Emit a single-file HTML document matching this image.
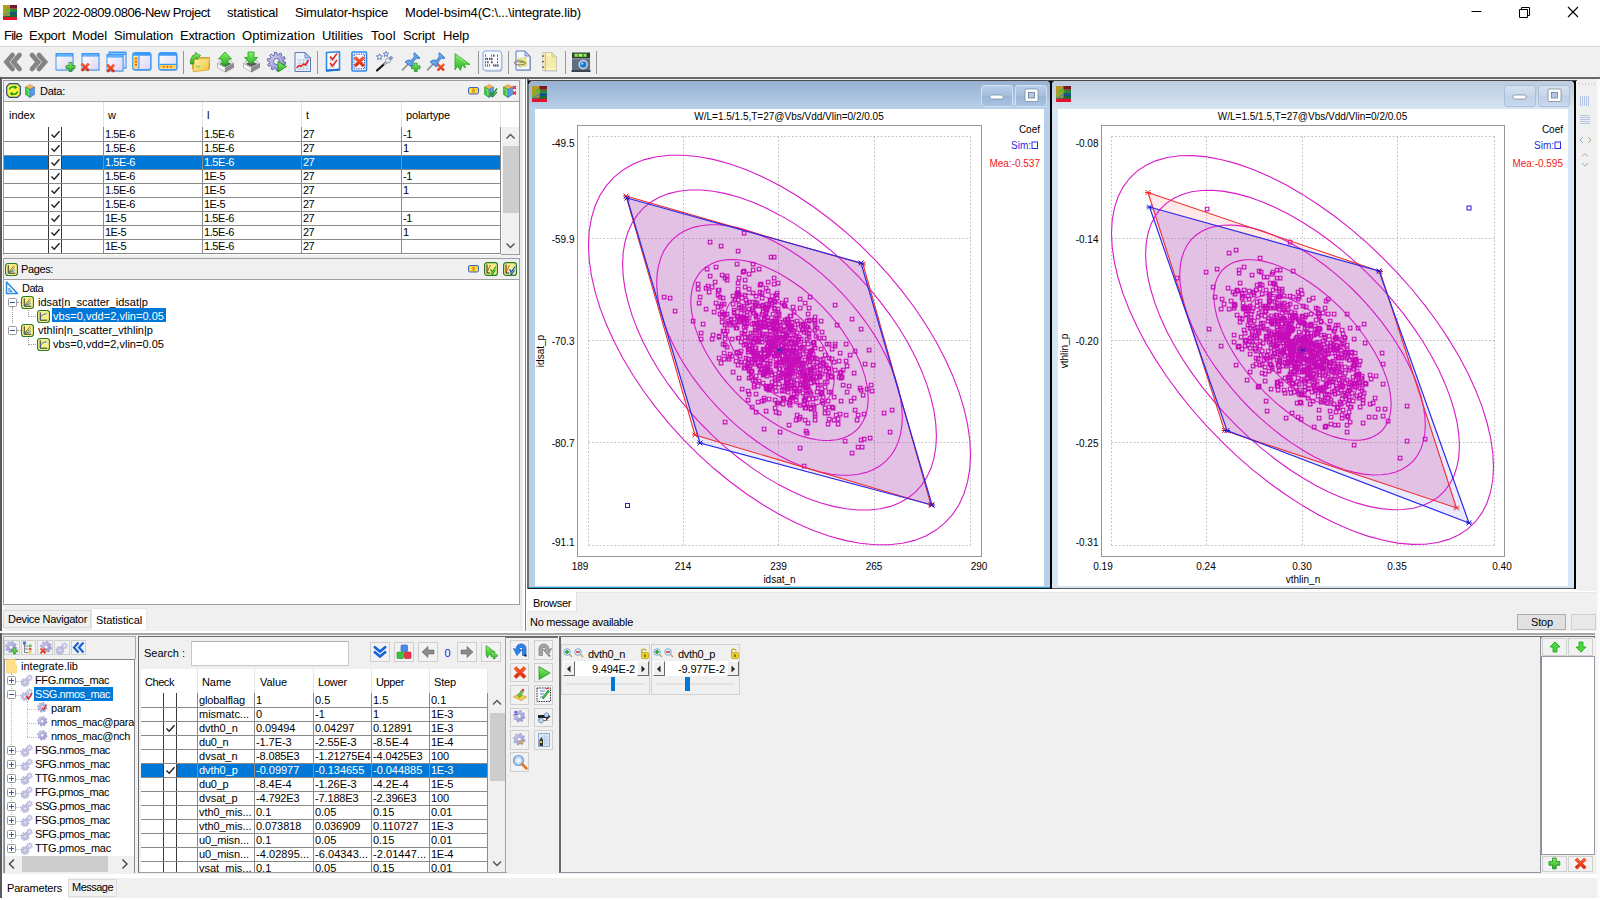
<!DOCTYPE html>
<html><head><meta charset="utf-8"><title>MBP</title><style>
html,body{margin:0;padding:0;}
body{width:1600px;height:900px;overflow:hidden;background:#f0f0f0;position:relative;font-family:"Liberation Sans",sans-serif;}
.a{position:absolute;display:block;}
.t{position:absolute;white-space:nowrap;overflow:visible;}
svg{overflow:visible;}
</style></head><body>
<svg width="0" height="0" style="position:absolute"><defs>
<linearGradient id="gwin" x1="0" y1="0" x2="1" y2="1"><stop offset="0" stop-color="#ffffff"/><stop offset="1" stop-color="#d9d4f7"/></linearGradient>
<linearGradient id="ggrn" x1="0" y1="0" x2="0" y2="1"><stop offset="0" stop-color="#8cf06a"/><stop offset="1" stop-color="#27b027"/></linearGradient>
<linearGradient id="gred" x1="0" y1="0" x2="0" y2="1"><stop offset="0" stop-color="#ff6a3a"/><stop offset="1" stop-color="#d81e05"/></linearGradient>
<linearGradient id="gfold" x1="0" y1="0" x2="1" y2="1"><stop offset="0" stop-color="#fff6b0"/><stop offset="1" stop-color="#f2c230"/></linearGradient>
<linearGradient id="ggear" x1="0" y1="0" x2="1" y2="1"><stop offset="0" stop-color="#d5d5f2"/><stop offset="1" stop-color="#8a8acb"/></linearGradient>
<linearGradient id="gpin" x1="0" y1="0" x2="1" y2="1"><stop offset="0" stop-color="#8fc4f5"/><stop offset="1" stop-color="#3b82d6"/></linearGradient>
<linearGradient id="gtray" x1="0" y1="0" x2="0" y2="1"><stop offset="0" stop-color="#ffffff"/><stop offset="1" stop-color="#c8c8c8"/></linearGradient>
<linearGradient id="gbtn" x1="0" y1="0" x2="0" y2="1"><stop offset="0" stop-color="#f6f6f6"/><stop offset="1" stop-color="#dcdcdc"/></linearGradient>
</defs></svg>
<div class="a" style="left:0px;top:0px;width:1600px;height:46px;background:#ffffff;"></div>
<div class="a" style="left:0px;top:46px;width:1600px;height:1px;background:#d4d4d4;"></div>
<div class="a" style="left:0px;top:47px;width:1600px;height:30px;background:#f0f0f0;"></div>
<svg class="a" style="left:3px;top:5px;width:14px;height:15px" viewBox="0 0 14 15"><rect width="14" height="12" fill="#1d6a3a"/><rect x="6" y="0" width="8" height="3" fill="#7a1628"/><rect x="6" y="3" width="8" height="1" fill="#b04a2a"/><rect x="6" y="4" width="8" height="3" fill="#1f8a3c"/><rect x="6" y="7" width="8" height="2.5" fill="#1b4f8a"/><rect x="6" y="9.5" width="8" height="2.5" fill="#146a34"/><rect x="0" y="0" width="7" height="11" fill="#b89a22"/><path d="M0 10 L7 3 M1 11 L8 5 M2 7 L6 2" stroke="#58b83a" stroke-width="1.2" fill="none"/><path d="M1 9 L6 6" stroke="#e08a20" stroke-width="1" fill="none"/><path d="M2 10.5 L7 8" stroke="#5080d0" stroke-width="1" fill="none"/><rect x="0" y="12" width="14" height="3" fill="#e8112d"/></svg>
<div class="t" style="left:23px;top:3.80px;height:17px;line-height:17px;font-size:13px;color:#000;letter-spacing:-0.455px;">MBP 2022-0809.0806-New Project</div>
<div class="t" style="left:227px;top:3.80px;height:17px;line-height:17px;font-size:13px;color:#000;letter-spacing:-0.224px;">statistical</div>
<div class="t" style="left:295px;top:3.80px;height:17px;line-height:17px;font-size:13px;color:#000;letter-spacing:-0.239px;">Simulator-hspice</div>
<div class="t" style="left:405px;top:3.80px;height:17px;line-height:17px;font-size:13px;color:#000;letter-spacing:-0.162px;">Model-bsim4(C:\...\integrate.lib)</div>
<svg class="a" style="left:1460px;top:0;width:140px;height:28px" viewBox="0 0 140 28"><path d="M11.5 11.5h10" stroke="#000" stroke-width="1" fill="none"/><path d="M59.5 9.5h8v8h-8z M61.5 9.5v-2h8v8h-2" stroke="#000" stroke-width="1" fill="none"/><path d="M108 7l10 10M118 7l-10 10" stroke="#000" stroke-width="1.1" fill="none"/></svg>
<div class="t" style="left:4px;top:27.20px;height:17px;line-height:17px;font-size:13px;color:#000;letter-spacing:-0.737px;">File</div>
<div class="t" style="left:29px;top:27.20px;height:17px;line-height:17px;font-size:13px;color:#000;letter-spacing:-0.262px;">Export</div>
<div class="t" style="left:72px;top:27.20px;height:17px;line-height:17px;font-size:13px;color:#000;letter-spacing:-0.082px;">Model</div>
<div class="t" style="left:114px;top:27.20px;height:17px;line-height:17px;font-size:13px;color:#000;letter-spacing:-0.170px;">Simulation</div>
<div class="t" style="left:180px;top:27.20px;height:17px;line-height:17px;font-size:13px;color:#000;letter-spacing:-0.280px;">Extraction</div>
<div class="t" style="left:242px;top:27.20px;height:17px;line-height:17px;font-size:13px;color:#000;letter-spacing:0.062px;">Optimization</div>
<div class="t" style="left:322px;top:27.20px;height:17px;line-height:17px;font-size:13px;color:#000;letter-spacing:-0.100px;">Utilities</div>
<div class="t" style="left:371px;top:27.20px;height:17px;line-height:17px;font-size:13px;color:#000;letter-spacing:0.288px;">Tool</div>
<div class="t" style="left:403px;top:27.20px;height:17px;line-height:17px;font-size:13px;color:#000;letter-spacing:-0.205px;">Script</div>
<div class="t" style="left:443px;top:27.20px;height:17px;line-height:17px;font-size:13px;color:#000;letter-spacing:-0.184px;">Help</div>
<svg class="a" style="left:4px;top:53px;width:18px;height:18px" viewBox="0 0 18 18"><path d="M8.5 2L2.5 9L8.5 16M15.5 2L9.5 9L15.5 16" stroke="#848484" stroke-width="4.800" fill="none" stroke-linecap="round" stroke-linejoin="miter"/></svg>
<svg class="a" style="left:29px;top:53px;width:19px;height:18px" viewBox="0 0 19 18"><path d="M3 2L9 9L3 16M10 2L16 9L10 16" stroke="#848484" stroke-width="4.800" fill="none" stroke-linecap="round" stroke-linejoin="miter"/></svg>
<svg class="a" style="left:55px;top:52px;width:21px;height:21px" viewBox="0 0 21 21"><rect x="1.5" y="2.5" width="17" height="16.5" fill="#9a9a9a" opacity="0.5"/><rect x="1" y="1.5" width="17" height="16.5" fill="url(#gwin)" stroke="#3d9af8" stroke-width="1"/><rect x="1" y="1.5" width="17" height="3" fill="#3d9af8"/><rect x="2" y="2.5" width="15" height="1" fill="#8cc6ff"/><path transform="translate(11,10.5) scale(1.0)" d="M0 3h3v-3h3v3h3v3h-3v3h-3v-3h-3z" fill="url(#ggrn)" stroke="#1a8a1a" stroke-width="0.7" stroke-linejoin="round"/></svg>
<svg class="a" style="left:81px;top:52px;width:21px;height:21px" viewBox="0 0 21 21"><rect x="1.5" y="2.5" width="17" height="16.5" fill="#9a9a9a" opacity="0.5"/><rect x="1" y="1.5" width="17" height="16.5" fill="url(#gwin)" stroke="#3d9af8" stroke-width="1"/><rect x="1" y="1.5" width="17" height="3" fill="#3d9af8"/><rect x="2" y="2.5" width="15" height="1" fill="#8cc6ff"/><path transform="translate(0,11) scale(1.05)" d="M1.5 0L4 2.5L6.5 0L8 1.5L5.5 4L8 6.5L6.5 8L4 5.5L1.5 8L0 6.5L2.5 4L0 1.5z" fill="url(#gred)" stroke="#e0401a" stroke-width="0.5" stroke-linejoin="round"/></svg>
<svg class="a" style="left:106px;top:51px;width:22px;height:22px" viewBox="0 0 22 22"><rect x="3.5" y="2" width="17" height="16" fill="#9a9a9a" opacity="0.5"/><rect x="3" y="1" width="17" height="16" fill="url(#gwin)" stroke="#3d9af8" stroke-width="1"/><rect x="3" y="1" width="17" height="3" fill="#3d9af8"/><rect x="4" y="2" width="15" height="1" fill="#8cc6ff"/><rect x="1.5" y="4.5" width="16" height="16.5" fill="#9a9a9a" opacity="0.5"/><rect x="1" y="3.5" width="16" height="16.5" fill="url(#gwin)" stroke="#3d9af8" stroke-width="1"/><rect x="1" y="3.5" width="16" height="3" fill="#3d9af8"/><rect x="2" y="4.5" width="14" height="1" fill="#8cc6ff"/><path transform="translate(0.5,13) scale(1.05)" d="M1.5 0L4 2.5L6.5 0L8 1.5L5.5 4L8 6.5L6.5 8L4 5.5L1.5 8L0 6.5L2.5 4L0 1.5z" fill="url(#gred)" stroke="#e0401a" stroke-width="0.5" stroke-linejoin="round"/></svg>
<svg class="a" style="left:132px;top:52px;width:21px;height:20px" viewBox="0 0 21 20"><rect x="1.5" y="2" width="18" height="17" rx="2" fill="#8a8a8a" opacity="0.6"/><rect x="0.8" y="0.8" width="18" height="17" rx="2" fill="url(#gwin)" stroke="#3d9af8" stroke-width="1.4"/><rect x="0.8" y="0.8" width="18" height="3" rx="1.5" fill="#3d9af8"/><rect x="2" y="4.5" width="4" height="12" fill="#ffd24a"/><rect x="6.3" y="4" width="1.2" height="13" fill="#3d9af8"/><rect x="3" y="6" width="2" height="1.5" fill="#ff4a20"/><rect x="3" y="9" width="2" height="1.5" fill="#ff4a20"/><rect x="3" y="12" width="2" height="1.5" fill="#ff4a20"/></svg>
<svg class="a" style="left:158px;top:52px;width:21px;height:20px" viewBox="0 0 21 20"><rect x="1.5" y="2" width="18" height="17" rx="2" fill="#8a8a8a" opacity="0.6"/><rect x="0.8" y="0.8" width="18" height="17" rx="2" fill="url(#gwin)" stroke="#3d9af8" stroke-width="1.4"/><rect x="0.8" y="0.8" width="18" height="3" rx="1.5" fill="#3d9af8"/><rect x="2" y="13" width="15.6" height="3.6" fill="#ffd24a"/><rect x="1.5" y="11.8" width="16.6" height="1.2" fill="#3d9af8"/><rect x="5" y="14" width="1.6" height="1.6" fill="#ff4a20"/><rect x="8.5" y="14" width="1.6" height="1.6" fill="#ff4a20"/><rect x="12" y="14" width="1.6" height="1.6" fill="#ff4a20"/></svg>
<div class="a" style="left:183px;top:51px;width:1.2px;height:23px;background:#969696;"></div>
<div class="a" style="left:317px;top:51px;width:1.2px;height:23px;background:#969696;"></div>
<div class="a" style="left:478px;top:51px;width:1.2px;height:23px;background:#969696;"></div>
<div class="a" style="left:508px;top:51px;width:1.2px;height:23px;background:#969696;"></div>
<div class="a" style="left:565px;top:51px;width:1.2px;height:23px;background:#969696;"></div>
<div class="a" style="left:596px;top:51px;width:1.2px;height:23px;background:#969696;"></div>
<svg class="a" style="left:189px;top:51px;width:22px;height:22px" viewBox="0 0 22 22"><path d="M3.500 4.500h5.500l1.500 2h10v11.500h-17z" fill="#f2c84a" stroke="#c8982a" stroke-width="0.800" stroke-linejoin="round"/><path d="M5.500 8.500l15-1.500-1 12-15.500 1.800z" fill="url(#gfold)" stroke="#d4a630" stroke-width="0.800" stroke-linejoin="round"/><path d="M1.500 13c-0.800-5 1.500-9 5.500-9.500l-0.800-2 5.300 3-3.800 4-0.300-2.200c-2.200 0.500-3.400 3.200-2.900 6.700z" fill="url(#ggrn)" stroke="#149414" stroke-width="0.700" stroke-linejoin="round"/><path d="M6 15c2-1.500 4.500-1 6 1-2 1.500-4.500 1-6-1z" fill="#9ad870" opacity="0.900"/></svg>
<svg class="a" style="left:216px;top:51px;width:19px;height:22px" viewBox="0 0 19 22"><path d="M1.500 12.500L6 9h7.500L17.500 12.500" fill="#e8e8e8" stroke="#9a9a9a" stroke-width="0.700"/><path d="M3.500 12.800L9.500 10.500 15.500 12.800 9.500 16z" fill="#5a5a5a"/><path d="M1.500 12.500L9.500 17v4L1.500 16.500z" fill="#fbfbfb" stroke="#9a9a9a" stroke-width="0.700" stroke-linejoin="round"/><path d="M9.500 17L17.500 12.500v4L9.500 21z" fill="#8c8c8c" stroke="#7a7a7a" stroke-width="0.700" stroke-linejoin="round"/><path d="M9 1l6.5 7h-3.5v6h-6v-6h-3.5z" fill="url(#ggrn)" stroke="#16a016" stroke-width="0.8" stroke-linejoin="round"/></svg>
<svg class="a" style="left:242px;top:51px;width:19px;height:22px" viewBox="0 0 19 22"><path d="M1.500 12.500L6 9h7.500L17.500 12.500" fill="#e8e8e8" stroke="#9a9a9a" stroke-width="0.700"/><path d="M3.500 12.800L9.500 10.500 15.500 12.800 9.500 16z" fill="#5a5a5a"/><path d="M1.500 12.500L9.500 17v4L1.500 16.500z" fill="#fbfbfb" stroke="#9a9a9a" stroke-width="0.700" stroke-linejoin="round"/><path d="M9.500 17L17.500 12.500v4L9.500 21z" fill="#8c8c8c" stroke="#7a7a7a" stroke-width="0.700" stroke-linejoin="round"/><path d="M6 1h6v5.5h3.5l-6.5 7-6.5-7h3.5z" fill="url(#ggrn)" stroke="#16a016" stroke-width="0.8" stroke-linejoin="round"/></svg>
<svg class="a" style="left:267px;top:52px;width:21px;height:21px" viewBox="0 0 21 21"><path d="M16.30 9.50 L18.67 10.19 L18.21 12.45 L15.76 12.16 L15.00 13.50 L16.51 15.45 L14.81 17.01 L13.00 15.33 L11.60 15.97 L11.68 18.44 L9.38 18.70 L8.90 16.27 L7.40 15.97 L6.01 18.01 L4.00 16.87 L5.04 14.63 L4.00 13.50 L1.67 14.33 L0.72 12.23 L2.87 11.03 L2.70 9.50 L0.33 8.81 L0.79 6.55 L3.24 6.84 L4.00 5.50 L2.49 3.55 L4.19 1.99 L6.00 3.67 L7.40 3.03 L7.32 0.56 L9.62 0.30 L10.10 2.73 L11.60 3.03 L12.99 0.99 L15.00 2.13 L13.96 4.37 L15.00 5.50 L17.33 4.67 L18.28 6.77 L16.13 7.97Z" fill="url(#ggear)" stroke="#5a5aa8" stroke-width="0.9" fill-rule="evenodd"/><circle cx="9.5" cy="9.5" r="3" fill="#f0f0f0" stroke="#5a5aa8" stroke-width="0.9"/><path d="M11 9.5l8.5 5-8.5 5.5z" fill="url(#ggrn)" stroke="#168a16" stroke-width="0.8" stroke-linejoin="round"/></svg>
<svg class="a" style="left:294px;top:51px;width:18px;height:22px" viewBox="0 0 18 22"><path d="M1 1.5h10l5.5 5.5v13.5h-15.5z" fill="#eef3fb" stroke="#5a78b8" stroke-width="1"/><path d="M11 1.5v5.5h5.5z" fill="#b8cdf0" stroke="#5a78b8" stroke-width="0.8"/><path d="M3 9h12M3 12h12M3 15h12M3 18h12M6 8v11M9.5 8v11M13 8v11" stroke="#a8c8ea" stroke-width="0.7"/><path d="M2.5 17l2.5-2.5 2 1 2.5-2.5 2 1 3-5" fill="none" stroke="#e8211a" stroke-width="1.5" stroke-linejoin="round"/></svg>
<svg class="a" style="left:325px;top:51px;width:17px;height:22px" viewBox="0 0 17 22"><path d="M1.5 1.5l13-0.8v18l-13 1.2z" fill="#fdfdff" stroke="#2f8ae8" stroke-width="1.6" stroke-linejoin="round"/><path d="M1 19.5l14-1" stroke="#1b6fd0" stroke-width="2"/><rect x="5.5" y="6.5" width="4" height="3.5" fill="#fff" stroke="#b0b0c8" stroke-width="0.6"/><rect x="5.5" y="13" width="4" height="3.5" fill="#fff" stroke="#b0b0c8" stroke-width="0.6"/><path d="M5 5.5l2.5 3 4.5-6" fill="none" stroke="#e8241a" stroke-width="1.5"/><path d="M5 12l2.5 3 4.5-6" fill="none" stroke="#e8241a" stroke-width="1.5"/></svg>
<svg class="a" style="left:351px;top:51px;width:17px;height:22px" viewBox="0 0 17 22"><rect x="1" y="1" width="14.5" height="19" rx="1" fill="#f6f6ff" stroke="#2f8ae8" stroke-width="1.6"/><rect x="3" y="3.2" width="10.5" height="14.6" fill="none" stroke="#3a4ac0" stroke-width="1" stroke-dasharray="1.3 1"/><path transform="translate(3.2,5.5) scale(1.3)" d="M1.5 0L4 2.5L6.5 0L8 1.5L5.5 4L8 6.5L6.5 8L4 5.5L1.5 8L0 6.5L2.5 4L0 1.5z" fill="url(#gred)" stroke="#e0401a" stroke-width="0.5" stroke-linejoin="round"/></svg>
<svg class="a" style="left:375px;top:51px;width:19px;height:22px" viewBox="0 0 19 22"><path d="M2 19.5L11.5 11" stroke="#111" stroke-width="2.2" stroke-linecap="round"/><path d="M9.5 13l3-2.7" stroke="#aaa" stroke-width="2.2" stroke-linecap="round"/><circle cx="13" cy="9.5" r="2.6" fill="#dfe8ee" stroke="#8a9aa8" stroke-width="0.8"/><polygon points="4.50,2.80 5.35,4.84 7.54,5.01 5.87,6.44 6.38,8.59 4.50,7.44 2.62,8.59 3.13,6.44 1.46,5.01 3.65,4.84" fill="#eef4ff" stroke="#4a62b8" stroke-width="0.8"/><polygon points="11.00,0.40 11.74,2.18 13.66,2.33 12.20,3.59 12.65,5.47 11.00,4.46 9.35,5.47 9.80,3.59 8.34,2.33 10.26,2.18" fill="#eef4ff" stroke="#4a62b8" stroke-width="0.8"/><polygon points="16.00,5.20 16.48,6.34 17.71,6.44 16.77,7.25 17.06,8.46 16.00,7.81 14.94,8.46 15.23,7.25 14.29,6.44 15.52,6.34" fill="#eef4ff" stroke="#4a62b8" stroke-width="0.8"/></svg>
<svg class="a" style="left:401px;top:51px;width:21px;height:22px" viewBox="0 0 21 22"><path d="M1.5 19l6.5-7" stroke="#8a8a8a" stroke-width="1.6" stroke-linecap="round"/><path d="M4 11c2-2 5-2.5 6.5-1.5l3-4.5c-1-1-1-2.5 0-3.5l5.5 5.5c-1.5 1-2.5 0.5-3.5 0l-3.5 4c0.5 1.5 0 3.500-1.5 5z" fill="url(#gpin)" stroke="#2c6fc0" stroke-width="0.8" stroke-linejoin="round"/><path transform="translate(10.5,12) scale(0.95)" d="M0 3h3v-3h3v3h3v3h-3v3h-3v-3h-3z" fill="url(#ggrn)" stroke="#1a8a1a" stroke-width="0.7" stroke-linejoin="round"/></svg>
<svg class="a" style="left:426px;top:51px;width:21px;height:22px" viewBox="0 0 21 22"><path d="M1.5 19l6.5-7" stroke="#8a8a8a" stroke-width="1.6" stroke-linecap="round"/><path d="M4 11c2-2 5-2.5 6.5-1.5l3-4.5c-1-1-1-2.5 0-3.5l5.5 5.5c-1.5 1-2.5 0.5-3.5 0l-3.5 4c0.5 1.5 0 3.500-1.5 5z" fill="url(#gpin)" stroke="#2c6fc0" stroke-width="0.8" stroke-linejoin="round"/><path transform="translate(11,12.5) scale(0.95)" d="M1.5 0L4 2.5L6.5 0L8 1.5L5.5 4L8 6.5L6.5 8L4 5.5L1.5 8L0 6.5L2.5 4L0 1.5z" fill="url(#gred)" stroke="#e0401a" stroke-width="0.5" stroke-linejoin="round"/></svg>
<svg class="a" style="left:454px;top:52px;width:18px;height:20px" viewBox="0 0 18 20"><path d="M1 1.5L16 12.5l-5.5-0.5 1 4-3.5-3-1.5 5.5-3-4.5-2.5 4z" fill="url(#ggrn)" stroke="#2aa82a" stroke-width="0.8" stroke-linejoin="round"/><path d="M2.5 3.5l9 7.500" stroke="#b8f0a0" stroke-width="0.8" fill="none"/></svg>
<svg class="a" style="left:482px;top:50px;width:22px;height:23px" viewBox="0 0 22 23"><rect x="2" y="2.200" width="18.5" height="19.5" rx="3" fill="#8a8a8a" opacity="0.55"/><rect x="1" y="1" width="18.5" height="19.5" rx="3" fill="#fbfcff" stroke="#a9c0ec" stroke-width="1.4"/><rect x="3.2" y="4.5" width="0.8" height="2.2" fill="#3a3a4a"/><rect x="9.2" y="4.5" width="0.8" height="2.2" fill="#3a3a4a"/><rect x="11.2" y="4.5" width="1.3" height="2.2" fill="#3a3a4a"/><rect x="15.2" y="4.5" width="0.8" height="2.2" fill="#3a3a4a"/><rect x="3.2" y="7.8" width="1.3" height="2.2" fill="#3a3a4a"/><rect x="5.2" y="7.8" width="0.8" height="2.2" fill="#3a3a4a"/><rect x="7.2" y="7.8" width="1.3" height="2.2" fill="#3a3a4a"/><rect x="9.2" y="7.8" width="1.3" height="2.2" fill="#3a3a4a"/><rect x="15.2" y="7.8" width="0.8" height="2.2" fill="#3a3a4a"/><rect x="3.2" y="11.1" width="0.8" height="2.2" fill="#3a3a4a"/><rect x="5.2" y="11.1" width="1.3" height="2.2" fill="#3a3a4a"/><rect x="9.2" y="11.1" width="1.3" height="2.2" fill="#3a3a4a"/><rect x="15.2" y="11.1" width="0.8" height="2.2" fill="#3a3a4a"/><rect x="3.2" y="14.4" width="0.8" height="2.2" fill="#3a3a4a"/><rect x="5.2" y="14.4" width="0.8" height="2.2" fill="#3a3a4a"/><rect x="7.2" y="14.4" width="0.8" height="2.2" fill="#3a3a4a"/><rect x="11.2" y="14.4" width="1.3" height="2.2" fill="#3a3a4a"/><rect x="13.2" y="14.4" width="1.3" height="2.2" fill="#3a3a4a"/><rect x="15.2" y="14.4" width="1.3" height="2.2" fill="#3a3a4a"/></svg>
<svg class="a" style="left:513px;top:50px;width:21px;height:23px" viewBox="0 0 21 23"><path d="M4 2h9l5 5v14h-14z" fill="#8a8a8a" opacity="0.5"/><path d="M3 1h9l5 5v14h-14z" fill="#f4f7fd" stroke="#5a78c0" stroke-width="1"/><path d="M12 1v5h5z" fill="#b8cdf0" stroke="#5a78c0" stroke-width="0.8"/><path d="M4.500 9l8-1.500 1.500 8-8 1.800z" fill="#f2ec8a" stroke="#c8c060" stroke-width="0.6"/><path d="M11 11.500c-3-1-7-1-9 0.500-1.500 1.500 0.500 3 3 3 3 0 7.500-0.500 7.500-2 0-1-3-1-6-0.500" fill="none" stroke="#6a6a6a" stroke-width="1"/></svg>
<svg class="a" style="left:541px;top:51px;width:18px;height:22px" viewBox="0 0 18 22"><path d="M2.5 2.500h9l4.500 4.500v13.500h-13.500z" fill="#9a9a9a" opacity="0.5"/><path d="M1.8 1.500h9l4.500 4.500v13.500h-13.500z" fill="#fdf6b8" stroke="#c8c8b8" stroke-width="0.9"/><path d="M10.800 1.500v4.500h4.500z" fill="#e8e0a0" stroke="#c0c0a8" stroke-width="0.7"/><path d="M4.500 6h10.500" stroke="#e8d890" stroke-width="0.7"/><path d="M4.500 8h10.500" stroke="#e8d890" stroke-width="0.7"/><path d="M4.500 10h10.500" stroke="#e8d890" stroke-width="0.7"/><path d="M4.500 12h10.500" stroke="#e8d890" stroke-width="0.7"/><path d="M4.500 14h10.500" stroke="#e8d890" stroke-width="0.7"/><path d="M4.500 16h10.500" stroke="#e8d890" stroke-width="0.7"/><path d="M4.300 2v17.500" stroke="#f08a6a" stroke-width="0.8"/><rect x="1" y="4.500" width="2" height="1.200" fill="#555"/><rect x="1" y="10" width="2" height="1.200" fill="#555"/><rect x="1" y="15.500" width="2" height="1.200" fill="#555"/></svg>
<svg class="a" style="left:571px;top:51px;width:20px;height:22px" viewBox="0 0 20 22"><rect x="1" y="1.500" width="18" height="5.500" fill="#3a3a3a"/><rect x="3" y="2.500" width="13" height="3.500" fill="#4aa82a"/><rect x="4" y="3" width="2.500" height="2.500" fill="#9ae060"/><rect x="8" y="3" width="3" height="2.500" fill="#b8f080"/><rect x="13" y="3" width="2" height="2.500" fill="#9ae060"/><rect x="1" y="7" width="18" height="12" fill="#5f6f7f"/><rect x="1" y="7" width="18" height="1.500" fill="#7a8a9a"/><rect x="0.500" y="19" width="19" height="2" fill="#3a444e"/><circle cx="12.200" cy="13.500" r="4.800" fill="#dfe4ea" stroke="#8a96a2" stroke-width="0.8"/><circle cx="12.200" cy="13.500" r="3.300" fill="#1a78d0"/><circle cx="11.200" cy="12.500" r="1.200" fill="#9ad0ff"/></svg>
<div class="a" style="left:0px;top:77px;width:1600px;height:2px;background:#696969;"></div>
<div class="a" style="left:0px;top:79px;width:1600px;height:821px;background:#f0f0f0;"></div>
<div class="a" style="left:0px;top:77px;width:2px;height:554px;background:#5a5a5a;"></div>
<div class="a" style="left:2px;top:79px;width:2px;height:552px;background:#ffffff;"></div>
<div class="a" style="left:3px;top:80px;width:517px;height:175px;background:#ffffff;border:1px solid #9c9ca4;box-sizing:border-box;"></div>
<div class="a" style="left:4px;top:81px;width:515px;height:20px;background:#f0f0f0;"></div>
<div class="a" style="left:4px;top:101px;width:515px;height:1px;background:#a0a0a0;"></div>
<svg class="a" style="left:6px;top:83px;width:15px;height:15px" viewBox="0 0 15 15"><path d="M3.500 0.700h8l2.800 2.800v8l-2.800 2.800h-8l-2.800-2.800v-8z" fill="#f8f43a" stroke="#2a4a8a" stroke-width="1.200"/><path d="M3.500 6.500c0.500-2.500 3.500-3.300 6-2.200" fill="none" stroke="#1f9a1f" stroke-width="1.500"/><path d="M8.500 2.200l3 2.200-3.200 1.800z" fill="#1f9a1f"/><path d="M11.500 8.500c-0.500 2.500-3.500 3.300-6 2.200" fill="none" stroke="#1f9a1f" stroke-width="1.500"/><path d="M6.500 12.800l-3-2.200 3.200-1.800z" fill="#1f9a1f"/></svg>
<svg class="a" style="left:25px;top:83.5px;width:17px;height:15px" viewBox="0 0 17 15"><path d="M5 0.500L9.500 3 5 5.500 0.500 3z" fill="#f2b45a" stroke="#c88a30" stroke-width="0.500"/><path d="M0.500 3L5 5.500v8L0.500 10.500z" fill="#3dc83d" stroke="#1a8a1a" stroke-width="0.500"/><path d="M9.500 3L5 5.500v8l4.500-3z" fill="#5a9ae8" stroke="#2a62b8" stroke-width="0.500"/><path d="M1.500 5l2.500 1.500v5" fill="none" stroke="#b8f0b8" stroke-width="0.800"/></svg>
<div class="t" style="left:40px;top:83.50px;height:15px;line-height:15px;font-size:11px;color:#000;letter-spacing:-0.258px;">Data<span>:</span></div>
<svg class="a" style="left:468px;top:86.5px;width:11px;height:8px" viewBox="0 0 11 8"><rect x="0.500" y="0.500" width="10" height="6.500" rx="1.500" fill="#ffd83a" stroke="#3a62c8" stroke-width="1"/><path d="M5.500 1.500c-1 1-1 3.500 0 4.500" fill="none" stroke="#c89a1a" stroke-width="1.200"/><path d="M5.500 1.500c1 1 1 3.500 0 4.500" fill="none" stroke="#c89a1a" stroke-width="1.200"/></svg>
<svg class="a" style="left:484px;top:83.5px;width:17px;height:15px" viewBox="0 0 17 15"><path d="M5 0.500L9.500 3 5 5.500 0.500 3z" fill="#f2b45a" stroke="#c88a30" stroke-width="0.500"/><path d="M0.500 3L5 5.500v8L0.500 10.500z" fill="#3dc83d" stroke="#1a8a1a" stroke-width="0.500"/><path d="M9.500 3L5 5.500v8l4.500-3z" fill="#5a9ae8" stroke="#2a62b8" stroke-width="0.500"/><path d="M1.500 5l2.500 1.500v5" fill="none" stroke="#b8f0b8" stroke-width="0.800"/><path d="M6 8l2.500 2.500 4.500-6" fill="none" stroke="#1f9a1f" stroke-width="1.500"/><path d="M6 10.500l2.500 2.500 4.500-5" fill="none" stroke="#2a8a2a" stroke-width="1.200"/></svg>
<svg class="a" style="left:503px;top:83.5px;width:17px;height:15px" viewBox="0 0 17 15"><path d="M5 0.500L9.500 3 5 5.500 0.500 3z" fill="#f2b45a" stroke="#c88a30" stroke-width="0.500"/><path d="M0.500 3L5 5.500v8L0.500 10.500z" fill="#3dc83d" stroke="#1a8a1a" stroke-width="0.500"/><path d="M9.500 3L5 5.500v8l4.500-3z" fill="#5a9ae8" stroke="#2a62b8" stroke-width="0.500"/><path d="M1.500 5l2.500 1.500v5" fill="none" stroke="#b8f0b8" stroke-width="0.800"/><path d="M10 2l3 3m0-3l-3 3M10 7.500l3 3m0-3l-3 3" stroke="#e8241a" stroke-width="1.200" fill="none"/></svg>
<div class="a" style="left:4px;top:102px;width:496px;height:25px;background:#ffffff;"></div>
<div class="a" style="left:103px;top:102px;width:1px;height:25px;background:#e5e5e5;"></div>
<div class="a" style="left:202px;top:102px;width:1px;height:25px;background:#e5e5e5;"></div>
<div class="a" style="left:301px;top:102px;width:1px;height:25px;background:#e5e5e5;"></div>
<div class="a" style="left:401px;top:102px;width:1px;height:25px;background:#e5e5e5;"></div>
<div class="a" style="left:500px;top:102px;width:1px;height:25px;background:#e5e5e5;"></div>
<div class="t" style="left:9px;top:108.00px;height:15px;line-height:15px;font-size:11px;color:#000;letter-spacing:-0.060px;">index</div>
<div class="t" style="left:108px;top:108.00px;height:15px;line-height:15px;font-size:11px;color:#000;">w</div>
<div class="t" style="left:207px;top:108.00px;height:15px;line-height:15px;font-size:11px;color:#000;">l</div>
<div class="t" style="left:306px;top:108.00px;height:15px;line-height:15px;font-size:11px;color:#000;">t</div>
<div class="t" style="left:406px;top:108.00px;height:15px;line-height:15px;font-size:11px;color:#000;letter-spacing:-0.139px;">polartype</div>
<div class="a" style="left:48px;top:127px;width:13.5px;height:14px;background:#ffffff;border-left:1.500px solid #3a3a3a;border-right:1.500px solid #3a3a3a;box-sizing:border-box;"></div>
<svg class="a" style="left:48.5px;top:127.8px;width:13px;height:13px" viewBox="0 0 13 13"><path d="M2.500 6.500L5.200 9.200L10.500 3.200" fill="none" stroke="#222" stroke-width="1.400"/></svg>
<div class="t" style="left:105px;top:126.80px;height:15px;line-height:15px;font-size:11px;color:#000;letter-spacing:-0.402px;">1.5E-6</div>
<div class="t" style="left:204px;top:126.80px;height:15px;line-height:15px;font-size:11px;color:#000;letter-spacing:-0.402px;">1.5E-6</div>
<div class="t" style="left:303px;top:126.80px;height:15px;line-height:15px;font-size:11px;color:#000;letter-spacing:-0.618px;">27</div>
<div class="t" style="left:403px;top:126.80px;height:15px;line-height:15px;font-size:11px;color:#000;letter-spacing:-0.391px;">-1</div>
<div class="a" style="left:48px;top:141px;width:13.5px;height:14px;background:#ffffff;border-left:1.500px solid #3a3a3a;border-right:1.500px solid #3a3a3a;box-sizing:border-box;"></div>
<svg class="a" style="left:48.5px;top:141.8px;width:13px;height:13px" viewBox="0 0 13 13"><path d="M2.500 6.500L5.200 9.200L10.500 3.200" fill="none" stroke="#222" stroke-width="1.400"/></svg>
<div class="t" style="left:105px;top:140.80px;height:15px;line-height:15px;font-size:11px;color:#000;letter-spacing:-0.402px;">1.5E-6</div>
<div class="t" style="left:204px;top:140.80px;height:15px;line-height:15px;font-size:11px;color:#000;letter-spacing:-0.402px;">1.5E-6</div>
<div class="t" style="left:303px;top:140.80px;height:15px;line-height:15px;font-size:11px;color:#000;letter-spacing:-0.618px;">27</div>
<div class="t" style="left:403px;top:140.80px;height:15px;line-height:15px;font-size:11px;color:#000;">1</div>
<div class="a" style="left:4px;top:155px;width:497px;height:14px;background:#0078d7;"></div>
<div class="a" style="left:48px;top:155px;width:13.5px;height:14px;background:#ffffff;border-left:1.500px solid #3a3a3a;border-right:1.500px solid #3a3a3a;box-sizing:border-box;"></div>
<svg class="a" style="left:48.5px;top:155.8px;width:13px;height:13px" viewBox="0 0 13 13"><path d="M2.500 6.500L5.200 9.200L10.500 3.200" fill="none" stroke="#222" stroke-width="1.400"/></svg>
<div class="t" style="left:105px;top:154.80px;height:15px;line-height:15px;font-size:11px;color:#fff;letter-spacing:-0.402px;">1.5E-6</div>
<div class="t" style="left:204px;top:154.80px;height:15px;line-height:15px;font-size:11px;color:#fff;letter-spacing:-0.402px;">1.5E-6</div>
<div class="t" style="left:303px;top:154.80px;height:15px;line-height:15px;font-size:11px;color:#fff;letter-spacing:-0.618px;">27</div>
<div class="a" style="left:48px;top:169px;width:13.5px;height:14px;background:#ffffff;border-left:1.500px solid #3a3a3a;border-right:1.500px solid #3a3a3a;box-sizing:border-box;"></div>
<svg class="a" style="left:48.5px;top:169.8px;width:13px;height:13px" viewBox="0 0 13 13"><path d="M2.500 6.500L5.200 9.200L10.500 3.200" fill="none" stroke="#222" stroke-width="1.400"/></svg>
<div class="t" style="left:105px;top:168.80px;height:15px;line-height:15px;font-size:11px;color:#000;letter-spacing:-0.402px;">1.5E-6</div>
<div class="t" style="left:204px;top:168.80px;height:15px;line-height:15px;font-size:11px;color:#000;letter-spacing:-0.559px;">1E-5</div>
<div class="t" style="left:303px;top:168.80px;height:15px;line-height:15px;font-size:11px;color:#000;letter-spacing:-0.618px;">27</div>
<div class="t" style="left:403px;top:168.80px;height:15px;line-height:15px;font-size:11px;color:#000;letter-spacing:-0.391px;">-1</div>
<div class="a" style="left:48px;top:183px;width:13.5px;height:14px;background:#ffffff;border-left:1.500px solid #3a3a3a;border-right:1.500px solid #3a3a3a;box-sizing:border-box;"></div>
<svg class="a" style="left:48.5px;top:183.8px;width:13px;height:13px" viewBox="0 0 13 13"><path d="M2.500 6.500L5.200 9.200L10.500 3.200" fill="none" stroke="#222" stroke-width="1.400"/></svg>
<div class="t" style="left:105px;top:182.80px;height:15px;line-height:15px;font-size:11px;color:#000;letter-spacing:-0.402px;">1.5E-6</div>
<div class="t" style="left:204px;top:182.80px;height:15px;line-height:15px;font-size:11px;color:#000;letter-spacing:-0.559px;">1E-5</div>
<div class="t" style="left:303px;top:182.80px;height:15px;line-height:15px;font-size:11px;color:#000;letter-spacing:-0.618px;">27</div>
<div class="t" style="left:403px;top:182.80px;height:15px;line-height:15px;font-size:11px;color:#000;">1</div>
<div class="a" style="left:48px;top:197px;width:13.5px;height:14px;background:#ffffff;border-left:1.500px solid #3a3a3a;border-right:1.500px solid #3a3a3a;box-sizing:border-box;"></div>
<svg class="a" style="left:48.5px;top:197.8px;width:13px;height:13px" viewBox="0 0 13 13"><path d="M2.500 6.500L5.200 9.200L10.500 3.200" fill="none" stroke="#222" stroke-width="1.400"/></svg>
<div class="t" style="left:105px;top:196.80px;height:15px;line-height:15px;font-size:11px;color:#000;letter-spacing:-0.402px;">1.5E-6</div>
<div class="t" style="left:204px;top:196.80px;height:15px;line-height:15px;font-size:11px;color:#000;letter-spacing:-0.559px;">1E-5</div>
<div class="t" style="left:303px;top:196.80px;height:15px;line-height:15px;font-size:11px;color:#000;letter-spacing:-0.618px;">27</div>
<div class="a" style="left:48px;top:211px;width:13.5px;height:14px;background:#ffffff;border-left:1.500px solid #3a3a3a;border-right:1.500px solid #3a3a3a;box-sizing:border-box;"></div>
<svg class="a" style="left:48.5px;top:211.8px;width:13px;height:13px" viewBox="0 0 13 13"><path d="M2.500 6.500L5.200 9.200L10.500 3.200" fill="none" stroke="#222" stroke-width="1.400"/></svg>
<div class="t" style="left:105px;top:210.80px;height:15px;line-height:15px;font-size:11px;color:#000;letter-spacing:-0.559px;">1E-5</div>
<div class="t" style="left:204px;top:210.80px;height:15px;line-height:15px;font-size:11px;color:#000;letter-spacing:-0.402px;">1.5E-6</div>
<div class="t" style="left:303px;top:210.80px;height:15px;line-height:15px;font-size:11px;color:#000;letter-spacing:-0.618px;">27</div>
<div class="t" style="left:403px;top:210.80px;height:15px;line-height:15px;font-size:11px;color:#000;letter-spacing:-0.391px;">-1</div>
<div class="a" style="left:48px;top:225px;width:13.5px;height:14px;background:#ffffff;border-left:1.500px solid #3a3a3a;border-right:1.500px solid #3a3a3a;box-sizing:border-box;"></div>
<svg class="a" style="left:48.5px;top:225.8px;width:13px;height:13px" viewBox="0 0 13 13"><path d="M2.500 6.500L5.200 9.200L10.500 3.200" fill="none" stroke="#222" stroke-width="1.400"/></svg>
<div class="t" style="left:105px;top:224.80px;height:15px;line-height:15px;font-size:11px;color:#000;letter-spacing:-0.559px;">1E-5</div>
<div class="t" style="left:204px;top:224.80px;height:15px;line-height:15px;font-size:11px;color:#000;letter-spacing:-0.402px;">1.5E-6</div>
<div class="t" style="left:303px;top:224.80px;height:15px;line-height:15px;font-size:11px;color:#000;letter-spacing:-0.618px;">27</div>
<div class="t" style="left:403px;top:224.80px;height:15px;line-height:15px;font-size:11px;color:#000;">1</div>
<div class="a" style="left:48px;top:239px;width:13.5px;height:14px;background:#ffffff;border-left:1.500px solid #3a3a3a;border-right:1.500px solid #3a3a3a;box-sizing:border-box;"></div>
<svg class="a" style="left:48.5px;top:239.8px;width:13px;height:13px" viewBox="0 0 13 13"><path d="M2.500 6.500L5.200 9.200L10.500 3.200" fill="none" stroke="#222" stroke-width="1.400"/></svg>
<div class="t" style="left:105px;top:238.80px;height:15px;line-height:15px;font-size:11px;color:#000;letter-spacing:-0.559px;">1E-5</div>
<div class="t" style="left:204px;top:238.80px;height:15px;line-height:15px;font-size:11px;color:#000;letter-spacing:-0.402px;">1.5E-6</div>
<div class="t" style="left:303px;top:238.80px;height:15px;line-height:15px;font-size:11px;color:#000;letter-spacing:-0.618px;">27</div>
<div class="a" style="left:4px;top:140.5px;width:497px;height:1.1px;background:#8a8a8a;"></div>
<div class="a" style="left:4px;top:154.5px;width:497px;height:1.1px;background:#8a8a8a;"></div>
<div class="a" style="left:4px;top:168.5px;width:497px;height:1.1px;background:#8a8a8a;"></div>
<div class="a" style="left:4px;top:182.5px;width:497px;height:1.1px;background:#8a8a8a;"></div>
<div class="a" style="left:4px;top:196.5px;width:497px;height:1.1px;background:#8a8a8a;"></div>
<div class="a" style="left:4px;top:210.5px;width:497px;height:1.1px;background:#8a8a8a;"></div>
<div class="a" style="left:4px;top:224.5px;width:497px;height:1.1px;background:#8a8a8a;"></div>
<div class="a" style="left:4px;top:238.5px;width:497px;height:1.1px;background:#8a8a8a;"></div>
<div class="a" style="left:4px;top:252.5px;width:497px;height:1.1px;background:#8a8a8a;"></div>
<div class="a" style="left:4px;top:253.6px;width:497px;height:0.4px;background:#ffffff;"></div>
<div class="a" style="left:103px;top:127px;width:1px;height:127px;background:#8a8a8a;"></div>
<div class="a" style="left:202px;top:127px;width:1px;height:127px;background:#8a8a8a;"></div>
<div class="a" style="left:301px;top:127px;width:1px;height:127px;background:#8a8a8a;"></div>
<div class="a" style="left:401px;top:127px;width:1px;height:127px;background:#8a8a8a;"></div>
<div class="a" style="left:500px;top:127px;width:1px;height:127px;background:#8a8a8a;"></div>
<div class="a" style="left:502px;top:127px;width:17px;height:127px;background:#f0f0f0;"></div><div class="a" style="left:502.5px;top:146px;width:16px;height:67px;background:#cdcdcd;"></div><svg class="a" style="left:502px;top:131px;width:17px;height:10px" viewBox="0 0 17 10"><path d="M4.5 7.500L8.5 3.500L12.5 7.500" fill="none" stroke="#505050" stroke-width="1.300"/></svg><svg class="a" style="left:502px;top:241px;width:17px;height:10px" viewBox="0 0 17 10"><path d="M4.5 2.500L8.5 6.500L12.5 2.500" fill="none" stroke="#505050" stroke-width="1.300"/></svg>
<div class="a" style="left:3px;top:258px;width:517px;height:347px;background:#ffffff;border:1px solid #9c9ca4;box-sizing:border-box;"></div>
<div class="a" style="left:4px;top:259px;width:515px;height:20px;background:#f0f0f0;"></div>
<div class="a" style="left:4px;top:279px;width:515px;height:1px;background:#a0a0a0;"></div>
<svg class="a" style="left:4.5px;top:262.5px;width:13px;height:13px" viewBox="0 0 14 14"><rect x="0.600" y="0.600" width="12.800" height="12.800" rx="2.500" fill="#f4f08a" stroke="#2a7a2a" stroke-width="1.200"/><path d="M3.500 2.500v8.500h7.500" fill="none" stroke="#222" stroke-width="1"/><path d="M3.500 10.500L10 2.500" stroke="#e83a2a" stroke-width="0.900"/><path d="M3.500 10.500L10.500 5" stroke="#2aa02a" stroke-width="0.900"/><path d="M3.500 10.500L10.500 8" stroke="#2a5ae8" stroke-width="0.900"/></svg>
<div class="t" style="left:21px;top:262.00px;height:15px;line-height:15px;font-size:11px;color:#000;letter-spacing:-0.374px;">Pages:</div>
<svg class="a" style="left:468px;top:265px;width:11px;height:8px" viewBox="0 0 11 8"><rect x="0.500" y="0.500" width="10" height="6.500" rx="1.500" fill="#ffd83a" stroke="#3a62c8" stroke-width="1"/><path d="M5.500 1.500c-1 1-1 3.500 0 4.500" fill="none" stroke="#c89a1a" stroke-width="1.200"/><path d="M5.500 1.500c1 1 1 3.500 0 4.500" fill="none" stroke="#c89a1a" stroke-width="1.200"/></svg>
<svg class="a" style="left:484px;top:262px;width:15px;height:14px" viewBox="0 0 15 14"><rect x="0.600" y="0.600" width="12.800" height="12.800" rx="2.500" fill="#f4f08a" stroke="#2a7a2a" stroke-width="1.200"/><path d="M3 2.500v8.500h3" fill="none" stroke="#222" stroke-width="1"/><path d="M3 10.500L6.500 3" stroke="#e83a2a" stroke-width="0.900"/><path d="M6.500 7.500l2 2.500 3.500-5.500" fill="none" stroke="#1f9a1f" stroke-width="1.300"/><path d="M7 10.500l1.500 2 3-4.500" fill="none" stroke="#1f9a1f" stroke-width="1.100"/></svg>
<svg class="a" style="left:503px;top:262px;width:15px;height:14px" viewBox="0 0 15 14"><rect x="0.600" y="0.600" width="12.800" height="12.800" rx="2.500" fill="#f4f08a" stroke="#2a7a2a" stroke-width="1.200"/><path d="M3 2.500v8.500h3" fill="none" stroke="#222" stroke-width="1"/><path d="M3 10.500L6.500 3" stroke="#e83a2a" stroke-width="0.900"/><path d="M6.500 7.500l2 2.500 3.500-5.500" fill="none" stroke="#1a4ad8" stroke-width="1.300"/><path d="M7 10.500l1.500 2 3-4.500" fill="none" stroke="#1a4ad8" stroke-width="1.100"/></svg>
<svg class="a" style="left:5px;top:281px;width:14px;height:14px" viewBox="0 0 14 14"><path d="M1.500 1L12.500 12.500H1.500z" fill="#ffffff" stroke="#2a8ae0" stroke-width="1.500" stroke-linejoin="round"/><path d="M4 7l3 3.500H4z" fill="none" stroke="#2a8ae0" stroke-width="1"/></svg>
<div class="t" style="left:22px;top:280.50px;height:15px;line-height:15px;font-size:11px;color:#000;letter-spacing:-0.559px;">Data</div>
<div class="a" style="left:12px;top:307px;width:1px;height:16px;border-left:1px dotted #9a9a9a;"></div>
<div class="a" style="left:17px;top:302px;width:4px;height:1px;border-top:1px dotted #9a9a9a;"></div>
<div class="a" style="left:17px;top:330px;width:4px;height:1px;border-top:1px dotted #9a9a9a;"></div>
<div class="a" style="left:28px;top:310px;width:1px;height:7px;border-left:1px dotted #9a9a9a;"></div>
<div class="a" style="left:28px;top:316px;width:8px;height:1px;border-top:1px dotted #9a9a9a;"></div>
<div class="a" style="left:28px;top:338px;width:1px;height:7px;border-left:1px dotted #9a9a9a;"></div>
<div class="a" style="left:28px;top:344px;width:8px;height:1px;border-top:1px dotted #9a9a9a;"></div>
<svg class="a" style="left:8px;top:298px;width:9px;height:9px" viewBox="0 0 9 9"><rect x="0.500" y="0.500" width="8" height="8" rx="1" fill="#fff" stroke="#9a9a9a" stroke-width="1"/><path d="M2 4.500h5" stroke="#3a5a9a" stroke-width="1"/></svg>
<svg class="a" style="left:8px;top:326px;width:9px;height:9px" viewBox="0 0 9 9"><rect x="0.500" y="0.500" width="8" height="8" rx="1" fill="#fff" stroke="#9a9a9a" stroke-width="1"/><path d="M2 4.500h5" stroke="#3a5a9a" stroke-width="1"/></svg>
<svg class="a" style="left:21px;top:295.5px;width:13px;height:13px" viewBox="0 0 14 14"><rect x="0.600" y="0.600" width="12.800" height="12.800" rx="2.500" fill="#f4f08a" stroke="#2a7a2a" stroke-width="1.200"/><path d="M3.500 2.500v8.500h7.500" fill="none" stroke="#222" stroke-width="1"/><path d="M3.500 10.500L10 2.500" stroke="#e83a2a" stroke-width="0.900"/><path d="M3.500 10.500L10.500 5" stroke="#2aa02a" stroke-width="0.900"/><path d="M3.500 10.500L10.500 8" stroke="#2a5ae8" stroke-width="0.900"/></svg>
<svg class="a" style="left:21px;top:323.5px;width:13px;height:13px" viewBox="0 0 14 14"><rect x="0.600" y="0.600" width="12.800" height="12.800" rx="2.500" fill="#f4f08a" stroke="#2a7a2a" stroke-width="1.200"/><path d="M3.500 2.500v8.500h7.500" fill="none" stroke="#222" stroke-width="1"/><path d="M3.500 10.500L10 2.500" stroke="#e83a2a" stroke-width="0.900"/><path d="M3.500 10.500L10.500 5" stroke="#2aa02a" stroke-width="0.900"/><path d="M3.500 10.500L10.500 8" stroke="#2a5ae8" stroke-width="0.900"/></svg>
<svg class="a" style="left:36.5px;top:309.5px;width:13px;height:13px" viewBox="0 0 14 14"><rect x="0.600" y="0.600" width="12.800" height="12.800" rx="2.500" fill="#f4f08a" stroke="#2a7a2a" stroke-width="1.200"/><path d="M3.500 2.500v8.500h7.500" fill="none" stroke="#222" stroke-width="1"/><path d="M3.500 10.500C4 6 6 4.500 10.500 4" fill="none" stroke="#2a5ae8" stroke-width="0.900"/></svg>
<svg class="a" style="left:36.5px;top:337.5px;width:13px;height:13px" viewBox="0 0 14 14"><rect x="0.600" y="0.600" width="12.800" height="12.800" rx="2.500" fill="#f4f08a" stroke="#2a7a2a" stroke-width="1.200"/><path d="M3.500 2.500v8.500h7.500" fill="none" stroke="#222" stroke-width="1"/><path d="M3.500 10.500C4 6 6 4.500 10.500 4" fill="none" stroke="#2a5ae8" stroke-width="0.900"/></svg>
<div class="t" style="left:38px;top:294.50px;height:15px;line-height:15px;font-size:11px;color:#000;letter-spacing:0.014px;">idsat|n_scatter_idsat|p</div>
<div class="a" style="left:52px;top:308px;width:114px;height:14px;background:#0078d7;"></div>
<div class="t" style="left:53px;top:308.50px;height:15px;line-height:15px;font-size:11px;color:#fff;letter-spacing:0.029px;">vbs=0,vdd=2,vlin=0.05</div>
<div class="t" style="left:38px;top:322.50px;height:15px;line-height:15px;font-size:11px;color:#000;letter-spacing:0.018px;">vthlin|n_scatter_vthlin|p</div>
<div class="t" style="left:53px;top:336.50px;height:15px;line-height:15px;font-size:11px;color:#000;letter-spacing:0.029px;">vbs=0,vdd=2,vlin=0.05</div>
<div class="a" style="left:3px;top:610px;width:88px;height:18px;background:#f0f0f0;border:1px solid #d9d9d9;box-sizing:border-box;"></div>
<div class="a" style="left:91px;top:608px;width:56px;height:22px;background:#ffffff;border:1px solid #e6e6e6;border-bottom:none;box-sizing:border-box;"></div>
<div class="t" style="left:8px;top:611.50px;height:15px;line-height:15px;font-size:11px;color:#000;letter-spacing:-0.297px;">Device Navigator</div>
<div class="t" style="left:96px;top:613.00px;height:15px;line-height:15px;font-size:11px;color:#000;letter-spacing:-0.098px;">Statistical</div>
<div class="a" style="left:520px;top:79px;width:5px;height:552px;background:linear-gradient(90deg,#e9e9e9,#ececec 40%,#ffffff 75%);"></div>
<div class="a" style="left:525px;top:79px;width:1px;height:552px;background:#808080;"></div>
<div class="a" style="left:526px;top:79px;width:1px;height:552px;background:#ffffff;"></div>
<div class="a" style="left:527px;top:79px;width:1050px;height:512px;background:#f0f0f0;"></div>
<div class="a" style="left:527px;top:79px;width:1.9px;height:512px;background:#6e6e6e;"></div>
<div class="a" style="left:527px;top:79.7px;width:1050px;height:1.3px;background:#484848;"></div>
<div class="a" style="left:527px;top:589.2px;width:1069px;height:3px;background:#ffffff;"></div>
<div class="a" style="left:577px;top:592.2px;width:1019px;height:1px;background:#e6e6e6;"></div>
<div class="a" style="left:528.0px;top:80.5px;width:3px;height:3px;background:#000;"></div><div class="a" style="left:1048px;top:80.5px;width:3px;height:3px;background:#000;"></div><div class="a" style="left:528.8px;top:81px;width:521.2px;height:507px;background:#b7cfe9;border-top-left-radius:4px;border-top-right-radius:4px;"></div><div class="a" style="left:528.8px;top:81px;width:521.2px;height:28px;background:linear-gradient(#98b1d1,#a8c1df 55%,#b9d1ea);border-top-left-radius:4px;border-top-right-radius:4px;"></div>
<div class="a" style="left:534.5px;top:109px;width:509.5px;height:477px;background:#ffffff;"></div>
<div class="a" style="left:528.8px;top:586.6px;width:521.2px;height:1.4px;background:#2aa6c8;"></div>
<div class="a" style="left:528px;top:588px;width:523.5px;height:1.2px;background:#141c1c;"></div>
<div class="a" style="left:1050px;top:81px;width:1.5px;height:507px;background:#000;"></div>
<svg class="a" style="left:532px;top:86px;width:15px;height:16px" viewBox="0 0 14 15"><rect width="14" height="12" fill="#1d6a3a"/><rect x="6" y="0" width="8" height="3" fill="#7a1628"/><rect x="6" y="3" width="8" height="1" fill="#b04a2a"/><rect x="6" y="4" width="8" height="3" fill="#1f8a3c"/><rect x="6" y="7" width="8" height="2.5" fill="#1b4f8a"/><rect x="6" y="9.5" width="8" height="2.5" fill="#146a34"/><rect x="0" y="0" width="7" height="11" fill="#b89a22"/><path d="M0 10 L7 3 M1 11 L8 5 M2 7 L6 2" stroke="#58b83a" stroke-width="1.2" fill="none"/><path d="M1 9 L6 6" stroke="#e08a20" stroke-width="1" fill="none"/><path d="M2 10.5 L7 8" stroke="#5080d0" stroke-width="1" fill="none"/><rect x="0" y="12" width="14" height="3" fill="#e8112d"/></svg>
<div class="a" style="left:980.5px;top:85px;width:32px;height:22px;background:linear-gradient(#b9cfe8,#a3bddd 50%,#9ab5d6 51%,#a9c3e1);border:1px solid #d0e0f2;border-radius:3px;box-sizing:border-box;"></div><div class="a" style="left:1014.5px;top:85px;width:32px;height:22px;background:linear-gradient(#b9cfe8,#a3bddd 50%,#9ab5d6 51%,#a9c3e1);border:1px solid #d0e0f2;border-radius:3px;box-sizing:border-box;"></div><svg class="a" style="left:988.5px;top:94px;width:16px;height:8px" viewBox="0 0 16 8"><rect x="1" y="1" width="13" height="4" rx="1.500" fill="#fff" stroke="#7a8aa0" stroke-width="0.800"/></svg><svg class="a" style="left:1023.5px;top:88px;width:16px;height:16px" viewBox="0 0 16 16"><rect x="1" y="1" width="13" height="12.500" rx="1" fill="#fff" stroke="#7a8aa0" stroke-width="0.800"/><rect x="4.500" y="4.500" width="6" height="5.500" fill="#b4c8e0" stroke="#6a7a94" stroke-width="0.800"/></svg>
<div class="a" style="left:1051.2px;top:80.5px;width:3px;height:3px;background:#000;"></div><div class="a" style="left:1572px;top:80.5px;width:3px;height:3px;background:#000;"></div><div class="a" style="left:1052px;top:81px;width:522px;height:507px;background:#d8e5f2;border-top-left-radius:4px;border-top-right-radius:4px;"></div><div class="a" style="left:1052px;top:81px;width:522px;height:28px;background:linear-gradient(#bccbdd,#c8d7e8 50%,#d8e5f2);border-top-left-radius:4px;border-top-right-radius:4px;"></div>
<div class="a" style="left:1058px;top:109px;width:510px;height:477px;background:#ffffff;"></div>
<div class="a" style="left:1052px;top:586.3px;width:522px;height:1.2px;background:#d4e2f2;"></div>
<div class="a" style="left:1052px;top:587.5px;width:523.5px;height:1.3px;background:#5a5a5a;"></div>
<div class="a" style="left:1574px;top:81px;width:1.5px;height:508px;background:#000;"></div>
<svg class="a" style="left:1056px;top:86px;width:15px;height:16px" viewBox="0 0 14 15"><rect width="14" height="12" fill="#1d6a3a"/><rect x="6" y="0" width="8" height="3" fill="#7a1628"/><rect x="6" y="3" width="8" height="1" fill="#b04a2a"/><rect x="6" y="4" width="8" height="3" fill="#1f8a3c"/><rect x="6" y="7" width="8" height="2.5" fill="#1b4f8a"/><rect x="6" y="9.5" width="8" height="2.5" fill="#146a34"/><rect x="0" y="0" width="7" height="11" fill="#b89a22"/><path d="M0 10 L7 3 M1 11 L8 5 M2 7 L6 2" stroke="#58b83a" stroke-width="1.2" fill="none"/><path d="M1 9 L6 6" stroke="#e08a20" stroke-width="1" fill="none"/><path d="M2 10.5 L7 8" stroke="#5080d0" stroke-width="1" fill="none"/><rect x="0" y="12" width="14" height="3" fill="#e8112d"/></svg>
<div class="a" style="left:1503.5px;top:85px;width:32px;height:22px;background:linear-gradient(#d3e0ef,#c6d6e9 50%,#bfd0e5 51%,#cad9eb);border:1px solid #a9bfda;border-radius:3px;box-sizing:border-box;"></div><div class="a" style="left:1537.5px;top:85px;width:32px;height:22px;background:linear-gradient(#d3e0ef,#c6d6e9 50%,#bfd0e5 51%,#cad9eb);border:1px solid #a9bfda;border-radius:3px;box-sizing:border-box;"></div><svg class="a" style="left:1511.5px;top:94px;width:16px;height:8px" viewBox="0 0 16 8"><rect x="1" y="1" width="13" height="4" rx="1.500" fill="#fff" stroke="#7a8aa0" stroke-width="0.800"/></svg><svg class="a" style="left:1546.5px;top:88px;width:16px;height:16px" viewBox="0 0 16 16"><rect x="1" y="1" width="13" height="12.500" rx="1" fill="#fff" stroke="#7a8aa0" stroke-width="0.800"/><rect x="4.500" y="4.500" width="6" height="5.500" fill="#b4c8e0" stroke="#6a7a94" stroke-width="0.800"/></svg>
<svg class="a" style="left:0;top:0;width:1600px;height:600px;font-family:'Liberation Sans',sans-serif" viewBox="0 0 1600 600"><rect x="577.5" y="125.5" width="404.0" height="431.0" fill="#fff" stroke="#969696" stroke-width="1"/><path d="M588.5 136.5V545.5" stroke="#bcbcbc" stroke-width="1" stroke-dasharray="1.600 2.100" fill="none"/><path d="M683.5 136.5V545.5" stroke="#bcbcbc" stroke-width="1" stroke-dasharray="1.600 2.100" fill="none"/><path d="M778.5 136.5V545.5" stroke="#bcbcbc" stroke-width="1" stroke-dasharray="1.600 2.100" fill="none"/><path d="M874.5 136.5V545.5" stroke="#bcbcbc" stroke-width="1" stroke-dasharray="1.600 2.100" fill="none"/><path d="M970.5 136.5V545.5" stroke="#bcbcbc" stroke-width="1" stroke-dasharray="1.600 2.100" fill="none"/><path d="M588.5 136.5H970.5" stroke="#bcbcbc" stroke-width="1" stroke-dasharray="1.600 2.100" fill="none"/><path d="M588.5 238.5H970.5" stroke="#bcbcbc" stroke-width="1" stroke-dasharray="1.600 2.100" fill="none"/><path d="M588.5 340.5H970.5" stroke="#bcbcbc" stroke-width="1" stroke-dasharray="1.600 2.100" fill="none"/><path d="M588.5 442.5H970.5" stroke="#bcbcbc" stroke-width="1" stroke-dasharray="1.600 2.100" fill="none"/><path d="M588.5 545.5H970.5" stroke="#bcbcbc" stroke-width="1" stroke-dasharray="1.600 2.100" fill="none"/><polygon points="626,196 863,264 931,505 695,435" fill="#ff3030" fill-opacity="0.110" stroke="none"/><polygon points="627,198 861,263 932,505 700,443" fill="#3a30ff" fill-opacity="0.100" stroke="none"/><clipPath id="clip11"><polygon points="626,196 863,264 931,505 695,435"/></clipPath><polygon points="627,198 861,263 932,505 700,443" fill="#c474cc" fill-opacity="0.200" clip-path="url(#clip11)"/><path d="M970.5 454.7L969.8 468.7L967.6 481.7L964.0 493.7L959.0 504.7L952.6 514.4L944.9 522.9L936.0 530.1L925.8 536.0L914.6 540.4L902.3 543.3L889.1 544.8L875.0 544.8L860.2 543.3L844.8 540.4L828.9 536.0L812.7 530.2L796.1 523.0L779.5 514.5L762.9 504.7L746.3 493.8L730.1 481.8L714.2 468.8L698.8 454.8L684.0 440.1L669.9 424.7L656.7 408.7L644.4 392.3L633.2 375.5L623.0 358.6L614.1 341.6L606.4 324.6L600.0 307.9L595.0 291.4L591.4 275.4L589.2 260.0L588.5 245.3L589.2 231.3L591.4 218.3L595.0 206.3L600.0 195.3L606.4 185.6L614.1 177.1L623.0 169.9L633.2 164.0L644.4 159.6L656.7 156.7L669.9 155.2L684.0 155.2L698.8 156.7L714.2 159.6L730.1 164.0L746.3 169.8L762.9 177.0L779.5 185.5L796.1 195.3L812.7 206.2L828.9 218.2L844.8 231.2L860.2 245.2L875.0 259.9L889.1 275.3L902.3 291.3L914.6 307.7L925.8 324.5L936.0 341.4L944.9 358.4L952.6 375.4L959.0 392.1L964.0 408.6L967.6 424.6L969.8 440.0Z" fill="none" stroke="#d81ac8" stroke-width="1.100"/><path d="M936.4 436.0L935.8 447.5L934.0 458.2L931.0 468.1L926.9 477.0L921.7 485.1L915.4 492.1L908.0 498.0L899.7 502.7L890.4 506.4L880.3 508.8L869.5 510.0L857.9 510.0L845.8 508.8L833.2 506.4L820.1 502.8L806.7 498.0L793.2 492.1L779.5 485.1L765.8 477.1L752.3 468.1L738.9 458.3L725.8 447.6L713.2 436.1L701.1 424.0L689.5 411.4L678.7 398.2L668.6 384.7L659.3 371.0L651.0 357.0L643.6 343.1L637.3 329.1L632.1 315.4L628.0 301.9L625.0 288.8L623.2 276.1L622.6 264.0L623.2 252.5L625.0 241.8L628.0 231.9L632.1 223.0L637.3 214.9L643.6 207.9L651.0 202.0L659.3 197.3L668.6 193.6L678.7 191.2L689.5 190.0L701.1 190.0L713.2 191.2L725.8 193.6L738.9 197.2L752.3 202.0L765.8 207.9L779.5 214.9L793.2 222.9L806.7 231.9L820.1 241.7L833.2 252.4L845.8 263.9L857.9 276.0L869.5 288.6L880.3 301.8L890.4 315.3L899.7 329.0L908.0 343.0L915.4 356.9L921.7 370.9L926.9 384.6L931.0 398.1L934.0 411.2L935.8 423.9Z" fill="none" stroke="#d81ac8" stroke-width="1.100"/><path d="M902.3 417.3L901.8 426.3L900.4 434.7L898.1 442.4L894.9 449.4L890.8 455.7L885.8 461.2L880.1 465.8L873.6 469.5L866.3 472.4L858.4 474.3L849.9 475.2L840.9 475.2L831.4 474.3L821.5 472.4L811.3 469.6L800.8 465.8L790.2 461.2L779.5 455.7L768.8 449.5L758.2 442.5L747.7 434.7L737.5 426.3L727.6 417.4L718.1 407.9L709.1 398.0L700.6 387.7L692.7 377.2L685.4 366.4L678.9 355.5L673.2 344.6L668.2 333.7L664.1 322.9L660.9 312.3L658.6 302.1L657.2 292.2L656.7 282.7L657.2 273.7L658.6 265.3L660.9 257.6L664.1 250.6L668.2 244.3L673.2 238.8L678.9 234.2L685.4 230.5L692.7 227.6L700.6 225.7L709.1 224.8L718.1 224.8L727.6 225.7L737.5 227.6L747.7 230.4L758.2 234.2L768.8 238.8L779.5 244.3L790.2 250.5L800.8 257.5L811.3 265.3L821.5 273.7L831.4 282.6L840.9 292.1L849.9 302.0L858.4 312.3L866.3 322.8L873.6 333.6L880.1 344.5L885.8 355.4L890.8 366.3L894.9 377.1L898.1 387.7L900.4 397.9L901.8 407.8Z" fill="none" stroke="#d81ac8" stroke-width="1.100"/><path d="M868.2 398.6L867.8 405.1L866.8 411.1L865.2 416.7L862.8 421.8L859.9 426.3L856.3 430.3L852.1 433.6L847.4 436.3L842.2 438.4L836.5 439.8L830.4 440.4L823.8 440.5L817.0 439.8L809.8 438.4L802.5 436.4L794.9 433.7L787.2 430.3L779.5 426.4L771.8 421.8L764.1 416.8L756.5 411.2L749.2 405.1L742.0 398.7L735.2 391.8L728.6 384.7L722.5 377.3L716.8 369.6L711.6 361.8L706.9 354.0L702.7 346.1L699.1 338.2L696.2 330.4L693.8 322.8L692.2 315.4L691.2 308.2L690.8 301.4L691.2 294.9L692.2 288.9L693.8 283.3L696.2 278.2L699.1 273.7L702.7 269.7L706.9 266.4L711.6 263.7L716.8 261.6L722.5 260.2L728.6 259.6L735.2 259.5L742.0 260.2L749.2 261.6L756.5 263.6L764.1 266.3L771.8 269.7L779.5 273.6L787.2 278.2L794.9 283.2L802.5 288.8L809.8 294.9L817.0 301.3L823.8 308.2L830.4 315.3L836.5 322.7L842.2 330.4L847.4 338.2L852.1 346.0L856.3 353.9L859.9 361.8L862.8 369.6L865.2 377.2L866.8 384.6L867.8 391.8Z" fill="none" stroke="#d81ac8" stroke-width="1.100"/><path d="M834.1 379.9L833.9 383.9L833.2 387.6L832.2 391.1L830.8 394.2L829.0 397.0L826.8 399.4L824.2 401.5L821.3 403.1L818.1 404.4L814.6 405.2L810.8 405.7L806.8 405.7L802.6 405.2L798.2 404.4L793.6 403.1L789.0 401.5L784.3 399.4L779.5 397.0L774.7 394.2L770.0 391.1L765.4 387.7L760.8 383.9L756.4 380.0L752.2 375.7L748.2 371.3L744.4 366.8L740.9 362.1L737.7 357.3L734.8 352.4L732.2 347.6L730.0 342.7L728.2 338.0L726.8 333.3L725.8 328.7L725.1 324.3L724.9 320.1L725.1 316.1L725.8 312.4L726.8 308.9L728.2 305.8L730.0 303.0L732.2 300.6L734.8 298.5L737.7 296.9L740.9 295.6L744.4 294.8L748.2 294.3L752.2 294.3L756.4 294.8L760.8 295.6L765.4 296.9L770.0 298.5L774.7 300.6L779.5 303.0L784.3 305.8L789.0 308.9L793.6 312.3L798.2 316.1L802.6 320.0L806.8 324.3L810.8 328.7L814.6 333.2L818.1 337.9L821.3 342.7L824.2 347.6L826.8 352.4L829.0 357.3L830.8 362.0L832.2 366.7L833.2 371.3L833.9 375.7Z" fill="none" stroke="#d81ac8" stroke-width="1.100"/><path d="M736.3 336.3h3.6v3.6h-3.6zM811.3 352.3h3.6v3.6h-3.6zM732.3 321.3h3.6v3.6h-3.6zM794.3 389.3h3.6v3.6h-3.6zM736.3 287.3h3.6v3.6h-3.6zM802.3 375.3h3.6v3.6h-3.6zM830.3 405.3h3.6v3.6h-3.6zM774.3 338.3h3.6v3.6h-3.6zM865.3 387.3h3.6v3.6h-3.6zM751.3 300.3h3.6v3.6h-3.6zM781.3 354.3h3.6v3.6h-3.6zM766.3 340.3h3.6v3.6h-3.6zM787.3 373.3h3.6v3.6h-3.6zM815.3 375.3h3.6v3.6h-3.6zM717.3 335.3h3.6v3.6h-3.6zM729.3 317.3h3.6v3.6h-3.6zM727.3 321.3h3.6v3.6h-3.6zM751.3 340.3h3.6v3.6h-3.6zM890.3 408.3h3.6v3.6h-3.6zM806.3 325.3h3.6v3.6h-3.6zM768.3 362.3h3.6v3.6h-3.6zM774.3 357.3h3.6v3.6h-3.6zM781.3 320.3h3.6v3.6h-3.6zM797.3 335.3h3.6v3.6h-3.6zM841.3 368.3h3.6v3.6h-3.6zM801.3 361.3h3.6v3.6h-3.6zM810.3 348.3h3.6v3.6h-3.6zM811.3 363.3h3.6v3.6h-3.6zM820.3 390.3h3.6v3.6h-3.6zM782.3 328.3h3.6v3.6h-3.6zM804.3 376.3h3.6v3.6h-3.6zM833.3 368.3h3.6v3.6h-3.6zM796.3 373.3h3.6v3.6h-3.6zM787.3 359.3h3.6v3.6h-3.6zM784.3 334.3h3.6v3.6h-3.6zM743.3 317.3h3.6v3.6h-3.6zM798.3 403.3h3.6v3.6h-3.6zM811.3 397.3h3.6v3.6h-3.6zM804.3 383.3h3.6v3.6h-3.6zM784.3 374.3h3.6v3.6h-3.6zM838.3 371.3h3.6v3.6h-3.6zM754.3 392.3h3.6v3.6h-3.6zM786.3 381.3h3.6v3.6h-3.6zM807.3 331.3h3.6v3.6h-3.6zM860.3 445.3h3.6v3.6h-3.6zM784.3 373.3h3.6v3.6h-3.6zM782.3 324.3h3.6v3.6h-3.6zM774.3 357.3h3.6v3.6h-3.6zM815.3 390.3h3.6v3.6h-3.6zM780.3 389.3h3.6v3.6h-3.6zM752.3 357.3h3.6v3.6h-3.6zM815.3 360.3h3.6v3.6h-3.6zM717.3 288.3h3.6v3.6h-3.6zM786.3 368.3h3.6v3.6h-3.6zM830.3 347.3h3.6v3.6h-3.6zM778.3 367.3h3.6v3.6h-3.6zM772.3 276.3h3.6v3.6h-3.6zM805.3 431.3h3.6v3.6h-3.6zM812.3 340.3h3.6v3.6h-3.6zM763.3 347.3h3.6v3.6h-3.6zM862.3 412.3h3.6v3.6h-3.6zM781.3 396.3h3.6v3.6h-3.6zM775.3 401.3h3.6v3.6h-3.6zM754.3 321.3h3.6v3.6h-3.6zM802.3 403.3h3.6v3.6h-3.6zM800.3 369.3h3.6v3.6h-3.6zM716.3 293.3h3.6v3.6h-3.6zM757.3 321.3h3.6v3.6h-3.6zM797.3 349.3h3.6v3.6h-3.6zM804.3 365.3h3.6v3.6h-3.6zM766.3 345.3h3.6v3.6h-3.6zM792.3 381.3h3.6v3.6h-3.6zM761.3 332.3h3.6v3.6h-3.6zM731.3 370.3h3.6v3.6h-3.6zM827.3 370.3h3.6v3.6h-3.6zM761.3 303.3h3.6v3.6h-3.6zM783.3 357.3h3.6v3.6h-3.6zM852.3 396.3h3.6v3.6h-3.6zM751.3 262.3h3.6v3.6h-3.6zM825.3 380.3h3.6v3.6h-3.6zM723.3 323.3h3.6v3.6h-3.6zM723.3 420.3h3.6v3.6h-3.6zM816.3 386.3h3.6v3.6h-3.6zM772.3 282.3h3.6v3.6h-3.6zM773.3 300.3h3.6v3.6h-3.6zM798.3 297.3h3.6v3.6h-3.6zM747.3 367.3h3.6v3.6h-3.6zM833.3 344.3h3.6v3.6h-3.6zM725.3 345.3h3.6v3.6h-3.6zM807.3 335.3h3.6v3.6h-3.6zM754.3 315.3h3.6v3.6h-3.6zM737.3 306.3h3.6v3.6h-3.6zM820.3 391.3h3.6v3.6h-3.6zM847.3 384.3h3.6v3.6h-3.6zM773.3 317.3h3.6v3.6h-3.6zM773.3 307.3h3.6v3.6h-3.6zM717.3 335.3h3.6v3.6h-3.6zM826.3 399.3h3.6v3.6h-3.6zM823.3 380.3h3.6v3.6h-3.6zM753.3 337.3h3.6v3.6h-3.6zM765.3 308.3h3.6v3.6h-3.6zM720.3 273.3h3.6v3.6h-3.6zM777.3 352.3h3.6v3.6h-3.6zM761.3 381.3h3.6v3.6h-3.6zM784.3 368.3h3.6v3.6h-3.6zM819.3 347.3h3.6v3.6h-3.6zM711.3 333.3h3.6v3.6h-3.6zM754.3 374.3h3.6v3.6h-3.6zM789.3 384.3h3.6v3.6h-3.6zM803.3 301.3h3.6v3.6h-3.6zM802.3 342.3h3.6v3.6h-3.6zM752.3 321.3h3.6v3.6h-3.6zM804.3 388.3h3.6v3.6h-3.6zM812.3 318.3h3.6v3.6h-3.6zM757.3 267.3h3.6v3.6h-3.6zM774.3 364.3h3.6v3.6h-3.6zM752.3 341.3h3.6v3.6h-3.6zM785.3 382.3h3.6v3.6h-3.6zM750.3 308.3h3.6v3.6h-3.6zM752.3 385.3h3.6v3.6h-3.6zM815.3 365.3h3.6v3.6h-3.6zM785.3 356.3h3.6v3.6h-3.6zM784.3 346.3h3.6v3.6h-3.6zM766.3 305.3h3.6v3.6h-3.6zM756.3 384.3h3.6v3.6h-3.6zM796.3 360.3h3.6v3.6h-3.6zM770.3 346.3h3.6v3.6h-3.6zM790.3 336.3h3.6v3.6h-3.6zM784.3 359.3h3.6v3.6h-3.6zM752.3 311.3h3.6v3.6h-3.6zM744.3 298.3h3.6v3.6h-3.6zM808.3 295.3h3.6v3.6h-3.6zM768.3 325.3h3.6v3.6h-3.6zM756.3 339.3h3.6v3.6h-3.6zM816.3 371.3h3.6v3.6h-3.6zM773.3 327.3h3.6v3.6h-3.6zM773.3 372.3h3.6v3.6h-3.6zM764.3 307.3h3.6v3.6h-3.6zM735.3 292.3h3.6v3.6h-3.6zM730.3 354.3h3.6v3.6h-3.6zM790.3 348.3h3.6v3.6h-3.6zM827.3 356.3h3.6v3.6h-3.6zM803.3 385.3h3.6v3.6h-3.6zM725.3 274.3h3.6v3.6h-3.6zM746.3 357.3h3.6v3.6h-3.6zM822.3 336.3h3.6v3.6h-3.6zM813.3 356.3h3.6v3.6h-3.6zM764.3 325.3h3.6v3.6h-3.6zM766.3 289.3h3.6v3.6h-3.6zM743.3 293.3h3.6v3.6h-3.6zM794.3 418.3h3.6v3.6h-3.6zM870.3 389.3h3.6v3.6h-3.6zM719.3 304.3h3.6v3.6h-3.6zM746.3 389.3h3.6v3.6h-3.6zM797.3 337.3h3.6v3.6h-3.6zM809.3 381.3h3.6v3.6h-3.6zM722.3 302.3h3.6v3.6h-3.6zM769.3 344.3h3.6v3.6h-3.6zM782.3 341.3h3.6v3.6h-3.6zM784.3 334.3h3.6v3.6h-3.6zM747.3 376.3h3.6v3.6h-3.6zM790.3 368.3h3.6v3.6h-3.6zM723.3 313.3h3.6v3.6h-3.6zM805.3 325.3h3.6v3.6h-3.6zM815.3 357.3h3.6v3.6h-3.6zM791.3 352.3h3.6v3.6h-3.6zM785.3 387.3h3.6v3.6h-3.6zM764.3 386.3h3.6v3.6h-3.6zM751.3 306.3h3.6v3.6h-3.6zM802.3 330.3h3.6v3.6h-3.6zM765.3 368.3h3.6v3.6h-3.6zM819.3 319.3h3.6v3.6h-3.6zM795.3 413.3h3.6v3.6h-3.6zM818.3 363.3h3.6v3.6h-3.6zM757.3 328.3h3.6v3.6h-3.6zM738.3 319.3h3.6v3.6h-3.6zM771.3 340.3h3.6v3.6h-3.6zM818.3 363.3h3.6v3.6h-3.6zM728.3 352.3h3.6v3.6h-3.6zM741.3 315.3h3.6v3.6h-3.6zM773.3 335.3h3.6v3.6h-3.6zM743.3 322.3h3.6v3.6h-3.6zM852.3 371.3h3.6v3.6h-3.6zM773.3 378.3h3.6v3.6h-3.6zM803.3 384.3h3.6v3.6h-3.6zM807.3 306.3h3.6v3.6h-3.6zM748.3 336.3h3.6v3.6h-3.6zM794.3 395.3h3.6v3.6h-3.6zM793.3 350.3h3.6v3.6h-3.6zM779.3 343.3h3.6v3.6h-3.6zM786.3 372.3h3.6v3.6h-3.6zM766.3 318.3h3.6v3.6h-3.6zM748.3 364.3h3.6v3.6h-3.6zM821.3 401.3h3.6v3.6h-3.6zM807.3 388.3h3.6v3.6h-3.6zM777.3 367.3h3.6v3.6h-3.6zM742.3 322.3h3.6v3.6h-3.6zM753.3 356.3h3.6v3.6h-3.6zM758.3 334.3h3.6v3.6h-3.6zM791.3 395.3h3.6v3.6h-3.6zM751.3 306.3h3.6v3.6h-3.6zM805.3 331.3h3.6v3.6h-3.6zM793.3 340.3h3.6v3.6h-3.6zM774.3 293.3h3.6v3.6h-3.6zM802.3 347.3h3.6v3.6h-3.6zM747.3 392.3h3.6v3.6h-3.6zM802.3 464.3h3.6v3.6h-3.6zM791.3 345.3h3.6v3.6h-3.6zM781.3 397.3h3.6v3.6h-3.6zM777.3 361.3h3.6v3.6h-3.6zM795.3 331.3h3.6v3.6h-3.6zM782.3 336.3h3.6v3.6h-3.6zM735.3 350.3h3.6v3.6h-3.6zM800.3 363.3h3.6v3.6h-3.6zM747.3 272.3h3.6v3.6h-3.6zM794.3 354.3h3.6v3.6h-3.6zM720.3 315.3h3.6v3.6h-3.6zM726.3 319.3h3.6v3.6h-3.6zM782.3 361.3h3.6v3.6h-3.6zM785.3 357.3h3.6v3.6h-3.6zM739.3 316.3h3.6v3.6h-3.6zM760.3 332.3h3.6v3.6h-3.6zM787.3 371.3h3.6v3.6h-3.6zM833.3 303.3h3.6v3.6h-3.6zM791.3 350.3h3.6v3.6h-3.6zM855.3 418.3h3.6v3.6h-3.6zM721.3 329.3h3.6v3.6h-3.6zM760.3 367.3h3.6v3.6h-3.6zM742.3 325.3h3.6v3.6h-3.6zM773.3 343.3h3.6v3.6h-3.6zM758.3 283.3h3.6v3.6h-3.6zM793.3 386.3h3.6v3.6h-3.6zM775.3 317.3h3.6v3.6h-3.6zM784.3 368.3h3.6v3.6h-3.6zM772.3 344.3h3.6v3.6h-3.6zM825.3 342.3h3.6v3.6h-3.6zM759.3 282.3h3.6v3.6h-3.6zM754.3 313.3h3.6v3.6h-3.6zM745.3 310.3h3.6v3.6h-3.6zM839.3 376.3h3.6v3.6h-3.6zM774.3 410.3h3.6v3.6h-3.6zM775.3 296.3h3.6v3.6h-3.6zM791.3 328.3h3.6v3.6h-3.6zM833.3 342.3h3.6v3.6h-3.6zM758.3 290.3h3.6v3.6h-3.6zM781.3 320.3h3.6v3.6h-3.6zM775.3 336.3h3.6v3.6h-3.6zM757.3 364.3h3.6v3.6h-3.6zM809.3 367.3h3.6v3.6h-3.6zM747.3 300.3h3.6v3.6h-3.6zM787.3 423.3h3.6v3.6h-3.6zM762.3 317.3h3.6v3.6h-3.6zM754.3 303.3h3.6v3.6h-3.6zM744.3 324.3h3.6v3.6h-3.6zM826.3 375.3h3.6v3.6h-3.6zM760.3 291.3h3.6v3.6h-3.6zM785.3 351.3h3.6v3.6h-3.6zM736.3 293.3h3.6v3.6h-3.6zM776.3 377.3h3.6v3.6h-3.6zM799.3 366.3h3.6v3.6h-3.6zM767.3 351.3h3.6v3.6h-3.6zM777.3 411.3h3.6v3.6h-3.6zM739.3 316.3h3.6v3.6h-3.6zM821.3 364.3h3.6v3.6h-3.6zM826.3 373.3h3.6v3.6h-3.6zM782.3 340.3h3.6v3.6h-3.6zM731.3 294.3h3.6v3.6h-3.6zM853.3 408.3h3.6v3.6h-3.6zM798.3 387.3h3.6v3.6h-3.6zM797.3 389.3h3.6v3.6h-3.6zM768.3 337.3h3.6v3.6h-3.6zM811.3 356.3h3.6v3.6h-3.6zM732.3 317.3h3.6v3.6h-3.6zM759.3 356.3h3.6v3.6h-3.6zM753.3 304.3h3.6v3.6h-3.6zM766.3 387.3h3.6v3.6h-3.6zM776.3 352.3h3.6v3.6h-3.6zM778.3 357.3h3.6v3.6h-3.6zM809.3 406.3h3.6v3.6h-3.6zM722.3 357.3h3.6v3.6h-3.6zM777.3 339.3h3.6v3.6h-3.6zM859.3 388.3h3.6v3.6h-3.6zM844.3 413.3h3.6v3.6h-3.6zM742.3 343.3h3.6v3.6h-3.6zM803.3 358.3h3.6v3.6h-3.6zM698.3 295.3h3.6v3.6h-3.6zM771.3 312.3h3.6v3.6h-3.6zM840.3 375.3h3.6v3.6h-3.6zM764.3 332.3h3.6v3.6h-3.6zM751.3 311.3h3.6v3.6h-3.6zM781.3 359.3h3.6v3.6h-3.6zM760.3 336.3h3.6v3.6h-3.6zM730.3 337.3h3.6v3.6h-3.6zM752.3 340.3h3.6v3.6h-3.6zM747.3 316.3h3.6v3.6h-3.6zM785.3 317.3h3.6v3.6h-3.6zM861.3 393.3h3.6v3.6h-3.6zM775.3 325.3h3.6v3.6h-3.6zM832.3 418.3h3.6v3.6h-3.6zM788.3 314.3h3.6v3.6h-3.6zM760.3 357.3h3.6v3.6h-3.6zM760.3 304.3h3.6v3.6h-3.6zM737.3 303.3h3.6v3.6h-3.6zM778.3 329.3h3.6v3.6h-3.6zM778.3 430.3h3.6v3.6h-3.6zM838.3 351.3h3.6v3.6h-3.6zM789.3 357.3h3.6v3.6h-3.6zM773.3 376.3h3.6v3.6h-3.6zM766.3 332.3h3.6v3.6h-3.6zM765.3 338.3h3.6v3.6h-3.6zM821.3 395.3h3.6v3.6h-3.6zM732.3 310.3h3.6v3.6h-3.6zM750.3 357.3h3.6v3.6h-3.6zM785.3 378.3h3.6v3.6h-3.6zM775.3 291.3h3.6v3.6h-3.6zM793.3 363.3h3.6v3.6h-3.6zM795.3 319.3h3.6v3.6h-3.6zM780.3 329.3h3.6v3.6h-3.6zM754.3 346.3h3.6v3.6h-3.6zM789.3 328.3h3.6v3.6h-3.6zM719.3 244.3h3.6v3.6h-3.6zM758.3 370.3h3.6v3.6h-3.6zM776.3 281.3h3.6v3.6h-3.6zM748.3 344.3h3.6v3.6h-3.6zM834.3 413.3h3.6v3.6h-3.6zM790.3 361.3h3.6v3.6h-3.6zM741.3 315.3h3.6v3.6h-3.6zM766.3 319.3h3.6v3.6h-3.6zM780.3 338.3h3.6v3.6h-3.6zM789.3 396.3h3.6v3.6h-3.6zM803.3 374.3h3.6v3.6h-3.6zM769.3 299.3h3.6v3.6h-3.6zM774.3 362.3h3.6v3.6h-3.6zM743.3 366.3h3.6v3.6h-3.6zM766.3 353.3h3.6v3.6h-3.6zM766.3 305.3h3.6v3.6h-3.6zM848.3 353.3h3.6v3.6h-3.6zM809.3 349.3h3.6v3.6h-3.6zM787.3 330.3h3.6v3.6h-3.6zM763.3 367.3h3.6v3.6h-3.6zM844.3 359.3h3.6v3.6h-3.6zM778.3 376.3h3.6v3.6h-3.6zM756.3 357.3h3.6v3.6h-3.6zM751.3 351.3h3.6v3.6h-3.6zM792.3 392.3h3.6v3.6h-3.6zM790.3 320.3h3.6v3.6h-3.6zM800.3 328.3h3.6v3.6h-3.6zM803.3 406.3h3.6v3.6h-3.6zM798.3 343.3h3.6v3.6h-3.6zM818.3 375.3h3.6v3.6h-3.6zM735.3 314.3h3.6v3.6h-3.6zM826.3 366.3h3.6v3.6h-3.6zM782.3 340.3h3.6v3.6h-3.6zM720.3 302.3h3.6v3.6h-3.6zM790.3 361.3h3.6v3.6h-3.6zM772.3 282.3h3.6v3.6h-3.6zM819.3 392.3h3.6v3.6h-3.6zM812.3 405.3h3.6v3.6h-3.6zM762.3 322.3h3.6v3.6h-3.6zM788.3 403.3h3.6v3.6h-3.6zM720.3 310.3h3.6v3.6h-3.6zM753.3 351.3h3.6v3.6h-3.6zM827.3 367.3h3.6v3.6h-3.6zM735.3 326.3h3.6v3.6h-3.6zM768.3 298.3h3.6v3.6h-3.6zM808.3 349.3h3.6v3.6h-3.6zM801.3 322.3h3.6v3.6h-3.6zM815.3 326.3h3.6v3.6h-3.6zM813.3 315.3h3.6v3.6h-3.6zM824.3 363.3h3.6v3.6h-3.6zM725.3 312.3h3.6v3.6h-3.6zM789.3 325.3h3.6v3.6h-3.6zM761.3 347.3h3.6v3.6h-3.6zM772.3 255.3h3.6v3.6h-3.6zM763.3 352.3h3.6v3.6h-3.6zM788.3 383.3h3.6v3.6h-3.6zM754.3 410.3h3.6v3.6h-3.6zM805.3 372.3h3.6v3.6h-3.6zM814.3 396.3h3.6v3.6h-3.6zM781.3 332.3h3.6v3.6h-3.6zM812.3 379.3h3.6v3.6h-3.6zM713.3 280.3h3.6v3.6h-3.6zM793.3 360.3h3.6v3.6h-3.6zM787.3 372.3h3.6v3.6h-3.6zM782.3 397.3h3.6v3.6h-3.6zM757.3 325.3h3.6v3.6h-3.6zM788.3 376.3h3.6v3.6h-3.6zM804.3 406.3h3.6v3.6h-3.6zM761.3 373.3h3.6v3.6h-3.6zM793.3 326.3h3.6v3.6h-3.6zM773.3 406.3h3.6v3.6h-3.6zM804.3 349.3h3.6v3.6h-3.6zM696.3 282.3h3.6v3.6h-3.6zM754.3 337.3h3.6v3.6h-3.6zM856.3 413.3h3.6v3.6h-3.6zM788.3 326.3h3.6v3.6h-3.6zM737.3 320.3h3.6v3.6h-3.6zM762.3 427.3h3.6v3.6h-3.6zM764.3 322.3h3.6v3.6h-3.6zM816.3 371.3h3.6v3.6h-3.6zM736.3 363.3h3.6v3.6h-3.6zM767.3 303.3h3.6v3.6h-3.6zM788.3 368.3h3.6v3.6h-3.6zM766.3 362.3h3.6v3.6h-3.6zM805.3 337.3h3.6v3.6h-3.6zM708.3 240.3h3.6v3.6h-3.6zM773.3 382.3h3.6v3.6h-3.6zM812.3 407.3h3.6v3.6h-3.6zM841.3 383.3h3.6v3.6h-3.6zM813.3 323.3h3.6v3.6h-3.6zM801.3 372.3h3.6v3.6h-3.6zM774.3 333.3h3.6v3.6h-3.6zM740.3 331.3h3.6v3.6h-3.6zM821.3 361.3h3.6v3.6h-3.6zM796.3 338.3h3.6v3.6h-3.6zM786.3 323.3h3.6v3.6h-3.6zM790.3 349.3h3.6v3.6h-3.6zM788.3 336.3h3.6v3.6h-3.6zM738.3 316.3h3.6v3.6h-3.6zM813.3 414.3h3.6v3.6h-3.6zM766.3 365.3h3.6v3.6h-3.6zM803.3 374.3h3.6v3.6h-3.6zM725.3 329.3h3.6v3.6h-3.6zM745.3 364.3h3.6v3.6h-3.6zM804.3 381.3h3.6v3.6h-3.6zM691.3 319.3h3.6v3.6h-3.6zM801.3 324.3h3.6v3.6h-3.6zM810.3 368.3h3.6v3.6h-3.6zM771.3 324.3h3.6v3.6h-3.6zM743.3 316.3h3.6v3.6h-3.6zM882.3 411.3h3.6v3.6h-3.6zM785.3 333.3h3.6v3.6h-3.6zM757.3 320.3h3.6v3.6h-3.6zM747.3 357.3h3.6v3.6h-3.6zM768.3 368.3h3.6v3.6h-3.6zM738.3 354.3h3.6v3.6h-3.6zM777.3 367.3h3.6v3.6h-3.6zM774.3 320.3h3.6v3.6h-3.6zM819.3 358.3h3.6v3.6h-3.6zM772.3 319.3h3.6v3.6h-3.6zM784.3 340.3h3.6v3.6h-3.6zM787.3 363.3h3.6v3.6h-3.6zM754.3 294.3h3.6v3.6h-3.6zM792.3 383.3h3.6v3.6h-3.6zM801.3 327.3h3.6v3.6h-3.6zM798.3 371.3h3.6v3.6h-3.6zM787.3 366.3h3.6v3.6h-3.6zM766.3 348.3h3.6v3.6h-3.6zM809.3 350.3h3.6v3.6h-3.6zM729.3 318.3h3.6v3.6h-3.6zM784.3 298.3h3.6v3.6h-3.6zM754.3 353.3h3.6v3.6h-3.6zM772.3 348.3h3.6v3.6h-3.6zM735.3 351.3h3.6v3.6h-3.6zM837.3 375.3h3.6v3.6h-3.6zM753.3 300.3h3.6v3.6h-3.6zM808.3 368.3h3.6v3.6h-3.6zM750.3 369.3h3.6v3.6h-3.6zM803.3 380.3h3.6v3.6h-3.6zM718.3 312.3h3.6v3.6h-3.6zM799.3 324.3h3.6v3.6h-3.6zM809.3 407.3h3.6v3.6h-3.6zM813.3 346.3h3.6v3.6h-3.6zM753.3 362.3h3.6v3.6h-3.6zM811.3 403.3h3.6v3.6h-3.6zM818.3 367.3h3.6v3.6h-3.6zM764.3 286.3h3.6v3.6h-3.6zM804.3 429.3h3.6v3.6h-3.6zM762.3 325.3h3.6v3.6h-3.6zM800.3 371.3h3.6v3.6h-3.6zM731.3 302.3h3.6v3.6h-3.6zM740.3 387.3h3.6v3.6h-3.6zM753.3 360.3h3.6v3.6h-3.6zM843.3 439.3h3.6v3.6h-3.6zM826.3 422.3h3.6v3.6h-3.6zM736.3 315.3h3.6v3.6h-3.6zM753.3 326.3h3.6v3.6h-3.6zM867.3 348.3h3.6v3.6h-3.6zM796.3 322.3h3.6v3.6h-3.6zM823.3 411.3h3.6v3.6h-3.6zM760.3 399.3h3.6v3.6h-3.6zM780.3 388.3h3.6v3.6h-3.6zM788.3 337.3h3.6v3.6h-3.6zM765.3 337.3h3.6v3.6h-3.6zM798.3 363.3h3.6v3.6h-3.6zM858.3 386.3h3.6v3.6h-3.6zM762.3 318.3h3.6v3.6h-3.6zM751.3 291.3h3.6v3.6h-3.6zM744.3 356.3h3.6v3.6h-3.6zM780.3 344.3h3.6v3.6h-3.6zM789.3 386.3h3.6v3.6h-3.6zM798.3 382.3h3.6v3.6h-3.6zM758.3 330.3h3.6v3.6h-3.6zM751.3 331.3h3.6v3.6h-3.6zM750.3 322.3h3.6v3.6h-3.6zM772.3 338.3h3.6v3.6h-3.6zM768.3 329.3h3.6v3.6h-3.6zM822.3 362.3h3.6v3.6h-3.6zM743.3 335.3h3.6v3.6h-3.6zM740.3 296.3h3.6v3.6h-3.6zM780.3 301.3h3.6v3.6h-3.6zM668.3 296.3h3.6v3.6h-3.6zM813.3 318.3h3.6v3.6h-3.6zM747.3 348.3h3.6v3.6h-3.6zM710.3 285.3h3.6v3.6h-3.6zM737.3 320.3h3.6v3.6h-3.6zM710.3 337.3h3.6v3.6h-3.6zM773.3 354.3h3.6v3.6h-3.6zM766.3 280.3h3.6v3.6h-3.6zM772.3 306.3h3.6v3.6h-3.6zM778.3 323.3h3.6v3.6h-3.6zM767.3 336.3h3.6v3.6h-3.6zM804.3 385.3h3.6v3.6h-3.6zM743.3 329.3h3.6v3.6h-3.6zM827.3 390.3h3.6v3.6h-3.6zM753.3 331.3h3.6v3.6h-3.6zM766.3 369.3h3.6v3.6h-3.6zM779.3 360.3h3.6v3.6h-3.6zM853.3 349.3h3.6v3.6h-3.6zM743.3 278.3h3.6v3.6h-3.6zM723.3 343.3h3.6v3.6h-3.6zM787.3 401.3h3.6v3.6h-3.6zM710.3 285.3h3.6v3.6h-3.6zM827.3 405.3h3.6v3.6h-3.6zM808.3 390.3h3.6v3.6h-3.6zM779.3 348.3h3.6v3.6h-3.6zM779.3 373.3h3.6v3.6h-3.6zM772.3 354.3h3.6v3.6h-3.6zM827.3 342.3h3.6v3.6h-3.6zM752.3 351.3h3.6v3.6h-3.6zM769.3 339.3h3.6v3.6h-3.6zM849.3 399.3h3.6v3.6h-3.6zM763.3 372.3h3.6v3.6h-3.6zM863.3 362.3h3.6v3.6h-3.6zM755.3 339.3h3.6v3.6h-3.6zM756.3 400.3h3.6v3.6h-3.6zM795.3 346.3h3.6v3.6h-3.6zM794.3 334.3h3.6v3.6h-3.6zM757.3 340.3h3.6v3.6h-3.6zM859.3 327.3h3.6v3.6h-3.6zM792.3 395.3h3.6v3.6h-3.6zM803.3 418.3h3.6v3.6h-3.6zM793.3 361.3h3.6v3.6h-3.6zM773.3 320.3h3.6v3.6h-3.6zM833.3 344.3h3.6v3.6h-3.6zM773.3 330.3h3.6v3.6h-3.6zM751.3 268.3h3.6v3.6h-3.6zM765.3 345.3h3.6v3.6h-3.6zM782.3 375.3h3.6v3.6h-3.6zM772.3 326.3h3.6v3.6h-3.6zM788.3 373.3h3.6v3.6h-3.6zM747.3 287.3h3.6v3.6h-3.6zM743.3 360.3h3.6v3.6h-3.6zM811.3 341.3h3.6v3.6h-3.6zM781.3 375.3h3.6v3.6h-3.6zM823.3 353.3h3.6v3.6h-3.6zM769.3 385.3h3.6v3.6h-3.6zM859.3 438.3h3.6v3.6h-3.6zM739.3 340.3h3.6v3.6h-3.6zM767.3 341.3h3.6v3.6h-3.6zM755.3 322.3h3.6v3.6h-3.6zM777.3 401.3h3.6v3.6h-3.6zM801.3 374.3h3.6v3.6h-3.6zM778.3 327.3h3.6v3.6h-3.6zM770.3 380.3h3.6v3.6h-3.6zM806.3 421.3h3.6v3.6h-3.6zM786.3 352.3h3.6v3.6h-3.6zM722.3 329.3h3.6v3.6h-3.6zM719.3 361.3h3.6v3.6h-3.6zM756.3 336.3h3.6v3.6h-3.6zM732.3 308.3h3.6v3.6h-3.6zM746.3 364.3h3.6v3.6h-3.6zM786.3 318.3h3.6v3.6h-3.6zM712.3 310.3h3.6v3.6h-3.6zM761.3 306.3h3.6v3.6h-3.6zM798.3 354.3h3.6v3.6h-3.6zM781.3 333.3h3.6v3.6h-3.6zM758.3 324.3h3.6v3.6h-3.6zM723.3 337.3h3.6v3.6h-3.6zM791.3 305.3h3.6v3.6h-3.6zM781.3 384.3h3.6v3.6h-3.6zM786.3 390.3h3.6v3.6h-3.6zM768.3 343.3h3.6v3.6h-3.6zM733.3 297.3h3.6v3.6h-3.6zM716.3 288.3h3.6v3.6h-3.6zM786.3 368.3h3.6v3.6h-3.6zM817.3 374.3h3.6v3.6h-3.6zM744.3 342.3h3.6v3.6h-3.6zM773.3 398.3h3.6v3.6h-3.6zM844.3 413.3h3.6v3.6h-3.6zM739.3 311.3h3.6v3.6h-3.6zM784.3 331.3h3.6v3.6h-3.6zM795.3 378.3h3.6v3.6h-3.6zM806.3 370.3h3.6v3.6h-3.6zM747.3 307.3h3.6v3.6h-3.6zM773.3 385.3h3.6v3.6h-3.6zM831.3 406.3h3.6v3.6h-3.6zM790.3 375.3h3.6v3.6h-3.6zM805.3 401.3h3.6v3.6h-3.6zM807.3 319.3h3.6v3.6h-3.6zM810.3 377.3h3.6v3.6h-3.6zM762.3 355.3h3.6v3.6h-3.6zM787.3 352.3h3.6v3.6h-3.6zM720.3 320.3h3.6v3.6h-3.6zM796.3 357.3h3.6v3.6h-3.6zM723.3 332.3h3.6v3.6h-3.6zM802.3 367.3h3.6v3.6h-3.6zM792.3 346.3h3.6v3.6h-3.6zM755.3 351.3h3.6v3.6h-3.6zM765.3 347.3h3.6v3.6h-3.6zM888.3 430.3h3.6v3.6h-3.6zM782.3 303.3h3.6v3.6h-3.6zM781.3 372.3h3.6v3.6h-3.6zM754.3 328.3h3.6v3.6h-3.6zM701.3 322.3h3.6v3.6h-3.6zM757.3 357.3h3.6v3.6h-3.6zM824.3 369.3h3.6v3.6h-3.6zM811.3 374.3h3.6v3.6h-3.6zM771.3 336.3h3.6v3.6h-3.6zM749.3 370.3h3.6v3.6h-3.6zM807.3 335.3h3.6v3.6h-3.6zM806.3 342.3h3.6v3.6h-3.6zM726.3 355.3h3.6v3.6h-3.6zM734.3 359.3h3.6v3.6h-3.6zM784.3 378.3h3.6v3.6h-3.6zM795.3 391.3h3.6v3.6h-3.6zM789.3 371.3h3.6v3.6h-3.6zM786.3 385.3h3.6v3.6h-3.6zM764.3 370.3h3.6v3.6h-3.6zM829.3 374.3h3.6v3.6h-3.6zM792.3 341.3h3.6v3.6h-3.6zM768.3 350.3h3.6v3.6h-3.6zM766.3 316.3h3.6v3.6h-3.6zM776.3 353.3h3.6v3.6h-3.6zM788.3 375.3h3.6v3.6h-3.6zM717.3 356.3h3.6v3.6h-3.6zM772.3 322.3h3.6v3.6h-3.6zM765.3 354.3h3.6v3.6h-3.6zM807.3 354.3h3.6v3.6h-3.6zM783.3 304.3h3.6v3.6h-3.6zM783.3 348.3h3.6v3.6h-3.6zM763.3 366.3h3.6v3.6h-3.6zM838.3 412.3h3.6v3.6h-3.6zM751.3 378.3h3.6v3.6h-3.6zM766.3 341.3h3.6v3.6h-3.6zM758.3 351.3h3.6v3.6h-3.6zM796.3 363.3h3.6v3.6h-3.6zM770.3 340.3h3.6v3.6h-3.6zM764.3 369.3h3.6v3.6h-3.6zM760.3 334.3h3.6v3.6h-3.6zM770.3 322.3h3.6v3.6h-3.6zM770.3 301.3h3.6v3.6h-3.6zM791.3 371.3h3.6v3.6h-3.6zM767.3 388.3h3.6v3.6h-3.6zM750.3 349.3h3.6v3.6h-3.6zM794.3 341.3h3.6v3.6h-3.6zM769.3 370.3h3.6v3.6h-3.6zM780.3 357.3h3.6v3.6h-3.6zM825.3 380.3h3.6v3.6h-3.6zM721.3 296.3h3.6v3.6h-3.6zM806.3 360.3h3.6v3.6h-3.6zM741.3 270.3h3.6v3.6h-3.6zM788.3 398.3h3.6v3.6h-3.6zM735.3 262.3h3.6v3.6h-3.6zM794.3 341.3h3.6v3.6h-3.6zM768.3 333.3h3.6v3.6h-3.6zM747.3 344.3h3.6v3.6h-3.6zM809.3 376.3h3.6v3.6h-3.6zM759.3 368.3h3.6v3.6h-3.6zM774.3 363.3h3.6v3.6h-3.6zM746.3 350.3h3.6v3.6h-3.6zM803.3 399.3h3.6v3.6h-3.6zM778.3 361.3h3.6v3.6h-3.6zM758.3 363.3h3.6v3.6h-3.6zM804.3 394.3h3.6v3.6h-3.6zM765.3 305.3h3.6v3.6h-3.6zM775.3 341.3h3.6v3.6h-3.6zM752.3 352.3h3.6v3.6h-3.6zM809.3 377.3h3.6v3.6h-3.6zM815.3 380.3h3.6v3.6h-3.6zM745.3 313.3h3.6v3.6h-3.6zM766.3 361.3h3.6v3.6h-3.6zM809.3 369.3h3.6v3.6h-3.6zM812.3 343.3h3.6v3.6h-3.6zM774.3 389.3h3.6v3.6h-3.6zM792.3 387.3h3.6v3.6h-3.6zM714.3 265.3h3.6v3.6h-3.6zM749.3 361.3h3.6v3.6h-3.6zM832.3 360.3h3.6v3.6h-3.6zM745.3 301.3h3.6v3.6h-3.6zM748.3 348.3h3.6v3.6h-3.6zM767.3 397.3h3.6v3.6h-3.6zM802.3 342.3h3.6v3.6h-3.6zM785.3 348.3h3.6v3.6h-3.6zM804.3 389.3h3.6v3.6h-3.6zM766.3 367.3h3.6v3.6h-3.6zM797.3 356.3h3.6v3.6h-3.6zM786.3 372.3h3.6v3.6h-3.6zM767.3 323.3h3.6v3.6h-3.6zM820.3 372.3h3.6v3.6h-3.6zM758.3 351.3h3.6v3.6h-3.6zM728.3 323.3h3.6v3.6h-3.6zM732.3 311.3h3.6v3.6h-3.6zM718.3 295.3h3.6v3.6h-3.6zM808.3 359.3h3.6v3.6h-3.6zM737.3 376.3h3.6v3.6h-3.6zM757.3 379.3h3.6v3.6h-3.6zM760.3 296.3h3.6v3.6h-3.6zM839.3 370.3h3.6v3.6h-3.6zM803.3 396.3h3.6v3.6h-3.6zM734.3 326.3h3.6v3.6h-3.6zM758.3 355.3h3.6v3.6h-3.6zM777.3 312.3h3.6v3.6h-3.6zM780.3 371.3h3.6v3.6h-3.6zM768.3 359.3h3.6v3.6h-3.6zM760.3 337.3h3.6v3.6h-3.6zM789.3 359.3h3.6v3.6h-3.6zM820.3 399.3h3.6v3.6h-3.6zM806.3 384.3h3.6v3.6h-3.6zM783.3 318.3h3.6v3.6h-3.6zM813.3 418.3h3.6v3.6h-3.6zM785.3 345.3h3.6v3.6h-3.6zM777.3 382.3h3.6v3.6h-3.6zM787.3 325.3h3.6v3.6h-3.6zM772.3 323.3h3.6v3.6h-3.6zM771.3 319.3h3.6v3.6h-3.6zM749.3 375.3h3.6v3.6h-3.6zM813.3 321.3h3.6v3.6h-3.6zM745.3 318.3h3.6v3.6h-3.6zM765.3 302.3h3.6v3.6h-3.6zM807.3 318.3h3.6v3.6h-3.6zM801.3 381.3h3.6v3.6h-3.6zM766.3 323.3h3.6v3.6h-3.6zM780.3 354.3h3.6v3.6h-3.6zM708.3 274.3h3.6v3.6h-3.6zM795.3 355.3h3.6v3.6h-3.6zM764.3 312.3h3.6v3.6h-3.6zM754.3 314.3h3.6v3.6h-3.6zM871.3 363.3h3.6v3.6h-3.6zM829.3 390.3h3.6v3.6h-3.6zM785.3 358.3h3.6v3.6h-3.6zM765.3 387.3h3.6v3.6h-3.6zM795.3 357.3h3.6v3.6h-3.6zM774.3 352.3h3.6v3.6h-3.6zM740.3 318.3h3.6v3.6h-3.6zM757.3 355.3h3.6v3.6h-3.6zM798.3 306.3h3.6v3.6h-3.6zM770.3 373.3h3.6v3.6h-3.6zM735.3 291.3h3.6v3.6h-3.6zM811.3 363.3h3.6v3.6h-3.6zM763.3 305.3h3.6v3.6h-3.6zM783.3 336.3h3.6v3.6h-3.6zM785.3 364.3h3.6v3.6h-3.6zM801.3 352.3h3.6v3.6h-3.6zM760.3 340.3h3.6v3.6h-3.6zM775.3 352.3h3.6v3.6h-3.6zM760.3 332.3h3.6v3.6h-3.6zM758.3 321.3h3.6v3.6h-3.6zM783.3 384.3h3.6v3.6h-3.6zM760.3 355.3h3.6v3.6h-3.6zM789.3 358.3h3.6v3.6h-3.6zM800.3 345.3h3.6v3.6h-3.6zM797.3 367.3h3.6v3.6h-3.6zM662.3 295.3h3.6v3.6h-3.6zM798.3 415.3h3.6v3.6h-3.6zM742.3 332.3h3.6v3.6h-3.6zM789.3 327.3h3.6v3.6h-3.6zM818.3 383.3h3.6v3.6h-3.6zM751.3 300.3h3.6v3.6h-3.6zM764.3 409.3h3.6v3.6h-3.6zM850.3 317.3h3.6v3.6h-3.6zM717.3 334.3h3.6v3.6h-3.6zM774.3 328.3h3.6v3.6h-3.6zM798.3 362.3h3.6v3.6h-3.6zM787.3 361.3h3.6v3.6h-3.6zM742.3 366.3h3.6v3.6h-3.6zM762.3 372.3h3.6v3.6h-3.6zM801.3 362.3h3.6v3.6h-3.6zM782.3 350.3h3.6v3.6h-3.6zM716.3 305.3h3.6v3.6h-3.6zM792.3 310.3h3.6v3.6h-3.6zM728.3 352.3h3.6v3.6h-3.6zM805.3 319.3h3.6v3.6h-3.6zM793.3 355.3h3.6v3.6h-3.6zM810.3 357.3h3.6v3.6h-3.6zM770.3 323.3h3.6v3.6h-3.6zM784.3 348.3h3.6v3.6h-3.6zM756.3 326.3h3.6v3.6h-3.6zM753.3 352.3h3.6v3.6h-3.6zM743.3 285.3h3.6v3.6h-3.6zM746.3 362.3h3.6v3.6h-3.6zM761.3 358.3h3.6v3.6h-3.6zM802.3 347.3h3.6v3.6h-3.6zM803.3 377.3h3.6v3.6h-3.6zM776.3 327.3h3.6v3.6h-3.6zM776.3 310.3h3.6v3.6h-3.6zM768.3 326.3h3.6v3.6h-3.6zM792.3 366.3h3.6v3.6h-3.6zM756.3 361.3h3.6v3.6h-3.6zM818.3 372.3h3.6v3.6h-3.6zM753.3 349.3h3.6v3.6h-3.6zM696.3 287.3h3.6v3.6h-3.6zM797.3 417.3h3.6v3.6h-3.6zM753.3 379.3h3.6v3.6h-3.6zM856.3 445.3h3.6v3.6h-3.6zM699.3 337.3h3.6v3.6h-3.6zM784.3 381.3h3.6v3.6h-3.6zM772.3 327.3h3.6v3.6h-3.6zM770.3 387.3h3.6v3.6h-3.6zM806.3 355.3h3.6v3.6h-3.6zM790.3 380.3h3.6v3.6h-3.6zM797.3 357.3h3.6v3.6h-3.6zM756.3 315.3h3.6v3.6h-3.6zM763.3 324.3h3.6v3.6h-3.6zM725.3 278.3h3.6v3.6h-3.6zM807.3 332.3h3.6v3.6h-3.6zM733.3 323.3h3.6v3.6h-3.6zM826.3 411.3h3.6v3.6h-3.6zM764.3 311.3h3.6v3.6h-3.6zM760.3 312.3h3.6v3.6h-3.6zM759.3 352.3h3.6v3.6h-3.6zM742.3 306.3h3.6v3.6h-3.6zM769.3 343.3h3.6v3.6h-3.6zM752.3 311.3h3.6v3.6h-3.6zM739.3 305.3h3.6v3.6h-3.6zM795.3 351.3h3.6v3.6h-3.6zM673.3 309.3h3.6v3.6h-3.6zM775.3 321.3h3.6v3.6h-3.6zM769.3 255.3h3.6v3.6h-3.6zM722.3 351.3h3.6v3.6h-3.6zM850.3 451.3h3.6v3.6h-3.6zM753.3 336.3h3.6v3.6h-3.6zM804.3 327.3h3.6v3.6h-3.6zM837.3 359.3h3.6v3.6h-3.6zM790.3 321.3h3.6v3.6h-3.6zM790.3 354.3h3.6v3.6h-3.6zM814.3 334.3h3.6v3.6h-3.6zM777.3 401.3h3.6v3.6h-3.6zM737.3 336.3h3.6v3.6h-3.6zM792.3 342.3h3.6v3.6h-3.6zM768.3 384.3h3.6v3.6h-3.6zM816.3 386.3h3.6v3.6h-3.6zM787.3 320.3h3.6v3.6h-3.6zM781.3 402.3h3.6v3.6h-3.6zM813.3 328.3h3.6v3.6h-3.6zM707.3 290.3h3.6v3.6h-3.6zM783.3 335.3h3.6v3.6h-3.6zM767.3 352.3h3.6v3.6h-3.6zM808.3 371.3h3.6v3.6h-3.6zM820.3 330.3h3.6v3.6h-3.6zM793.3 369.3h3.6v3.6h-3.6zM727.3 357.3h3.6v3.6h-3.6zM723.3 276.3h3.6v3.6h-3.6zM868.3 436.3h3.6v3.6h-3.6zM790.3 395.3h3.6v3.6h-3.6zM817.3 336.3h3.6v3.6h-3.6zM794.3 398.3h3.6v3.6h-3.6zM772.3 347.3h3.6v3.6h-3.6zM762.3 361.3h3.6v3.6h-3.6zM759.3 320.3h3.6v3.6h-3.6zM736.3 298.3h3.6v3.6h-3.6zM785.3 366.3h3.6v3.6h-3.6zM764.3 310.3h3.6v3.6h-3.6zM789.3 365.3h3.6v3.6h-3.6zM821.3 357.3h3.6v3.6h-3.6zM763.3 355.3h3.6v3.6h-3.6zM830.3 375.3h3.6v3.6h-3.6zM775.3 319.3h3.6v3.6h-3.6zM765.3 369.3h3.6v3.6h-3.6zM807.3 397.3h3.6v3.6h-3.6zM721.3 342.3h3.6v3.6h-3.6zM746.3 348.3h3.6v3.6h-3.6zM697.3 301.3h3.6v3.6h-3.6zM747.3 369.3h3.6v3.6h-3.6zM782.3 389.3h3.6v3.6h-3.6zM762.3 398.3h3.6v3.6h-3.6zM762.3 396.3h3.6v3.6h-3.6zM761.3 310.3h3.6v3.6h-3.6zM808.3 353.3h3.6v3.6h-3.6zM776.3 307.3h3.6v3.6h-3.6zM766.3 345.3h3.6v3.6h-3.6zM753.3 346.3h3.6v3.6h-3.6zM699.3 331.3h3.6v3.6h-3.6zM764.3 384.3h3.6v3.6h-3.6zM766.3 322.3h3.6v3.6h-3.6zM762.3 348.3h3.6v3.6h-3.6zM798.3 346.3h3.6v3.6h-3.6zM750.3 346.3h3.6v3.6h-3.6zM806.3 312.3h3.6v3.6h-3.6zM742.3 308.3h3.6v3.6h-3.6zM836.3 417.3h3.6v3.6h-3.6zM805.3 378.3h3.6v3.6h-3.6zM739.3 360.3h3.6v3.6h-3.6zM762.3 316.3h3.6v3.6h-3.6zM844.3 342.3h3.6v3.6h-3.6zM825.3 380.3h3.6v3.6h-3.6zM746.3 336.3h3.6v3.6h-3.6zM749.3 338.3h3.6v3.6h-3.6zM755.3 301.3h3.6v3.6h-3.6zM869.3 383.3h3.6v3.6h-3.6zM812.3 365.3h3.6v3.6h-3.6zM801.3 323.3h3.6v3.6h-3.6zM742.3 231.3h3.6v3.6h-3.6zM812.3 380.3h3.6v3.6h-3.6zM737.3 351.3h3.6v3.6h-3.6zM798.3 446.3h3.6v3.6h-3.6zM786.3 380.3h3.6v3.6h-3.6zM799.3 383.3h3.6v3.6h-3.6zM777.3 335.3h3.6v3.6h-3.6zM802.3 398.3h3.6v3.6h-3.6zM737.3 292.3h3.6v3.6h-3.6zM776.3 401.3h3.6v3.6h-3.6zM770.3 294.3h3.6v3.6h-3.6zM805.3 386.3h3.6v3.6h-3.6zM845.3 390.3h3.6v3.6h-3.6zM845.3 364.3h3.6v3.6h-3.6zM809.3 369.3h3.6v3.6h-3.6zM737.3 317.3h3.6v3.6h-3.6zM823.3 406.3h3.6v3.6h-3.6zM765.3 374.3h3.6v3.6h-3.6zM809.3 392.3h3.6v3.6h-3.6zM788.3 363.3h3.6v3.6h-3.6zM749.3 331.3h3.6v3.6h-3.6zM782.3 329.3h3.6v3.6h-3.6zM768.3 348.3h3.6v3.6h-3.6zM785.3 384.3h3.6v3.6h-3.6zM742.3 317.3h3.6v3.6h-3.6zM787.3 342.3h3.6v3.6h-3.6zM789.3 341.3h3.6v3.6h-3.6zM818.3 364.3h3.6v3.6h-3.6zM739.3 349.3h3.6v3.6h-3.6zM835.3 323.3h3.6v3.6h-3.6zM773.3 348.3h3.6v3.6h-3.6zM813.3 412.3h3.6v3.6h-3.6zM772.3 299.3h3.6v3.6h-3.6zM801.3 391.3h3.6v3.6h-3.6zM794.3 359.3h3.6v3.6h-3.6zM750.3 405.3h3.6v3.6h-3.6zM736.3 281.3h3.6v3.6h-3.6zM811.3 375.3h3.6v3.6h-3.6zM801.3 372.3h3.6v3.6h-3.6zM836.3 422.3h3.6v3.6h-3.6zM759.3 368.3h3.6v3.6h-3.6zM737.3 276.3h3.6v3.6h-3.6zM819.3 358.3h3.6v3.6h-3.6zM704.3 307.3h3.6v3.6h-3.6zM755.3 351.3h3.6v3.6h-3.6zM776.3 324.3h3.6v3.6h-3.6zM753.3 358.3h3.6v3.6h-3.6zM746.3 335.3h3.6v3.6h-3.6zM744.3 343.3h3.6v3.6h-3.6zM839.3 399.3h3.6v3.6h-3.6zM816.3 383.3h3.6v3.6h-3.6zM745.3 321.3h3.6v3.6h-3.6zM780.3 363.3h3.6v3.6h-3.6zM757.3 355.3h3.6v3.6h-3.6zM753.3 337.3h3.6v3.6h-3.6zM777.3 314.3h3.6v3.6h-3.6zM812.3 369.3h3.6v3.6h-3.6zM781.3 349.3h3.6v3.6h-3.6zM705.3 267.3h3.6v3.6h-3.6zM747.3 361.3h3.6v3.6h-3.6zM758.3 355.3h3.6v3.6h-3.6zM742.3 304.3h3.6v3.6h-3.6zM762.3 371.3h3.6v3.6h-3.6zM721.3 312.3h3.6v3.6h-3.6zM792.3 360.3h3.6v3.6h-3.6zM777.3 371.3h3.6v3.6h-3.6zM788.3 324.3h3.6v3.6h-3.6zM799.3 337.3h3.6v3.6h-3.6zM766.3 385.3h3.6v3.6h-3.6zM862.3 437.3h3.6v3.6h-3.6zM792.3 333.3h3.6v3.6h-3.6zM752.3 383.3h3.6v3.6h-3.6zM789.3 314.3h3.6v3.6h-3.6zM832.3 395.3h3.6v3.6h-3.6zM823.3 385.3h3.6v3.6h-3.6zM704.3 286.3h3.6v3.6h-3.6zM773.3 341.3h3.6v3.6h-3.6zM830.3 357.3h3.6v3.6h-3.6zM774.3 345.3h3.6v3.6h-3.6zM775.3 316.3h3.6v3.6h-3.6zM736.3 249.3h3.6v3.6h-3.6zM789.3 349.3h3.6v3.6h-3.6zM785.3 321.3h3.6v3.6h-3.6zM778.3 320.3h3.6v3.6h-3.6zM743.3 339.3h3.6v3.6h-3.6zM800.3 377.3h3.6v3.6h-3.6zM776.3 336.3h3.6v3.6h-3.6zM826.3 411.3h3.6v3.6h-3.6zM756.3 304.3h3.6v3.6h-3.6zM790.3 365.3h3.6v3.6h-3.6zM746.3 398.3h3.6v3.6h-3.6zM706.3 284.3h3.6v3.6h-3.6zM786.3 382.3h3.6v3.6h-3.6zM714.3 301.3h3.6v3.6h-3.6zM827.3 417.3h3.6v3.6h-3.6zM769.3 345.3h3.6v3.6h-3.6zM747.3 343.3h3.6v3.6h-3.6zM742.3 269.3h3.6v3.6h-3.6z" fill="none" stroke="#c60cb8" stroke-width="1.100"/><polygon points="626,196 863,264 931,505 695,435" fill="none" stroke="#f03030" stroke-width="1.100"/><polygon points="627,198 861,263 932,505 700,443" fill="none" stroke="#2a2ae8" stroke-width="1.200"/><path d="M623.5 193.5l5 5m0-5l-5 5M623 196h6" stroke="#f03030" stroke-width="1" fill="none"/><path d="M860.5 261.5l5 5m0-5l-5 5M860 264h6" stroke="#f03030" stroke-width="1" fill="none"/><path d="M928.5 502.5l5 5m0-5l-5 5M928 505h6" stroke="#f03030" stroke-width="1" fill="none"/><path d="M692.5 432.5l5 5m0-5l-5 5M692 435h6" stroke="#f03030" stroke-width="1" fill="none"/><path d="M624.5 195.5l5 5m0-5l-5 5M624 198h6" stroke="#1a1ae0" stroke-width="1" fill="none"/><path d="M858.5 260.5l5 5m0-5l-5 5M858 263h6" stroke="#1a1ae0" stroke-width="1" fill="none"/><path d="M929.5 502.5l5 5m0-5l-5 5M929 505h6" stroke="#1a1ae0" stroke-width="1" fill="none"/><path d="M697.5 440.5l5 5m0-5l-5 5M697 443h6" stroke="#1a1ae0" stroke-width="1" fill="none"/><path d="M776.5 347.5l5 5m0-5l-5 5M776.0 350h6" stroke="#f03030" stroke-width="1" fill="none"/><path d="M777.0 347.5l5 5m0-5l-5 5M776.5 350h6" stroke="#1a1ae0" stroke-width="1" fill="none"/><rect x="625.5" y="503.5" width="4" height="4" fill="none" stroke="#2020d0" stroke-width="1"/><text x="789.0" y="120" text-anchor="middle" fill="#000" font-size="10" >W/L=1.5/1.5,T=27@Vbs/Vdd/Vlin=0/2/0.05</text><text x="574.5" y="147" text-anchor="end" fill="#000" font-size="10" >-49.5</text><text x="574.5" y="242.5" text-anchor="end" fill="#000" font-size="10" >-59.9</text><text x="574.5" y="344.5" text-anchor="end" fill="#000" font-size="10" >-70.3</text><text x="574.5" y="446.5" text-anchor="end" fill="#000" font-size="10" >-80.7</text><text x="574.5" y="545.5" text-anchor="end" fill="#000" font-size="10" >-91.1</text><text x="580" y="570" text-anchor="middle" fill="#000" font-size="10" >189</text><text x="683" y="570" text-anchor="middle" fill="#000" font-size="10" >214</text><text x="778.5" y="570" text-anchor="middle" fill="#000" font-size="10" >239</text><text x="874" y="570" text-anchor="middle" fill="#000" font-size="10" >265</text><text x="979" y="570" text-anchor="middle" fill="#000" font-size="10" >290</text><text x="779.5" y="583" text-anchor="middle" fill="#000" font-size="10" >idsat_n</text><text transform="translate(544,351) rotate(-90)" text-anchor="middle" font-size="10" fill="#000">idsat_p</text><text x="1040" y="133" text-anchor="end" fill="#000" font-size="10" >Coef</text><text x="1031" y="149" text-anchor="end" fill="#2a2ae8" font-size="10" >Sim:</text><rect x="1032" y="142" width="5.500" height="6.500" fill="none" stroke="#2a2ae8" stroke-width="1"/><text x="1040" y="167" text-anchor="end" fill="#f02020" font-size="10" >Mea:-0.537</text></svg>
<svg class="a" style="left:0;top:0;width:1600px;height:600px;font-family:'Liberation Sans',sans-serif" viewBox="0 0 1600 600"><rect x="1101.5" y="125.5" width="403.0" height="431.0" fill="#fff" stroke="#969696" stroke-width="1"/><path d="M1111.5 136.5V545.5" stroke="#bcbcbc" stroke-width="1" stroke-dasharray="1.600 2.100" fill="none"/><path d="M1206.5 136.5V545.5" stroke="#bcbcbc" stroke-width="1" stroke-dasharray="1.600 2.100" fill="none"/><path d="M1302.5 136.5V545.5" stroke="#bcbcbc" stroke-width="1" stroke-dasharray="1.600 2.100" fill="none"/><path d="M1397.5 136.5V545.5" stroke="#bcbcbc" stroke-width="1" stroke-dasharray="1.600 2.100" fill="none"/><path d="M1494.5 136.5V545.5" stroke="#bcbcbc" stroke-width="1" stroke-dasharray="1.600 2.100" fill="none"/><path d="M1111.5 136.5H1494.5" stroke="#bcbcbc" stroke-width="1" stroke-dasharray="1.600 2.100" fill="none"/><path d="M1111.5 238.5H1494.5" stroke="#bcbcbc" stroke-width="1" stroke-dasharray="1.600 2.100" fill="none"/><path d="M1111.5 340.5H1494.5" stroke="#bcbcbc" stroke-width="1" stroke-dasharray="1.600 2.100" fill="none"/><path d="M1111.5 442.5H1494.5" stroke="#bcbcbc" stroke-width="1" stroke-dasharray="1.600 2.100" fill="none"/><path d="M1111.5 545.5H1494.5" stroke="#bcbcbc" stroke-width="1" stroke-dasharray="1.600 2.100" fill="none"/><polygon points="1148,192.5 1380,271.5 1456.5,508 1224.5,430.5" fill="#ff3030" fill-opacity="0.110" stroke="none"/><polygon points="1149.5,207 1379,271 1469,523 1227,430.5" fill="#3a30ff" fill-opacity="0.100" stroke="none"/><clipPath id="clip22"><polygon points="1148,192.5 1380,271.5 1456.5,508 1224.5,430.5"/></clipPath><polygon points="1149.5,207 1379,271 1469,523 1227,430.5" fill="#c474cc" fill-opacity="0.200" clip-path="url(#clip22)"/><path d="M1493.5 466.7L1492.8 479.8L1490.6 491.9L1487.0 503.0L1482.0 512.9L1475.6 521.5L1467.9 528.9L1459.0 534.8L1448.8 539.4L1437.6 542.5L1425.3 544.2L1412.1 544.4L1398.0 543.1L1383.2 540.3L1367.8 536.1L1351.9 530.5L1335.7 523.5L1319.1 515.2L1302.5 505.6L1285.9 494.8L1269.3 483.0L1253.1 470.1L1237.2 456.3L1221.8 441.7L1207.0 426.4L1192.9 410.5L1179.7 394.2L1167.4 377.5L1156.2 360.6L1146.0 343.7L1137.1 326.7L1129.4 310.0L1123.0 293.6L1118.0 277.5L1114.4 262.1L1112.2 247.3L1111.5 233.3L1112.2 220.2L1114.4 208.1L1118.0 197.0L1123.0 187.1L1129.4 178.5L1137.1 171.1L1146.0 165.2L1156.2 160.6L1167.4 157.5L1179.7 155.8L1192.9 155.6L1207.0 156.9L1221.8 159.7L1237.2 163.9L1253.1 169.5L1269.3 176.5L1285.9 184.8L1302.5 194.4L1319.1 205.2L1335.7 217.0L1351.9 229.9L1367.8 243.7L1383.2 258.3L1398.0 273.6L1412.1 289.5L1425.3 305.8L1437.6 322.5L1448.8 339.4L1459.0 356.3L1467.9 373.3L1475.6 390.0L1482.0 406.4L1487.0 422.5L1490.6 437.9L1492.8 452.7Z" fill="none" stroke="#d81ac8" stroke-width="1.100"/><path d="M1459.4 445.9L1458.8 456.6L1457.0 466.6L1454.0 475.7L1449.9 483.8L1444.7 490.9L1438.4 496.9L1431.0 501.8L1422.7 505.6L1413.4 508.2L1403.3 509.5L1392.5 509.7L1380.9 508.6L1368.8 506.4L1356.2 502.9L1343.1 498.3L1329.7 492.5L1316.2 485.7L1302.5 477.8L1288.8 469.0L1275.3 459.2L1261.9 448.6L1248.8 437.3L1236.2 425.3L1224.1 412.8L1212.5 399.7L1201.7 386.3L1191.6 372.6L1182.3 358.7L1174.0 344.8L1166.6 330.9L1160.3 317.1L1155.1 303.6L1151.0 290.5L1148.0 277.8L1146.2 265.6L1145.6 254.1L1146.2 243.4L1148.0 233.4L1151.0 224.3L1155.1 216.2L1160.3 209.1L1166.6 203.1L1174.0 198.2L1182.3 194.4L1191.6 191.8L1201.7 190.5L1212.5 190.3L1224.1 191.4L1236.2 193.6L1248.8 197.1L1261.9 201.7L1275.3 207.5L1288.8 214.3L1302.5 222.2L1316.2 231.0L1329.7 240.8L1343.1 251.4L1356.2 262.7L1368.8 274.7L1380.9 287.2L1392.5 300.3L1403.3 313.7L1413.4 327.4L1422.7 341.3L1431.0 355.2L1438.4 369.1L1444.7 382.9L1449.9 396.4L1454.0 409.5L1457.0 422.2L1458.8 434.4Z" fill="none" stroke="#d81ac8" stroke-width="1.100"/><path d="M1425.3 425.0L1424.8 433.5L1423.4 441.3L1421.1 448.4L1417.9 454.7L1413.8 460.3L1408.8 465.0L1403.1 468.8L1396.6 471.8L1389.3 473.8L1381.4 474.8L1372.9 475.0L1363.9 474.1L1354.4 472.4L1344.5 469.7L1334.3 466.0L1323.8 461.5L1313.2 456.2L1302.5 450.0L1291.8 443.1L1281.2 435.5L1270.7 427.2L1260.5 418.3L1250.6 409.0L1241.1 399.1L1232.1 388.9L1223.6 378.4L1215.7 367.7L1208.4 356.8L1201.9 345.9L1196.2 335.0L1191.2 324.3L1187.1 313.7L1183.9 303.4L1181.6 293.5L1180.2 284.0L1179.7 275.0L1180.2 266.5L1181.6 258.7L1183.9 251.6L1187.1 245.3L1191.2 239.7L1196.2 235.0L1201.9 231.2L1208.4 228.2L1215.7 226.2L1223.6 225.2L1232.1 225.0L1241.1 225.9L1250.6 227.6L1260.5 230.3L1270.7 234.0L1281.2 238.5L1291.8 243.8L1302.5 250.0L1313.2 256.9L1323.8 264.5L1334.3 272.8L1344.5 281.7L1354.4 291.0L1363.9 300.9L1372.9 311.1L1381.4 321.6L1389.3 332.3L1396.6 343.2L1403.1 354.1L1408.8 365.0L1413.8 375.7L1417.9 386.3L1421.1 396.6L1423.4 406.5L1424.8 416.0Z" fill="none" stroke="#d81ac8" stroke-width="1.100"/><path d="M1391.2 404.2L1390.8 410.3L1389.8 415.9L1388.2 421.0L1385.8 425.6L1382.9 429.6L1379.3 433.0L1375.1 435.8L1370.4 437.9L1365.2 439.4L1359.5 440.2L1353.4 440.3L1346.8 439.7L1340.0 438.4L1332.8 436.4L1325.5 433.8L1317.9 430.6L1310.2 426.7L1302.5 422.2L1294.8 417.2L1287.1 411.7L1279.5 405.8L1272.2 399.4L1265.0 392.6L1258.2 385.5L1251.6 378.1L1245.5 370.5L1239.8 362.8L1234.6 354.9L1229.9 347.1L1225.7 339.2L1222.1 331.4L1219.2 323.8L1216.8 316.4L1215.2 309.2L1214.2 302.3L1213.8 295.8L1214.2 289.7L1215.2 284.1L1216.8 279.0L1219.2 274.4L1222.1 270.4L1225.7 267.0L1229.9 264.2L1234.6 262.1L1239.8 260.6L1245.5 259.8L1251.6 259.7L1258.2 260.3L1265.0 261.6L1272.2 263.6L1279.5 266.2L1287.1 269.4L1294.8 273.3L1302.5 277.8L1310.2 282.8L1317.9 288.3L1325.5 294.2L1332.8 300.6L1340.0 307.4L1346.8 314.5L1353.4 321.9L1359.5 329.5L1365.2 337.2L1370.4 345.1L1375.1 352.9L1379.3 360.8L1382.9 368.6L1385.8 376.2L1388.2 383.6L1389.8 390.8L1390.8 397.7Z" fill="none" stroke="#d81ac8" stroke-width="1.100"/><path d="M1357.1 383.3L1356.9 387.1L1356.2 390.6L1355.2 393.7L1353.8 396.5L1352.0 399.0L1349.8 401.1L1347.2 402.8L1344.3 404.1L1341.1 405.0L1337.6 405.5L1333.8 405.5L1329.8 405.2L1325.6 404.4L1321.2 403.2L1316.6 401.6L1312.0 399.6L1307.3 397.2L1302.5 394.5L1297.7 391.4L1293.0 388.0L1288.4 384.3L1283.8 380.4L1279.4 376.2L1275.2 371.8L1271.2 367.3L1267.4 362.6L1263.9 357.9L1260.7 353.0L1257.8 348.2L1255.2 343.4L1253.0 338.6L1251.2 333.9L1249.8 329.3L1248.8 324.9L1248.1 320.7L1247.9 316.7L1248.1 312.9L1248.8 309.4L1249.8 306.3L1251.2 303.5L1253.0 301.0L1255.2 298.9L1257.8 297.2L1260.7 295.9L1263.9 295.0L1267.4 294.5L1271.2 294.5L1275.2 294.8L1279.4 295.6L1283.8 296.8L1288.4 298.4L1293.0 300.4L1297.7 302.8L1302.5 305.5L1307.3 308.6L1312.0 312.0L1316.6 315.7L1321.2 319.6L1325.6 323.8L1329.8 328.2L1333.8 332.7L1337.6 337.4L1341.1 342.1L1344.3 347.0L1347.2 351.8L1349.8 356.6L1352.0 361.4L1353.8 366.1L1355.2 370.7L1356.2 375.1L1356.9 379.3Z" fill="none" stroke="#d81ac8" stroke-width="1.100"/><path d="M1319.3 355.3h3.6v3.6h-3.6zM1423.3 437.3h3.6v3.6h-3.6zM1307.3 365.3h3.6v3.6h-3.6zM1282.3 316.3h3.6v3.6h-3.6zM1319.3 347.3h3.6v3.6h-3.6zM1329.3 360.3h3.6v3.6h-3.6zM1237.3 271.3h3.6v3.6h-3.6zM1270.3 272.3h3.6v3.6h-3.6zM1298.3 338.3h3.6v3.6h-3.6zM1334.3 343.3h3.6v3.6h-3.6zM1292.3 360.3h3.6v3.6h-3.6zM1327.3 334.3h3.6v3.6h-3.6zM1355.3 363.3h3.6v3.6h-3.6zM1343.3 365.3h3.6v3.6h-3.6zM1286.3 303.3h3.6v3.6h-3.6zM1296.3 415.3h3.6v3.6h-3.6zM1278.3 379.3h3.6v3.6h-3.6zM1348.3 366.3h3.6v3.6h-3.6zM1340.3 413.3h3.6v3.6h-3.6zM1290.3 326.3h3.6v3.6h-3.6zM1340.3 383.3h3.6v3.6h-3.6zM1376.3 407.3h3.6v3.6h-3.6zM1259.3 322.3h3.6v3.6h-3.6zM1258.3 344.3h3.6v3.6h-3.6zM1326.3 352.3h3.6v3.6h-3.6zM1269.3 355.3h3.6v3.6h-3.6zM1287.3 375.3h3.6v3.6h-3.6zM1266.3 319.3h3.6v3.6h-3.6zM1281.3 306.3h3.6v3.6h-3.6zM1398.3 456.3h3.6v3.6h-3.6zM1278.3 358.3h3.6v3.6h-3.6zM1236.3 345.3h3.6v3.6h-3.6zM1339.3 362.3h3.6v3.6h-3.6zM1288.3 348.3h3.6v3.6h-3.6zM1317.3 348.3h3.6v3.6h-3.6zM1270.3 322.3h3.6v3.6h-3.6zM1285.3 362.3h3.6v3.6h-3.6zM1304.3 357.3h3.6v3.6h-3.6zM1241.3 301.3h3.6v3.6h-3.6zM1287.3 325.3h3.6v3.6h-3.6zM1297.3 337.3h3.6v3.6h-3.6zM1246.3 343.3h3.6v3.6h-3.6zM1334.3 354.3h3.6v3.6h-3.6zM1323.3 335.3h3.6v3.6h-3.6zM1256.3 315.3h3.6v3.6h-3.6zM1357.3 380.3h3.6v3.6h-3.6zM1246.3 323.3h3.6v3.6h-3.6zM1281.3 316.3h3.6v3.6h-3.6zM1314.3 306.3h3.6v3.6h-3.6zM1237.3 268.3h3.6v3.6h-3.6zM1340.3 376.3h3.6v3.6h-3.6zM1280.3 317.3h3.6v3.6h-3.6zM1325.3 401.3h3.6v3.6h-3.6zM1276.3 342.3h3.6v3.6h-3.6zM1386.3 419.3h3.6v3.6h-3.6zM1290.3 353.3h3.6v3.6h-3.6zM1306.3 372.3h3.6v3.6h-3.6zM1315.3 344.3h3.6v3.6h-3.6zM1298.3 359.3h3.6v3.6h-3.6zM1278.3 338.3h3.6v3.6h-3.6zM1270.3 367.3h3.6v3.6h-3.6zM1358.3 359.3h3.6v3.6h-3.6zM1333.3 374.3h3.6v3.6h-3.6zM1306.3 345.3h3.6v3.6h-3.6zM1312.3 386.3h3.6v3.6h-3.6zM1259.3 353.3h3.6v3.6h-3.6zM1293.3 313.3h3.6v3.6h-3.6zM1301.3 368.3h3.6v3.6h-3.6zM1299.3 357.3h3.6v3.6h-3.6zM1290.3 328.3h3.6v3.6h-3.6zM1338.3 345.3h3.6v3.6h-3.6zM1338.3 382.3h3.6v3.6h-3.6zM1293.3 338.3h3.6v3.6h-3.6zM1292.3 343.3h3.6v3.6h-3.6zM1301.3 346.3h3.6v3.6h-3.6zM1234.3 248.3h3.6v3.6h-3.6zM1315.3 340.3h3.6v3.6h-3.6zM1282.3 334.3h3.6v3.6h-3.6zM1263.3 372.3h3.6v3.6h-3.6zM1302.3 346.3h3.6v3.6h-3.6zM1265.3 353.3h3.6v3.6h-3.6zM1328.3 409.3h3.6v3.6h-3.6zM1334.3 347.3h3.6v3.6h-3.6zM1258.3 363.3h3.6v3.6h-3.6zM1279.3 333.3h3.6v3.6h-3.6zM1297.3 362.3h3.6v3.6h-3.6zM1322.3 333.3h3.6v3.6h-3.6zM1280.3 287.3h3.6v3.6h-3.6zM1322.3 358.3h3.6v3.6h-3.6zM1243.3 344.3h3.6v3.6h-3.6zM1303.3 322.3h3.6v3.6h-3.6zM1288.3 325.3h3.6v3.6h-3.6zM1306.3 359.3h3.6v3.6h-3.6zM1282.3 351.3h3.6v3.6h-3.6zM1211.3 285.3h3.6v3.6h-3.6zM1325.3 392.3h3.6v3.6h-3.6zM1331.3 338.3h3.6v3.6h-3.6zM1243.3 305.3h3.6v3.6h-3.6zM1383.3 407.3h3.6v3.6h-3.6zM1277.3 287.3h3.6v3.6h-3.6zM1308.3 341.3h3.6v3.6h-3.6zM1320.3 367.3h3.6v3.6h-3.6zM1220.3 297.3h3.6v3.6h-3.6zM1330.3 351.3h3.6v3.6h-3.6zM1260.3 292.3h3.6v3.6h-3.6zM1256.3 385.3h3.6v3.6h-3.6zM1352.3 363.3h3.6v3.6h-3.6zM1350.3 350.3h3.6v3.6h-3.6zM1283.3 318.3h3.6v3.6h-3.6zM1296.3 365.3h3.6v3.6h-3.6zM1373.3 415.3h3.6v3.6h-3.6zM1298.3 352.3h3.6v3.6h-3.6zM1294.3 356.3h3.6v3.6h-3.6zM1272.3 339.3h3.6v3.6h-3.6zM1318.3 387.3h3.6v3.6h-3.6zM1273.3 344.3h3.6v3.6h-3.6zM1312.3 333.3h3.6v3.6h-3.6zM1233.3 292.3h3.6v3.6h-3.6zM1332.3 361.3h3.6v3.6h-3.6zM1381.3 414.3h3.6v3.6h-3.6zM1277.3 332.3h3.6v3.6h-3.6zM1318.3 373.3h3.6v3.6h-3.6zM1294.3 358.3h3.6v3.6h-3.6zM1405.3 439.3h3.6v3.6h-3.6zM1308.3 340.3h3.6v3.6h-3.6zM1240.3 317.3h3.6v3.6h-3.6zM1288.3 340.3h3.6v3.6h-3.6zM1283.3 360.3h3.6v3.6h-3.6zM1339.3 353.3h3.6v3.6h-3.6zM1254.3 330.3h3.6v3.6h-3.6zM1350.3 391.3h3.6v3.6h-3.6zM1319.3 320.3h3.6v3.6h-3.6zM1283.3 354.3h3.6v3.6h-3.6zM1315.3 357.3h3.6v3.6h-3.6zM1322.3 386.3h3.6v3.6h-3.6zM1305.3 332.3h3.6v3.6h-3.6zM1253.3 326.3h3.6v3.6h-3.6zM1296.3 341.3h3.6v3.6h-3.6zM1340.3 355.3h3.6v3.6h-3.6zM1292.3 362.3h3.6v3.6h-3.6zM1271.3 270.3h3.6v3.6h-3.6zM1283.3 361.3h3.6v3.6h-3.6zM1281.3 330.3h3.6v3.6h-3.6zM1237.3 344.3h3.6v3.6h-3.6zM1241.3 294.3h3.6v3.6h-3.6zM1295.3 401.3h3.6v3.6h-3.6zM1305.3 332.3h3.6v3.6h-3.6zM1250.3 309.3h3.6v3.6h-3.6zM1259.3 306.3h3.6v3.6h-3.6zM1303.3 385.3h3.6v3.6h-3.6zM1263.3 365.3h3.6v3.6h-3.6zM1234.3 363.3h3.6v3.6h-3.6zM1279.3 325.3h3.6v3.6h-3.6zM1285.3 346.3h3.6v3.6h-3.6zM1300.3 339.3h3.6v3.6h-3.6zM1277.3 319.3h3.6v3.6h-3.6zM1303.3 336.3h3.6v3.6h-3.6zM1278.3 294.3h3.6v3.6h-3.6zM1302.3 364.3h3.6v3.6h-3.6zM1266.3 356.3h3.6v3.6h-3.6zM1300.3 351.3h3.6v3.6h-3.6zM1243.3 331.3h3.6v3.6h-3.6zM1345.3 430.3h3.6v3.6h-3.6zM1280.3 335.3h3.6v3.6h-3.6zM1327.3 380.3h3.6v3.6h-3.6zM1280.3 338.3h3.6v3.6h-3.6zM1335.3 386.3h3.6v3.6h-3.6zM1300.3 377.3h3.6v3.6h-3.6zM1250.3 330.3h3.6v3.6h-3.6zM1279.3 325.3h3.6v3.6h-3.6zM1329.3 415.3h3.6v3.6h-3.6zM1317.3 363.3h3.6v3.6h-3.6zM1358.3 405.3h3.6v3.6h-3.6zM1226.3 286.3h3.6v3.6h-3.6zM1279.3 317.3h3.6v3.6h-3.6zM1250.3 336.3h3.6v3.6h-3.6zM1308.3 402.3h3.6v3.6h-3.6zM1292.3 347.3h3.6v3.6h-3.6zM1276.3 363.3h3.6v3.6h-3.6zM1345.3 423.3h3.6v3.6h-3.6zM1337.3 355.3h3.6v3.6h-3.6zM1343.3 350.3h3.6v3.6h-3.6zM1281.3 332.3h3.6v3.6h-3.6zM1374.3 374.3h3.6v3.6h-3.6zM1268.3 337.3h3.6v3.6h-3.6zM1343.3 391.3h3.6v3.6h-3.6zM1321.3 339.3h3.6v3.6h-3.6zM1289.3 378.3h3.6v3.6h-3.6zM1306.3 335.3h3.6v3.6h-3.6zM1291.3 381.3h3.6v3.6h-3.6zM1361.3 398.3h3.6v3.6h-3.6zM1275.3 380.3h3.6v3.6h-3.6zM1281.3 341.3h3.6v3.6h-3.6zM1317.3 360.3h3.6v3.6h-3.6zM1297.3 392.3h3.6v3.6h-3.6zM1314.3 318.3h3.6v3.6h-3.6zM1283.3 376.3h3.6v3.6h-3.6zM1297.3 319.3h3.6v3.6h-3.6zM1334.3 384.3h3.6v3.6h-3.6zM1304.3 368.3h3.6v3.6h-3.6zM1290.3 349.3h3.6v3.6h-3.6zM1323.3 348.3h3.6v3.6h-3.6zM1345.3 348.3h3.6v3.6h-3.6zM1373.3 396.3h3.6v3.6h-3.6zM1316.3 326.3h3.6v3.6h-3.6zM1329.3 345.3h3.6v3.6h-3.6zM1320.3 362.3h3.6v3.6h-3.6zM1276.3 384.3h3.6v3.6h-3.6zM1309.3 341.3h3.6v3.6h-3.6zM1291.3 353.3h3.6v3.6h-3.6zM1305.3 376.3h3.6v3.6h-3.6zM1284.3 346.3h3.6v3.6h-3.6zM1287.3 322.3h3.6v3.6h-3.6zM1331.3 346.3h3.6v3.6h-3.6zM1248.3 336.3h3.6v3.6h-3.6zM1286.3 357.3h3.6v3.6h-3.6zM1321.3 377.3h3.6v3.6h-3.6zM1306.3 396.3h3.6v3.6h-3.6zM1268.3 362.3h3.6v3.6h-3.6zM1298.3 357.3h3.6v3.6h-3.6zM1289.3 367.3h3.6v3.6h-3.6zM1320.3 350.3h3.6v3.6h-3.6zM1305.3 367.3h3.6v3.6h-3.6zM1299.3 417.3h3.6v3.6h-3.6zM1323.3 353.3h3.6v3.6h-3.6zM1338.3 381.3h3.6v3.6h-3.6zM1286.3 332.3h3.6v3.6h-3.6zM1250.3 340.3h3.6v3.6h-3.6zM1355.3 381.3h3.6v3.6h-3.6zM1277.3 289.3h3.6v3.6h-3.6zM1263.3 327.3h3.6v3.6h-3.6zM1282.3 335.3h3.6v3.6h-3.6zM1275.3 331.3h3.6v3.6h-3.6zM1296.3 353.3h3.6v3.6h-3.6zM1307.3 360.3h3.6v3.6h-3.6zM1276.3 328.3h3.6v3.6h-3.6zM1263.3 314.3h3.6v3.6h-3.6zM1302.3 364.3h3.6v3.6h-3.6zM1258.3 299.3h3.6v3.6h-3.6zM1286.3 308.3h3.6v3.6h-3.6zM1294.3 341.3h3.6v3.6h-3.6zM1279.3 382.3h3.6v3.6h-3.6zM1289.3 350.3h3.6v3.6h-3.6zM1244.3 338.3h3.6v3.6h-3.6zM1314.3 364.3h3.6v3.6h-3.6zM1232.3 306.3h3.6v3.6h-3.6zM1281.3 349.3h3.6v3.6h-3.6zM1302.3 337.3h3.6v3.6h-3.6zM1288.3 376.3h3.6v3.6h-3.6zM1340.3 328.3h3.6v3.6h-3.6zM1288.3 360.3h3.6v3.6h-3.6zM1289.3 352.3h3.6v3.6h-3.6zM1292.3 390.3h3.6v3.6h-3.6zM1327.3 361.3h3.6v3.6h-3.6zM1351.3 399.3h3.6v3.6h-3.6zM1360.3 374.3h3.6v3.6h-3.6zM1253.3 343.3h3.6v3.6h-3.6zM1304.3 305.3h3.6v3.6h-3.6zM1175.3 276.3h3.6v3.6h-3.6zM1305.3 331.3h3.6v3.6h-3.6zM1287.3 345.3h3.6v3.6h-3.6zM1256.3 357.3h3.6v3.6h-3.6zM1259.3 326.3h3.6v3.6h-3.6zM1303.3 338.3h3.6v3.6h-3.6zM1277.3 359.3h3.6v3.6h-3.6zM1249.3 318.3h3.6v3.6h-3.6zM1357.3 363.3h3.6v3.6h-3.6zM1251.3 306.3h3.6v3.6h-3.6zM1204.3 270.3h3.6v3.6h-3.6zM1263.3 304.3h3.6v3.6h-3.6zM1272.3 348.3h3.6v3.6h-3.6zM1303.3 323.3h3.6v3.6h-3.6zM1346.3 350.3h3.6v3.6h-3.6zM1352.3 367.3h3.6v3.6h-3.6zM1271.3 319.3h3.6v3.6h-3.6zM1350.3 383.3h3.6v3.6h-3.6zM1301.3 304.3h3.6v3.6h-3.6zM1301.3 341.3h3.6v3.6h-3.6zM1289.3 321.3h3.6v3.6h-3.6zM1248.3 352.3h3.6v3.6h-3.6zM1269.3 346.3h3.6v3.6h-3.6zM1321.3 366.3h3.6v3.6h-3.6zM1306.3 370.3h3.6v3.6h-3.6zM1290.3 340.3h3.6v3.6h-3.6zM1313.3 362.3h3.6v3.6h-3.6zM1291.3 269.3h3.6v3.6h-3.6zM1301.3 315.3h3.6v3.6h-3.6zM1341.3 408.3h3.6v3.6h-3.6zM1310.3 362.3h3.6v3.6h-3.6zM1233.3 303.3h3.6v3.6h-3.6zM1275.3 384.3h3.6v3.6h-3.6zM1257.3 384.3h3.6v3.6h-3.6zM1296.3 290.3h3.6v3.6h-3.6zM1363.3 381.3h3.6v3.6h-3.6zM1314.3 388.3h3.6v3.6h-3.6zM1248.3 304.3h3.6v3.6h-3.6zM1306.3 387.3h3.6v3.6h-3.6zM1296.3 362.3h3.6v3.6h-3.6zM1242.3 328.3h3.6v3.6h-3.6zM1270.3 321.3h3.6v3.6h-3.6zM1305.3 377.3h3.6v3.6h-3.6zM1279.3 348.3h3.6v3.6h-3.6zM1291.3 361.3h3.6v3.6h-3.6zM1287.3 379.3h3.6v3.6h-3.6zM1267.3 300.3h3.6v3.6h-3.6zM1345.3 356.3h3.6v3.6h-3.6zM1324.3 383.3h3.6v3.6h-3.6zM1245.3 307.3h3.6v3.6h-3.6zM1286.3 337.3h3.6v3.6h-3.6zM1251.3 324.3h3.6v3.6h-3.6zM1309.3 324.3h3.6v3.6h-3.6zM1303.3 356.3h3.6v3.6h-3.6zM1244.3 313.3h3.6v3.6h-3.6zM1332.3 389.3h3.6v3.6h-3.6zM1265.3 306.3h3.6v3.6h-3.6zM1302.3 361.3h3.6v3.6h-3.6zM1329.3 369.3h3.6v3.6h-3.6zM1329.3 348.3h3.6v3.6h-3.6zM1364.3 382.3h3.6v3.6h-3.6zM1269.3 314.3h3.6v3.6h-3.6zM1240.3 291.3h3.6v3.6h-3.6zM1290.3 356.3h3.6v3.6h-3.6zM1339.3 348.3h3.6v3.6h-3.6zM1276.3 352.3h3.6v3.6h-3.6zM1336.3 391.3h3.6v3.6h-3.6zM1309.3 322.3h3.6v3.6h-3.6zM1282.3 294.3h3.6v3.6h-3.6zM1277.3 368.3h3.6v3.6h-3.6zM1354.3 373.3h3.6v3.6h-3.6zM1321.3 398.3h3.6v3.6h-3.6zM1264.3 288.3h3.6v3.6h-3.6zM1278.3 276.3h3.6v3.6h-3.6zM1324.3 359.3h3.6v3.6h-3.6zM1290.3 343.3h3.6v3.6h-3.6zM1317.3 357.3h3.6v3.6h-3.6zM1258.3 339.3h3.6v3.6h-3.6zM1282.3 344.3h3.6v3.6h-3.6zM1276.3 333.3h3.6v3.6h-3.6zM1247.3 318.3h3.6v3.6h-3.6zM1289.3 370.3h3.6v3.6h-3.6zM1272.3 306.3h3.6v3.6h-3.6zM1323.3 306.3h3.6v3.6h-3.6zM1320.3 357.3h3.6v3.6h-3.6zM1284.3 339.3h3.6v3.6h-3.6zM1290.3 315.3h3.6v3.6h-3.6zM1323.3 336.3h3.6v3.6h-3.6zM1303.3 343.3h3.6v3.6h-3.6zM1274.3 313.3h3.6v3.6h-3.6zM1308.3 342.3h3.6v3.6h-3.6zM1344.3 397.3h3.6v3.6h-3.6zM1284.3 364.3h3.6v3.6h-3.6zM1219.3 344.3h3.6v3.6h-3.6zM1255.3 283.3h3.6v3.6h-3.6zM1336.3 323.3h3.6v3.6h-3.6zM1274.3 339.3h3.6v3.6h-3.6zM1229.3 299.3h3.6v3.6h-3.6zM1329.3 344.3h3.6v3.6h-3.6zM1349.3 351.3h3.6v3.6h-3.6zM1347.3 386.3h3.6v3.6h-3.6zM1303.3 342.3h3.6v3.6h-3.6zM1265.3 354.3h3.6v3.6h-3.6zM1259.3 321.3h3.6v3.6h-3.6zM1323.3 373.3h3.6v3.6h-3.6zM1322.3 342.3h3.6v3.6h-3.6zM1255.3 325.3h3.6v3.6h-3.6zM1293.3 372.3h3.6v3.6h-3.6zM1232.3 304.3h3.6v3.6h-3.6zM1312.3 341.3h3.6v3.6h-3.6zM1244.3 312.3h3.6v3.6h-3.6zM1334.3 348.3h3.6v3.6h-3.6zM1267.3 298.3h3.6v3.6h-3.6zM1265.3 275.3h3.6v3.6h-3.6zM1405.3 404.3h3.6v3.6h-3.6zM1339.3 402.3h3.6v3.6h-3.6zM1280.3 350.3h3.6v3.6h-3.6zM1361.3 421.3h3.6v3.6h-3.6zM1333.3 347.3h3.6v3.6h-3.6zM1277.3 334.3h3.6v3.6h-3.6zM1352.3 359.3h3.6v3.6h-3.6zM1323.3 393.3h3.6v3.6h-3.6zM1327.3 364.3h3.6v3.6h-3.6zM1278.3 353.3h3.6v3.6h-3.6zM1289.3 351.3h3.6v3.6h-3.6zM1283.3 322.3h3.6v3.6h-3.6zM1284.3 310.3h3.6v3.6h-3.6zM1332.3 329.3h3.6v3.6h-3.6zM1313.3 343.3h3.6v3.6h-3.6zM1317.3 312.3h3.6v3.6h-3.6zM1300.3 349.3h3.6v3.6h-3.6zM1348.3 405.3h3.6v3.6h-3.6zM1313.3 354.3h3.6v3.6h-3.6zM1302.3 377.3h3.6v3.6h-3.6zM1345.3 392.3h3.6v3.6h-3.6zM1341.3 332.3h3.6v3.6h-3.6zM1333.3 423.3h3.6v3.6h-3.6zM1305.3 335.3h3.6v3.6h-3.6zM1348.3 326.3h3.6v3.6h-3.6zM1342.3 341.3h3.6v3.6h-3.6zM1318.3 327.3h3.6v3.6h-3.6zM1352.3 382.3h3.6v3.6h-3.6zM1281.3 336.3h3.6v3.6h-3.6zM1348.3 420.3h3.6v3.6h-3.6zM1310.3 348.3h3.6v3.6h-3.6zM1353.3 385.3h3.6v3.6h-3.6zM1283.3 391.3h3.6v3.6h-3.6zM1248.3 326.3h3.6v3.6h-3.6zM1357.3 396.3h3.6v3.6h-3.6zM1312.3 383.3h3.6v3.6h-3.6zM1270.3 332.3h3.6v3.6h-3.6zM1302.3 379.3h3.6v3.6h-3.6zM1319.3 365.3h3.6v3.6h-3.6zM1346.3 415.3h3.6v3.6h-3.6zM1264.3 399.3h3.6v3.6h-3.6zM1317.3 348.3h3.6v3.6h-3.6zM1362.3 322.3h3.6v3.6h-3.6zM1264.3 337.3h3.6v3.6h-3.6zM1282.3 308.3h3.6v3.6h-3.6zM1296.3 390.3h3.6v3.6h-3.6zM1307.3 379.3h3.6v3.6h-3.6zM1330.3 370.3h3.6v3.6h-3.6zM1307.3 338.3h3.6v3.6h-3.6zM1313.3 381.3h3.6v3.6h-3.6zM1299.3 350.3h3.6v3.6h-3.6zM1322.3 367.3h3.6v3.6h-3.6zM1316.3 311.3h3.6v3.6h-3.6zM1319.3 319.3h3.6v3.6h-3.6zM1327.3 364.3h3.6v3.6h-3.6zM1291.3 313.3h3.6v3.6h-3.6zM1336.3 362.3h3.6v3.6h-3.6zM1291.3 295.3h3.6v3.6h-3.6zM1357.3 372.3h3.6v3.6h-3.6zM1277.3 369.3h3.6v3.6h-3.6zM1324.3 299.3h3.6v3.6h-3.6zM1302.3 393.3h3.6v3.6h-3.6zM1297.3 330.3h3.6v3.6h-3.6zM1333.3 392.3h3.6v3.6h-3.6zM1276.3 319.3h3.6v3.6h-3.6zM1286.3 329.3h3.6v3.6h-3.6zM1263.3 310.3h3.6v3.6h-3.6zM1327.3 326.3h3.6v3.6h-3.6zM1339.3 388.3h3.6v3.6h-3.6zM1330.3 390.3h3.6v3.6h-3.6zM1277.3 295.3h3.6v3.6h-3.6zM1342.3 376.3h3.6v3.6h-3.6zM1319.3 389.3h3.6v3.6h-3.6zM1261.3 325.3h3.6v3.6h-3.6zM1303.3 326.3h3.6v3.6h-3.6zM1275.3 336.3h3.6v3.6h-3.6zM1316.3 394.3h3.6v3.6h-3.6zM1334.3 410.3h3.6v3.6h-3.6zM1289.3 350.3h3.6v3.6h-3.6zM1302.3 343.3h3.6v3.6h-3.6zM1287.3 378.3h3.6v3.6h-3.6zM1353.3 384.3h3.6v3.6h-3.6zM1215.3 267.3h3.6v3.6h-3.6zM1276.3 381.3h3.6v3.6h-3.6zM1340.3 368.3h3.6v3.6h-3.6zM1328.3 377.3h3.6v3.6h-3.6zM1301.3 348.3h3.6v3.6h-3.6zM1273.3 306.3h3.6v3.6h-3.6zM1298.3 320.3h3.6v3.6h-3.6zM1316.3 352.3h3.6v3.6h-3.6zM1275.3 344.3h3.6v3.6h-3.6zM1278.3 327.3h3.6v3.6h-3.6zM1272.3 351.3h3.6v3.6h-3.6zM1308.3 349.3h3.6v3.6h-3.6zM1296.3 361.3h3.6v3.6h-3.6zM1288.3 294.3h3.6v3.6h-3.6zM1360.3 389.3h3.6v3.6h-3.6zM1328.3 344.3h3.6v3.6h-3.6zM1251.3 290.3h3.6v3.6h-3.6zM1322.3 353.3h3.6v3.6h-3.6zM1297.3 335.3h3.6v3.6h-3.6zM1251.3 364.3h3.6v3.6h-3.6zM1271.3 306.3h3.6v3.6h-3.6zM1265.3 337.3h3.6v3.6h-3.6zM1343.3 381.3h3.6v3.6h-3.6zM1316.3 353.3h3.6v3.6h-3.6zM1347.3 385.3h3.6v3.6h-3.6zM1316.3 331.3h3.6v3.6h-3.6zM1343.3 394.3h3.6v3.6h-3.6zM1287.3 323.3h3.6v3.6h-3.6zM1317.3 326.3h3.6v3.6h-3.6zM1306.3 332.3h3.6v3.6h-3.6zM1268.3 359.3h3.6v3.6h-3.6zM1268.3 281.3h3.6v3.6h-3.6zM1351.3 364.3h3.6v3.6h-3.6zM1338.3 373.3h3.6v3.6h-3.6zM1271.3 288.3h3.6v3.6h-3.6zM1296.3 354.3h3.6v3.6h-3.6zM1281.3 327.3h3.6v3.6h-3.6zM1276.3 331.3h3.6v3.6h-3.6zM1307.3 347.3h3.6v3.6h-3.6zM1235.3 288.3h3.6v3.6h-3.6zM1289.3 329.3h3.6v3.6h-3.6zM1240.3 296.3h3.6v3.6h-3.6zM1250.3 273.3h3.6v3.6h-3.6zM1314.3 331.3h3.6v3.6h-3.6zM1338.3 400.3h3.6v3.6h-3.6zM1238.3 316.3h3.6v3.6h-3.6zM1250.3 332.3h3.6v3.6h-3.6zM1336.3 406.3h3.6v3.6h-3.6zM1342.3 335.3h3.6v3.6h-3.6zM1309.3 312.3h3.6v3.6h-3.6zM1315.3 379.3h3.6v3.6h-3.6zM1295.3 367.3h3.6v3.6h-3.6zM1273.3 318.3h3.6v3.6h-3.6zM1262.3 275.3h3.6v3.6h-3.6zM1303.3 350.3h3.6v3.6h-3.6zM1266.3 304.3h3.6v3.6h-3.6zM1250.3 336.3h3.6v3.6h-3.6zM1319.3 345.3h3.6v3.6h-3.6zM1287.3 328.3h3.6v3.6h-3.6zM1271.3 339.3h3.6v3.6h-3.6zM1332.3 312.3h3.6v3.6h-3.6zM1329.3 341.3h3.6v3.6h-3.6zM1288.3 302.3h3.6v3.6h-3.6zM1283.3 333.3h3.6v3.6h-3.6zM1290.3 411.3h3.6v3.6h-3.6zM1287.3 332.3h3.6v3.6h-3.6zM1289.3 353.3h3.6v3.6h-3.6zM1324.3 382.3h3.6v3.6h-3.6zM1299.3 352.3h3.6v3.6h-3.6zM1222.3 302.3h3.6v3.6h-3.6zM1267.3 334.3h3.6v3.6h-3.6zM1281.3 351.3h3.6v3.6h-3.6zM1290.3 358.3h3.6v3.6h-3.6zM1232.3 333.3h3.6v3.6h-3.6zM1254.3 362.3h3.6v3.6h-3.6zM1252.3 319.3h3.6v3.6h-3.6zM1267.3 331.3h3.6v3.6h-3.6zM1335.3 344.3h3.6v3.6h-3.6zM1311.3 377.3h3.6v3.6h-3.6zM1266.3 349.3h3.6v3.6h-3.6zM1281.3 351.3h3.6v3.6h-3.6zM1265.3 409.3h3.6v3.6h-3.6zM1296.3 290.3h3.6v3.6h-3.6zM1315.3 348.3h3.6v3.6h-3.6zM1247.3 306.3h3.6v3.6h-3.6zM1259.3 325.3h3.6v3.6h-3.6zM1268.3 299.3h3.6v3.6h-3.6zM1306.3 359.3h3.6v3.6h-3.6zM1299.3 355.3h3.6v3.6h-3.6zM1297.3 353.3h3.6v3.6h-3.6zM1340.3 397.3h3.6v3.6h-3.6zM1319.3 400.3h3.6v3.6h-3.6zM1244.3 339.3h3.6v3.6h-3.6zM1236.3 289.3h3.6v3.6h-3.6zM1269.3 342.3h3.6v3.6h-3.6zM1347.3 358.3h3.6v3.6h-3.6zM1239.3 335.3h3.6v3.6h-3.6zM1294.3 305.3h3.6v3.6h-3.6zM1371.3 401.3h3.6v3.6h-3.6zM1305.3 354.3h3.6v3.6h-3.6zM1289.3 356.3h3.6v3.6h-3.6zM1303.3 381.3h3.6v3.6h-3.6zM1249.3 316.3h3.6v3.6h-3.6zM1335.3 337.3h3.6v3.6h-3.6zM1325.3 341.3h3.6v3.6h-3.6zM1332.3 402.3h3.6v3.6h-3.6zM1321.3 360.3h3.6v3.6h-3.6zM1275.3 315.3h3.6v3.6h-3.6zM1309.3 353.3h3.6v3.6h-3.6zM1269.3 332.3h3.6v3.6h-3.6zM1262.3 358.3h3.6v3.6h-3.6zM1328.3 365.3h3.6v3.6h-3.6zM1337.3 364.3h3.6v3.6h-3.6zM1348.3 380.3h3.6v3.6h-3.6zM1257.3 269.3h3.6v3.6h-3.6zM1363.3 341.3h3.6v3.6h-3.6zM1298.3 370.3h3.6v3.6h-3.6zM1290.3 318.3h3.6v3.6h-3.6zM1294.3 349.3h3.6v3.6h-3.6zM1306.3 366.3h3.6v3.6h-3.6zM1264.3 356.3h3.6v3.6h-3.6zM1310.3 375.3h3.6v3.6h-3.6zM1331.3 380.3h3.6v3.6h-3.6zM1261.3 304.3h3.6v3.6h-3.6zM1275.3 305.3h3.6v3.6h-3.6zM1280.3 289.3h3.6v3.6h-3.6zM1301.3 348.3h3.6v3.6h-3.6zM1336.3 356.3h3.6v3.6h-3.6zM1358.3 381.3h3.6v3.6h-3.6zM1290.3 344.3h3.6v3.6h-3.6zM1349.3 405.3h3.6v3.6h-3.6zM1311.3 355.3h3.6v3.6h-3.6zM1286.3 303.3h3.6v3.6h-3.6zM1295.3 335.3h3.6v3.6h-3.6zM1355.3 369.3h3.6v3.6h-3.6zM1345.3 378.3h3.6v3.6h-3.6zM1289.3 359.3h3.6v3.6h-3.6zM1227.3 251.3h3.6v3.6h-3.6zM1361.3 395.3h3.6v3.6h-3.6zM1314.3 351.3h3.6v3.6h-3.6zM1305.3 348.3h3.6v3.6h-3.6zM1297.3 351.3h3.6v3.6h-3.6zM1310.3 369.3h3.6v3.6h-3.6zM1267.3 316.3h3.6v3.6h-3.6zM1356.3 373.3h3.6v3.6h-3.6zM1312.3 360.3h3.6v3.6h-3.6zM1289.3 391.3h3.6v3.6h-3.6zM1321.3 311.3h3.6v3.6h-3.6zM1337.3 337.3h3.6v3.6h-3.6zM1240.3 292.3h3.6v3.6h-3.6zM1328.3 319.3h3.6v3.6h-3.6zM1331.3 343.3h3.6v3.6h-3.6zM1341.3 393.3h3.6v3.6h-3.6zM1275.3 268.3h3.6v3.6h-3.6zM1299.3 288.3h3.6v3.6h-3.6zM1326.3 351.3h3.6v3.6h-3.6zM1340.3 356.3h3.6v3.6h-3.6zM1267.3 340.3h3.6v3.6h-3.6zM1265.3 327.3h3.6v3.6h-3.6zM1296.3 324.3h3.6v3.6h-3.6zM1255.3 336.3h3.6v3.6h-3.6zM1355.3 373.3h3.6v3.6h-3.6zM1269.3 320.3h3.6v3.6h-3.6zM1259.3 270.3h3.6v3.6h-3.6zM1334.3 371.3h3.6v3.6h-3.6zM1288.3 387.3h3.6v3.6h-3.6zM1299.3 345.3h3.6v3.6h-3.6zM1328.3 348.3h3.6v3.6h-3.6zM1310.3 364.3h3.6v3.6h-3.6zM1324.3 371.3h3.6v3.6h-3.6zM1347.3 398.3h3.6v3.6h-3.6zM1324.3 385.3h3.6v3.6h-3.6zM1280.3 311.3h3.6v3.6h-3.6zM1291.3 372.3h3.6v3.6h-3.6zM1257.3 331.3h3.6v3.6h-3.6zM1275.3 320.3h3.6v3.6h-3.6zM1272.3 282.3h3.6v3.6h-3.6zM1347.3 368.3h3.6v3.6h-3.6zM1300.3 349.3h3.6v3.6h-3.6zM1207.3 327.3h3.6v3.6h-3.6zM1354.3 378.3h3.6v3.6h-3.6zM1308.3 370.3h3.6v3.6h-3.6zM1321.3 385.3h3.6v3.6h-3.6zM1323.3 356.3h3.6v3.6h-3.6zM1318.3 327.3h3.6v3.6h-3.6zM1296.3 376.3h3.6v3.6h-3.6zM1346.3 389.3h3.6v3.6h-3.6zM1325.3 349.3h3.6v3.6h-3.6zM1328.3 360.3h3.6v3.6h-3.6zM1269.3 363.3h3.6v3.6h-3.6zM1303.3 357.3h3.6v3.6h-3.6zM1261.3 324.3h3.6v3.6h-3.6zM1312.3 369.3h3.6v3.6h-3.6zM1317.3 370.3h3.6v3.6h-3.6zM1329.3 398.3h3.6v3.6h-3.6zM1336.3 346.3h3.6v3.6h-3.6zM1306.3 386.3h3.6v3.6h-3.6zM1331.3 359.3h3.6v3.6h-3.6zM1300.3 345.3h3.6v3.6h-3.6zM1307.3 298.3h3.6v3.6h-3.6zM1231.3 290.3h3.6v3.6h-3.6zM1252.3 291.3h3.6v3.6h-3.6zM1267.3 329.3h3.6v3.6h-3.6zM1295.3 380.3h3.6v3.6h-3.6zM1302.3 341.3h3.6v3.6h-3.6zM1296.3 339.3h3.6v3.6h-3.6zM1267.3 293.3h3.6v3.6h-3.6zM1343.3 354.3h3.6v3.6h-3.6zM1271.3 296.3h3.6v3.6h-3.6zM1276.3 295.3h3.6v3.6h-3.6zM1273.3 282.3h3.6v3.6h-3.6zM1248.3 370.3h3.6v3.6h-3.6zM1304.3 358.3h3.6v3.6h-3.6zM1341.3 384.3h3.6v3.6h-3.6zM1311.3 343.3h3.6v3.6h-3.6zM1331.3 345.3h3.6v3.6h-3.6zM1290.3 327.3h3.6v3.6h-3.6zM1338.3 370.3h3.6v3.6h-3.6zM1303.3 388.3h3.6v3.6h-3.6zM1348.3 388.3h3.6v3.6h-3.6zM1310.3 342.3h3.6v3.6h-3.6zM1300.3 370.3h3.6v3.6h-3.6zM1316.3 394.3h3.6v3.6h-3.6zM1315.3 329.3h3.6v3.6h-3.6zM1275.3 276.3h3.6v3.6h-3.6zM1314.3 332.3h3.6v3.6h-3.6zM1318.3 348.3h3.6v3.6h-3.6zM1307.3 341.3h3.6v3.6h-3.6zM1294.3 356.3h3.6v3.6h-3.6zM1285.3 333.3h3.6v3.6h-3.6zM1284.3 328.3h3.6v3.6h-3.6zM1282.3 308.3h3.6v3.6h-3.6zM1293.3 358.3h3.6v3.6h-3.6zM1302.3 331.3h3.6v3.6h-3.6zM1263.3 379.3h3.6v3.6h-3.6zM1340.3 342.3h3.6v3.6h-3.6zM1258.3 282.3h3.6v3.6h-3.6zM1334.3 323.3h3.6v3.6h-3.6zM1301.3 320.3h3.6v3.6h-3.6zM1302.3 321.3h3.6v3.6h-3.6zM1293.3 341.3h3.6v3.6h-3.6zM1329.3 400.3h3.6v3.6h-3.6zM1314.3 363.3h3.6v3.6h-3.6zM1352.3 337.3h3.6v3.6h-3.6zM1360.3 376.3h3.6v3.6h-3.6zM1286.3 375.3h3.6v3.6h-3.6zM1286.3 338.3h3.6v3.6h-3.6zM1326.3 396.3h3.6v3.6h-3.6zM1261.3 341.3h3.6v3.6h-3.6zM1312.3 350.3h3.6v3.6h-3.6zM1352.3 443.3h3.6v3.6h-3.6zM1325.3 381.3h3.6v3.6h-3.6zM1275.3 325.3h3.6v3.6h-3.6zM1285.3 350.3h3.6v3.6h-3.6zM1309.3 335.3h3.6v3.6h-3.6zM1294.3 314.3h3.6v3.6h-3.6zM1287.3 339.3h3.6v3.6h-3.6zM1305.3 348.3h3.6v3.6h-3.6zM1305.3 347.3h3.6v3.6h-3.6zM1273.3 352.3h3.6v3.6h-3.6zM1280.3 322.3h3.6v3.6h-3.6zM1332.3 367.3h3.6v3.6h-3.6zM1311.3 399.3h3.6v3.6h-3.6zM1275.3 301.3h3.6v3.6h-3.6zM1368.3 373.3h3.6v3.6h-3.6zM1276.3 388.3h3.6v3.6h-3.6zM1309.3 348.3h3.6v3.6h-3.6zM1232.3 302.3h3.6v3.6h-3.6zM1275.3 347.3h3.6v3.6h-3.6zM1235.3 313.3h3.6v3.6h-3.6zM1350.3 381.3h3.6v3.6h-3.6zM1278.3 268.3h3.6v3.6h-3.6zM1284.3 321.3h3.6v3.6h-3.6zM1268.3 292.3h3.6v3.6h-3.6zM1341.3 408.3h3.6v3.6h-3.6zM1264.3 304.3h3.6v3.6h-3.6zM1273.3 300.3h3.6v3.6h-3.6zM1312.3 368.3h3.6v3.6h-3.6zM1330.3 367.3h3.6v3.6h-3.6zM1310.3 390.3h3.6v3.6h-3.6zM1315.3 365.3h3.6v3.6h-3.6zM1241.3 306.3h3.6v3.6h-3.6zM1289.3 342.3h3.6v3.6h-3.6zM1340.3 356.3h3.6v3.6h-3.6zM1349.3 354.3h3.6v3.6h-3.6zM1353.3 351.3h3.6v3.6h-3.6zM1300.3 292.3h3.6v3.6h-3.6zM1258.3 256.3h3.6v3.6h-3.6zM1318.3 351.3h3.6v3.6h-3.6zM1219.3 307.3h3.6v3.6h-3.6zM1280.3 301.3h3.6v3.6h-3.6zM1288.3 346.3h3.6v3.6h-3.6zM1297.3 347.3h3.6v3.6h-3.6zM1319.3 386.3h3.6v3.6h-3.6zM1255.3 334.3h3.6v3.6h-3.6zM1252.3 293.3h3.6v3.6h-3.6zM1246.3 294.3h3.6v3.6h-3.6zM1337.3 378.3h3.6v3.6h-3.6zM1353.3 363.3h3.6v3.6h-3.6zM1345.3 312.3h3.6v3.6h-3.6zM1322.3 388.3h3.6v3.6h-3.6zM1323.3 346.3h3.6v3.6h-3.6zM1279.3 333.3h3.6v3.6h-3.6zM1367.3 415.3h3.6v3.6h-3.6zM1296.3 297.3h3.6v3.6h-3.6zM1335.3 347.3h3.6v3.6h-3.6zM1333.3 327.3h3.6v3.6h-3.6zM1264.3 334.3h3.6v3.6h-3.6zM1311.3 383.3h3.6v3.6h-3.6zM1305.3 345.3h3.6v3.6h-3.6zM1322.3 355.3h3.6v3.6h-3.6zM1272.3 330.3h3.6v3.6h-3.6zM1347.3 385.3h3.6v3.6h-3.6zM1315.3 383.3h3.6v3.6h-3.6zM1319.3 333.3h3.6v3.6h-3.6zM1290.3 354.3h3.6v3.6h-3.6zM1362.3 391.3h3.6v3.6h-3.6zM1272.3 333.3h3.6v3.6h-3.6zM1303.3 315.3h3.6v3.6h-3.6zM1312.3 425.3h3.6v3.6h-3.6zM1275.3 346.3h3.6v3.6h-3.6zM1336.3 366.3h3.6v3.6h-3.6zM1238.3 320.3h3.6v3.6h-3.6zM1285.3 322.3h3.6v3.6h-3.6zM1312.3 358.3h3.6v3.6h-3.6zM1335.3 405.3h3.6v3.6h-3.6zM1271.3 354.3h3.6v3.6h-3.6zM1298.3 354.3h3.6v3.6h-3.6zM1351.3 375.3h3.6v3.6h-3.6zM1282.3 301.3h3.6v3.6h-3.6zM1361.3 401.3h3.6v3.6h-3.6zM1317.3 344.3h3.6v3.6h-3.6zM1356.3 326.3h3.6v3.6h-3.6zM1336.3 423.3h3.6v3.6h-3.6zM1355.3 394.3h3.6v3.6h-3.6zM1319.3 357.3h3.6v3.6h-3.6zM1294.3 346.3h3.6v3.6h-3.6zM1289.3 339.3h3.6v3.6h-3.6zM1279.3 336.3h3.6v3.6h-3.6zM1319.3 398.3h3.6v3.6h-3.6zM1302.3 365.3h3.6v3.6h-3.6zM1293.3 370.3h3.6v3.6h-3.6zM1280.3 303.3h3.6v3.6h-3.6zM1255.3 300.3h3.6v3.6h-3.6zM1294.3 385.3h3.6v3.6h-3.6zM1314.3 361.3h3.6v3.6h-3.6zM1255.3 304.3h3.6v3.6h-3.6zM1284.3 416.3h3.6v3.6h-3.6zM1347.3 410.3h3.6v3.6h-3.6zM1257.3 311.3h3.6v3.6h-3.6zM1290.3 346.3h3.6v3.6h-3.6zM1253.3 334.3h3.6v3.6h-3.6zM1297.3 295.3h3.6v3.6h-3.6zM1288.3 372.3h3.6v3.6h-3.6zM1327.3 384.3h3.6v3.6h-3.6zM1248.3 339.3h3.6v3.6h-3.6zM1309.3 358.3h3.6v3.6h-3.6zM1258.3 287.3h3.6v3.6h-3.6zM1347.3 395.3h3.6v3.6h-3.6zM1340.3 416.3h3.6v3.6h-3.6zM1286.3 325.3h3.6v3.6h-3.6zM1254.3 356.3h3.6v3.6h-3.6zM1309.3 351.3h3.6v3.6h-3.6zM1285.3 344.3h3.6v3.6h-3.6zM1381.3 382.3h3.6v3.6h-3.6zM1243.3 339.3h3.6v3.6h-3.6zM1299.3 401.3h3.6v3.6h-3.6zM1313.3 377.3h3.6v3.6h-3.6zM1245.3 306.3h3.6v3.6h-3.6zM1285.3 341.3h3.6v3.6h-3.6zM1320.3 363.3h3.6v3.6h-3.6zM1290.3 381.3h3.6v3.6h-3.6zM1329.3 422.3h3.6v3.6h-3.6zM1283.3 318.3h3.6v3.6h-3.6zM1242.3 288.3h3.6v3.6h-3.6zM1298.3 388.3h3.6v3.6h-3.6zM1260.3 283.3h3.6v3.6h-3.6zM1294.3 336.3h3.6v3.6h-3.6zM1316.3 343.3h3.6v3.6h-3.6zM1287.3 331.3h3.6v3.6h-3.6zM1316.3 307.3h3.6v3.6h-3.6zM1319.3 319.3h3.6v3.6h-3.6zM1336.3 352.3h3.6v3.6h-3.6zM1317.3 340.3h3.6v3.6h-3.6zM1317.3 373.3h3.6v3.6h-3.6zM1253.3 347.3h3.6v3.6h-3.6zM1305.3 327.3h3.6v3.6h-3.6zM1311.3 296.3h3.6v3.6h-3.6zM1260.3 349.3h3.6v3.6h-3.6zM1292.3 369.3h3.6v3.6h-3.6zM1309.3 376.3h3.6v3.6h-3.6zM1330.3 379.3h3.6v3.6h-3.6zM1307.3 335.3h3.6v3.6h-3.6zM1317.3 416.3h3.6v3.6h-3.6zM1286.3 356.3h3.6v3.6h-3.6zM1305.3 357.3h3.6v3.6h-3.6zM1340.3 341.3h3.6v3.6h-3.6zM1369.3 377.3h3.6v3.6h-3.6zM1242.3 265.3h3.6v3.6h-3.6zM1300.3 392.3h3.6v3.6h-3.6zM1308.3 338.3h3.6v3.6h-3.6zM1381.3 362.3h3.6v3.6h-3.6zM1305.3 367.3h3.6v3.6h-3.6zM1318.3 370.3h3.6v3.6h-3.6zM1267.3 369.3h3.6v3.6h-3.6zM1305.3 370.3h3.6v3.6h-3.6zM1274.3 286.3h3.6v3.6h-3.6zM1360.3 386.3h3.6v3.6h-3.6zM1288.3 319.3h3.6v3.6h-3.6zM1289.3 343.3h3.6v3.6h-3.6zM1298.3 347.3h3.6v3.6h-3.6zM1300.3 314.3h3.6v3.6h-3.6zM1311.3 372.3h3.6v3.6h-3.6zM1276.3 322.3h3.6v3.6h-3.6zM1304.3 313.3h3.6v3.6h-3.6zM1303.3 336.3h3.6v3.6h-3.6zM1323.3 425.3h3.6v3.6h-3.6zM1294.3 315.3h3.6v3.6h-3.6zM1312.3 355.3h3.6v3.6h-3.6zM1286.3 330.3h3.6v3.6h-3.6zM1292.3 360.3h3.6v3.6h-3.6zM1292.3 348.3h3.6v3.6h-3.6zM1323.3 399.3h3.6v3.6h-3.6zM1320.3 388.3h3.6v3.6h-3.6zM1359.3 376.3h3.6v3.6h-3.6zM1346.3 402.3h3.6v3.6h-3.6zM1264.3 309.3h3.6v3.6h-3.6zM1326.3 297.3h3.6v3.6h-3.6zM1260.3 362.3h3.6v3.6h-3.6zM1313.3 389.3h3.6v3.6h-3.6zM1345.3 343.3h3.6v3.6h-3.6zM1260.3 371.3h3.6v3.6h-3.6zM1238.3 281.3h3.6v3.6h-3.6zM1313.3 327.3h3.6v3.6h-3.6zM1290.3 353.3h3.6v3.6h-3.6zM1314.3 347.3h3.6v3.6h-3.6zM1326.3 375.3h3.6v3.6h-3.6zM1317.3 373.3h3.6v3.6h-3.6zM1290.3 319.3h3.6v3.6h-3.6zM1321.3 339.3h3.6v3.6h-3.6zM1343.3 336.3h3.6v3.6h-3.6zM1297.3 382.3h3.6v3.6h-3.6zM1291.3 327.3h3.6v3.6h-3.6zM1368.3 402.3h3.6v3.6h-3.6zM1322.3 363.3h3.6v3.6h-3.6zM1345.3 414.3h3.6v3.6h-3.6zM1277.3 307.3h3.6v3.6h-3.6zM1213.3 295.3h3.6v3.6h-3.6zM1317.3 408.3h3.6v3.6h-3.6zM1293.3 365.3h3.6v3.6h-3.6zM1288.3 314.3h3.6v3.6h-3.6zM1255.3 300.3h3.6v3.6h-3.6zM1332.3 377.3h3.6v3.6h-3.6zM1248.3 346.3h3.6v3.6h-3.6zM1308.3 323.3h3.6v3.6h-3.6zM1254.3 349.3h3.6v3.6h-3.6zM1300.3 339.3h3.6v3.6h-3.6zM1326.3 312.3h3.6v3.6h-3.6zM1290.3 382.3h3.6v3.6h-3.6zM1274.3 335.3h3.6v3.6h-3.6zM1340.3 385.3h3.6v3.6h-3.6zM1296.3 317.3h3.6v3.6h-3.6zM1287.3 326.3h3.6v3.6h-3.6zM1327.3 325.3h3.6v3.6h-3.6zM1284.3 339.3h3.6v3.6h-3.6zM1335.3 369.3h3.6v3.6h-3.6zM1301.3 356.3h3.6v3.6h-3.6zM1269.3 387.3h3.6v3.6h-3.6zM1249.3 312.3h3.6v3.6h-3.6zM1274.3 342.3h3.6v3.6h-3.6zM1323.3 392.3h3.6v3.6h-3.6zM1286.3 308.3h3.6v3.6h-3.6zM1256.3 329.3h3.6v3.6h-3.6zM1324.3 424.3h3.6v3.6h-3.6zM1314.3 344.3h3.6v3.6h-3.6zM1334.3 335.3h3.6v3.6h-3.6zM1358.3 393.3h3.6v3.6h-3.6zM1312.3 333.3h3.6v3.6h-3.6zM1313.3 386.3h3.6v3.6h-3.6zM1319.3 363.3h3.6v3.6h-3.6zM1291.3 316.3h3.6v3.6h-3.6zM1240.3 347.3h3.6v3.6h-3.6zM1309.3 331.3h3.6v3.6h-3.6zM1310.3 356.3h3.6v3.6h-3.6zM1278.3 304.3h3.6v3.6h-3.6zM1343.3 371.3h3.6v3.6h-3.6zM1254.3 288.3h3.6v3.6h-3.6zM1261.3 321.3h3.6v3.6h-3.6zM1275.3 358.3h3.6v3.6h-3.6zM1289.3 310.3h3.6v3.6h-3.6zM1300.3 321.3h3.6v3.6h-3.6zM1275.3 313.3h3.6v3.6h-3.6zM1247.3 297.3h3.6v3.6h-3.6zM1307.3 357.3h3.6v3.6h-3.6zM1305.3 371.3h3.6v3.6h-3.6zM1327.3 393.3h3.6v3.6h-3.6zM1265.3 335.3h3.6v3.6h-3.6zM1303.3 335.3h3.6v3.6h-3.6zM1353.3 358.3h3.6v3.6h-3.6zM1299.3 393.3h3.6v3.6h-3.6zM1302.3 348.3h3.6v3.6h-3.6zM1270.3 365.3h3.6v3.6h-3.6zM1290.3 356.3h3.6v3.6h-3.6zM1294.3 366.3h3.6v3.6h-3.6zM1293.3 311.3h3.6v3.6h-3.6zM1245.3 378.3h3.6v3.6h-3.6zM1277.3 363.3h3.6v3.6h-3.6zM1380.3 351.3h3.6v3.6h-3.6zM1271.3 343.3h3.6v3.6h-3.6zM1269.3 306.3h3.6v3.6h-3.6zM1259.3 313.3h3.6v3.6h-3.6zM1308.3 368.3h3.6v3.6h-3.6zM1278.3 327.3h3.6v3.6h-3.6zM1291.3 344.3h3.6v3.6h-3.6zM1288.3 353.3h3.6v3.6h-3.6zM1227.3 307.3h3.6v3.6h-3.6zM1312.3 372.3h3.6v3.6h-3.6zM1286.3 359.3h3.6v3.6h-3.6zM1312.3 362.3h3.6v3.6h-3.6zM1271.3 281.3h3.6v3.6h-3.6zM1358.3 386.3h3.6v3.6h-3.6zM1317.3 314.3h3.6v3.6h-3.6zM1301.3 336.3h3.6v3.6h-3.6zM1282.3 388.3h3.6v3.6h-3.6zM1242.3 307.3h3.6v3.6h-3.6zM1298.3 400.3h3.6v3.6h-3.6zM1317.3 348.3h3.6v3.6h-3.6zM1288.3 240.3h3.6v3.6h-3.6zM1324.3 369.3h3.6v3.6h-3.6zM1344.3 351.3h3.6v3.6h-3.6zM1288.3 353.3h3.6v3.6h-3.6zM1309.3 348.3h3.6v3.6h-3.6zM1310.3 354.3h3.6v3.6h-3.6zM1281.3 364.3h3.6v3.6h-3.6zM1247.3 289.3h3.6v3.6h-3.6zM1232.3 340.3h3.6v3.6h-3.6zM1286.3 362.3h3.6v3.6h-3.6zM1331.3 365.3h3.6v3.6h-3.6zM1288.3 341.3h3.6v3.6h-3.6zM1313.3 324.3h3.6v3.6h-3.6zM1333.3 336.3h3.6v3.6h-3.6zM1291.3 347.3h3.6v3.6h-3.6zM1278.3 360.3h3.6v3.6h-3.6zM1273.3 352.3h3.6v3.6h-3.6zM1302.3 369.3h3.6v3.6h-3.6zM1354.3 357.3h3.6v3.6h-3.6zM1205.3 207.3h3.6v3.6h-3.6z" fill="none" stroke="#c60cb8" stroke-width="1.100"/><polygon points="1148,192.5 1380,271.5 1456.5,508 1224.5,430.5" fill="none" stroke="#f03030" stroke-width="1.100"/><polygon points="1149.5,207 1379,271 1469,523 1227,430.5" fill="none" stroke="#2a2ae8" stroke-width="1.200"/><path d="M1145.5 190.0l5 5m0-5l-5 5M1145 192.5h6" stroke="#f03030" stroke-width="1" fill="none"/><path d="M1377.5 269.0l5 5m0-5l-5 5M1377 271.5h6" stroke="#f03030" stroke-width="1" fill="none"/><path d="M1454.0 505.5l5 5m0-5l-5 5M1453.5 508h6" stroke="#f03030" stroke-width="1" fill="none"/><path d="M1222.0 428.0l5 5m0-5l-5 5M1221.5 430.5h6" stroke="#f03030" stroke-width="1" fill="none"/><path d="M1147.0 204.5l5 5m0-5l-5 5M1146.5 207h6" stroke="#1a1ae0" stroke-width="1" fill="none"/><path d="M1376.5 268.5l5 5m0-5l-5 5M1376 271h6" stroke="#1a1ae0" stroke-width="1" fill="none"/><path d="M1466.5 520.5l5 5m0-5l-5 5M1466 523h6" stroke="#1a1ae0" stroke-width="1" fill="none"/><path d="M1224.5 428.0l5 5m0-5l-5 5M1224 430.5h6" stroke="#1a1ae0" stroke-width="1" fill="none"/><path d="M1299.5 347.5l5 5m0-5l-5 5M1299.0 350h6" stroke="#f03030" stroke-width="1" fill="none"/><path d="M1300.0 347.5l5 5m0-5l-5 5M1299.5 350h6" stroke="#1a1ae0" stroke-width="1" fill="none"/><rect x="1467.0" y="206.0" width="4" height="4" fill="none" stroke="#2020d0" stroke-width="1"/><text x="1312.5" y="120" text-anchor="middle" fill="#000" font-size="10" >W/L=1.5/1.5,T=27@Vbs/Vdd/Vlin=0/2/0.05</text><text x="1098.5" y="147" text-anchor="end" fill="#000" font-size="10" >-0.08</text><text x="1098.5" y="242.5" text-anchor="end" fill="#000" font-size="10" >-0.14</text><text x="1098.5" y="344.5" text-anchor="end" fill="#000" font-size="10" >-0.20</text><text x="1098.5" y="446.5" text-anchor="end" fill="#000" font-size="10" >-0.25</text><text x="1098.5" y="545.5" text-anchor="end" fill="#000" font-size="10" >-0.31</text><text x="1103" y="570" text-anchor="middle" fill="#000" font-size="10" >0.19</text><text x="1206" y="570" text-anchor="middle" fill="#000" font-size="10" >0.24</text><text x="1302" y="570" text-anchor="middle" fill="#000" font-size="10" >0.30</text><text x="1397" y="570" text-anchor="middle" fill="#000" font-size="10" >0.35</text><text x="1502" y="570" text-anchor="middle" fill="#000" font-size="10" >0.40</text><text x="1303.0" y="583" text-anchor="middle" fill="#000" font-size="10" >vthlin_n</text><text transform="translate(1068,351) rotate(-90)" text-anchor="middle" font-size="10" fill="#000">vthlin_p</text><text x="1563" y="133" text-anchor="end" fill="#000" font-size="10" >Coef</text><text x="1554" y="149" text-anchor="end" fill="#2a2ae8" font-size="10" >Sim:</text><rect x="1555" y="142" width="5.500" height="6.500" fill="none" stroke="#2a2ae8" stroke-width="1"/><text x="1563" y="167" text-anchor="end" fill="#f02020" font-size="10" >Mea:-0.595</text></svg>
<div class="a" style="left:1577px;top:79px;width:20px;height:512px;background:#f0f0f0;"></div>
<div class="a" style="left:1597px;top:79px;width:3px;height:821px;background:#fbfbfb;"></div>
<svg class="a" style="left:1578px;top:82px;width:20px;height:4px" viewBox="0 0 20 4"><path d="M1 2h18" stroke="#b8b8b8" stroke-width="1" stroke-dasharray="1 2"/></svg>
<svg class="a" style="left:1580px;top:96px;width:11px;height:11px" viewBox="0 0 11 11"><rect x="0" y="0" width="1" height="10" fill="#b4c4e4"/><rect x="2" y="0" width="1" height="10" fill="#b4c4e4"/><rect x="4" y="0" width="1" height="10" fill="#b4c4e4"/><rect x="6" y="0" width="1" height="10" fill="#b4c4e4"/><rect x="8" y="0" width="1" height="10" fill="#b4c4e4"/></svg>
<svg class="a" style="left:1580px;top:115px;width:11px;height:11px" viewBox="0 0 11 11"><rect x="0" y="0" width="10" height="1" fill="#b4c4e4"/><rect x="0" y="2" width="10" height="1" fill="#b4c4e4"/><rect x="0" y="4" width="10" height="1" fill="#b4c4e4"/><rect x="0" y="6" width="10" height="1" fill="#b4c4e4"/><rect x="0" y="8" width="10" height="1" fill="#b4c4e4"/></svg>
<svg class="a" style="left:1579px;top:136px;width:14px;height:8px" viewBox="0 0 14 8"><path d="M4 1L1 4l3 3" fill="none" stroke="#9aa8c8" stroke-width="1"/><path d="M9 1l3 3-3 3" fill="none" stroke="#b0b090" stroke-width="1"/></svg>
<svg class="a" style="left:1581px;top:152px;width:8px;height:16px" viewBox="0 0 8 16"><path d="M1 4.500L4 1.500l3 3" fill="none" stroke="#b0b090" stroke-width="1"/><path d="M1 11l3 3 3-3" fill="none" stroke="#9aa8c8" stroke-width="1"/></svg>
<div class="a" style="left:527px;top:592px;width:49.5px;height:20px;background:#ffffff;border-right:1px solid #e2e2e2;border-bottom:1px solid #e6e6e6;box-sizing:border-box;"></div>
<div class="t" style="left:533px;top:596.00px;height:15px;line-height:15px;font-size:11px;color:#000;letter-spacing:-0.335px;">Browser</div>
<div class="t" style="left:530px;top:615.00px;height:15px;line-height:15px;font-size:11px;color:#000;letter-spacing:-0.262px;">No message available</div>
<div class="a" style="left:1517px;top:614px;width:49px;height:16px;background:#e1e1e1;border:1px solid #adadad;box-sizing:border-box;"></div>
<div class="t" style="left:1531px;top:614.50px;height:15px;line-height:15px;font-size:11px;color:#000;letter-spacing:-0.157px;">Stop</div>
<div class="a" style="left:1571px;top:614px;width:25px;height:16px;background:#e9e9e9;border:1px solid #d0d0d0;box-sizing:border-box;"></div>
<div class="a" style="left:0px;top:631px;width:1597px;height:2.1px;background:#ffffff;"></div>
<div class="a" style="left:0px;top:633.1px;width:1597px;height:1.5px;background:#a6a6a6;"></div>
<div class="a" style="left:0px;top:634.6px;width:1597px;height:1.1px;background:#ececec;"></div>
<div class="a" style="left:0px;top:635.7px;width:1597px;height:264.3px;background:#f0f0f0;"></div>
<div class="a" style="left:138.3px;top:635.6px;width:1457.2px;height:2px;background:#6c6c6c;"></div>
<div class="a" style="left:557.5px;top:635.6px;width:1px;height:2px;background:#f8f8f8;"></div>
<div class="a" style="left:0px;top:633px;width:1.5px;height:267px;background:#5a5a5a;"></div>
<div class="a" style="left:3px;top:636px;width:133px;height:238px;background:#f0f0f0;border:1px solid #a8a8a8;box-sizing:border-box;"></div>
<div class="a" style="left:4px;top:639.5px;width:15.5px;height:15.5px;background:#f2f2f2;border:1px solid #cfcfcf;box-sizing:border-box;"></div>
<div class="a" style="left:20.5px;top:639.5px;width:15.5px;height:15.5px;background:#f2f2f2;border:1px solid #cfcfcf;box-sizing:border-box;"></div>
<div class="a" style="left:37px;top:639.5px;width:15.5px;height:15.5px;background:#f2f2f2;border:1px solid #cfcfcf;box-sizing:border-box;"></div>
<div class="a" style="left:54px;top:639.5px;width:15.5px;height:15.5px;background:#f2f2f2;border:1px solid #cfcfcf;box-sizing:border-box;"></div>
<div class="a" style="left:70.5px;top:639.5px;width:15.5px;height:15.5px;background:#f2f2f2;border:1px solid #cfcfcf;box-sizing:border-box;"></div>
<svg class="a" style="left:5px;top:640.5px;width:15.5px;height:15.5px" viewBox="0 0 18 18"><path d="M11.90 7.00 L13.57 7.62 L13.06 9.62 L11.29 9.36 L10.46 10.46 L11.21 12.09 L9.43 13.14 L8.37 11.71 L7.00 11.90 L6.38 13.57 L4.38 13.06 L4.64 11.29 L3.54 10.46 L1.91 11.21 L0.86 9.43 L2.29 8.37 L2.10 7.00 L0.43 6.38 L0.94 4.38 L2.71 4.64 L3.54 3.54 L2.79 1.91 L4.57 0.86 L5.63 2.29 L7.00 2.10 L7.62 0.43 L9.62 0.94 L9.36 2.71 L10.46 3.54 L12.09 2.79 L13.14 4.57 L11.71 5.63Z" fill="url(#ggear)" stroke="#8a8ac0" stroke-width="0.600" stroke-linejoin="round"/><circle cx="7" cy="7" r="2.300" fill="#f6f6fc" stroke="#8a8ac0" stroke-width="0.600"/><path transform="translate(7.5,8) scale(0.8)" d="M0 3h3v-3h3v3h3v3h-3v3h-3v-3h-3z" fill="url(#ggrn)" stroke="#1a8a1a" stroke-width="0.7" stroke-linejoin="round"/></svg>
<svg class="a" style="left:22px;top:641px;width:13px;height:13px" viewBox="0 0 13 13"><path d="M2.500 2v9.500h4M2.500 5h4M2.500 8h4" fill="none" stroke="#7a7a7a" stroke-width="0.900"/><rect x="1" y="0.500" width="3" height="3" fill="#3a7ad8"/><rect x="7" y="3.500" width="2.500" height="2.500" fill="#4ac84a"/><rect x="7" y="6.800" width="2.500" height="2.500" fill="#e84a4a"/><rect x="7" y="10" width="2.500" height="2.500" fill="#f0d040"/></svg>
<svg class="a" style="left:39.5px;top:640.5px;width:15.5px;height:15.5px" viewBox="0 0 18 18"><path d="M11.90 7.00 L13.57 7.62 L13.06 9.62 L11.29 9.36 L10.46 10.46 L11.21 12.09 L9.43 13.14 L8.37 11.71 L7.00 11.90 L6.38 13.57 L4.38 13.06 L4.64 11.29 L3.54 10.46 L1.91 11.21 L0.86 9.43 L2.29 8.37 L2.10 7.00 L0.43 6.38 L0.94 4.38 L2.71 4.64 L3.54 3.54 L2.79 1.91 L4.57 0.86 L5.63 2.29 L7.00 2.10 L7.62 0.43 L9.62 0.94 L9.36 2.71 L10.46 3.54 L12.09 2.79 L13.14 4.57 L11.71 5.63Z" fill="url(#ggear)" stroke="#8a8ac0" stroke-width="0.600" stroke-linejoin="round"/><circle cx="7" cy="7" r="2.300" fill="#f6f6fc" stroke="#8a8ac0" stroke-width="0.600"/><path transform="translate(0,8) scale(0.85)" d="M1.5 0L4 2.5L6.5 0L8 1.5L5.5 4L8 6.5L6.5 8L4 5.5L1.5 8L0 6.5L2.5 4L0 1.5z" fill="url(#gred)" stroke="#e0401a" stroke-width="0.5" stroke-linejoin="round"/></svg>
<svg class="a" style="left:55px;top:640.5px;width:16px;height:15px" viewBox="0 0 16 15"><path d="M11.60 4.80 L12.48 5.12 L12.18 6.15 L11.26 5.94 L10.81 6.44 L11.11 7.33 L10.11 7.74 L9.71 6.89 L9.03 6.85 L8.52 7.64 L7.59 7.11 L8.00 6.26 L7.61 5.71 L6.67 5.80 L6.50 4.75 L7.42 4.54 L7.61 3.89 L6.95 3.22 L7.67 2.42 L8.41 3.01 L9.03 2.75 L9.15 1.82 L10.22 1.89 L10.22 2.83 L10.81 3.16 L11.61 2.67 L12.23 3.55 L11.49 4.13Z" fill="#cfcfea" stroke="#a4a4d0" stroke-width="0.500"/><circle cx="9.500" cy="4.800" r="0.900" fill="#f4f4fa"/><path d="M8.00 9.50 L9.18 9.90 L8.85 11.17 L7.63 10.95 L7.12 11.62 L7.68 12.74 L6.55 13.41 L5.84 12.38 L5.00 12.50 L4.60 13.68 L3.33 13.35 L3.55 12.13 L2.88 11.62 L1.76 12.18 L1.09 11.05 L2.12 10.34 L2.00 9.50 L0.82 9.10 L1.15 7.83 L2.37 8.05 L2.88 7.38 L2.32 6.26 L3.45 5.59 L4.16 6.62 L5.00 6.50 L5.40 5.32 L6.67 5.65 L6.45 6.87 L7.12 7.38 L8.24 6.82 L8.91 7.95 L7.88 8.66Z" fill="#c2c2e4" stroke="#9a9acc" stroke-width="0.500"/><circle cx="5" cy="9.500" r="1.300" fill="#f0f0fa" stroke="#a0a0d0" stroke-width="0.400"/></svg>
<svg class="a" style="left:72px;top:641px;width:13px;height:13px" viewBox="0 0 13 13"><path d="M6.500 1.500L2 6.500l4.500 5M11.500 1.500L7 6.500l4.500 5" fill="none" stroke="#1a62d8" stroke-width="2.200"/></svg>
<div class="a" style="left:4px;top:658.5px;width:131px;height:215px;background:#ffffff;border:1px solid #828790;box-sizing:border-box;"></div>
<svg class="a" style="left:6px;top:659px;width:12px;height:15px" viewBox="0 0 12 15"><path d="M0.500 0.500h8.500v5.500h1.500v8h-10z" fill="#ffe08a" stroke="#f0d070" stroke-width="0.600"/></svg>
<div class="t" style="left:21px;top:659.00px;height:15px;line-height:15px;font-size:11px;color:#000;letter-spacing:0.010px;">integrate.lib</div>
<div class="a" style="left:11px;top:673px;width:1px;height:180px;border-left:1px dotted #bcbcbc;"></div>
<div class="a" style="left:16px;top:680.5px;width:5px;height:1px;border-top:1px dotted #bcbcbc;"></div>
<svg class="a" style="left:7px;top:676.0px;width:9px;height:9px" viewBox="0 0 9 9"><rect x="0.500" y="0.500" width="8" height="8" rx="1" fill="#fff" stroke="#9a9a9a" stroke-width="1"/><path d="M2 4.500h5" stroke="#3a5a9a" stroke-width="1"/><path d="M4.500 2v5" stroke="#3a5a9a" stroke-width="1"/></svg>
<svg class="a" style="left:20px;top:673.0px;width:16px;height:15px" viewBox="0 0 16 15"><path d="M11.60 4.80 L12.48 5.12 L12.18 6.15 L11.26 5.94 L10.81 6.44 L11.11 7.33 L10.11 7.74 L9.71 6.89 L9.03 6.85 L8.52 7.64 L7.59 7.11 L8.00 6.26 L7.61 5.71 L6.67 5.80 L6.50 4.75 L7.42 4.54 L7.61 3.89 L6.95 3.22 L7.67 2.42 L8.41 3.01 L9.03 2.75 L9.15 1.82 L10.22 1.89 L10.22 2.83 L10.81 3.16 L11.61 2.67 L12.23 3.55 L11.49 4.13Z" fill="#cfcfea" stroke="#a4a4d0" stroke-width="0.500"/><circle cx="9.500" cy="4.800" r="0.900" fill="#f4f4fa"/><path d="M8.00 9.50 L9.18 9.90 L8.85 11.17 L7.63 10.95 L7.12 11.62 L7.68 12.74 L6.55 13.41 L5.84 12.38 L5.00 12.50 L4.60 13.68 L3.33 13.35 L3.55 12.13 L2.88 11.62 L1.76 12.18 L1.09 11.05 L2.12 10.34 L2.00 9.50 L0.82 9.10 L1.15 7.83 L2.37 8.05 L2.88 7.38 L2.32 6.26 L3.45 5.59 L4.16 6.62 L5.00 6.50 L5.40 5.32 L6.67 5.65 L6.45 6.87 L7.12 7.38 L8.24 6.82 L8.91 7.95 L7.88 8.66Z" fill="#c2c2e4" stroke="#9a9acc" stroke-width="0.500"/><circle cx="5" cy="9.500" r="1.300" fill="#f0f0fa" stroke="#a0a0d0" stroke-width="0.400"/></svg>
<div class="t" style="left:35px;top:673.00px;height:15px;line-height:15px;font-size:11px;color:#000;letter-spacing:-0.404px;">FFG.nmos_mac</div>
<div class="a" style="left:16px;top:694.5px;width:5px;height:1px;border-top:1px dotted #bcbcbc;"></div>
<svg class="a" style="left:7px;top:690.0px;width:9px;height:9px" viewBox="0 0 9 9"><rect x="0.500" y="0.500" width="8" height="8" rx="1" fill="#fff" stroke="#9a9a9a" stroke-width="1"/><path d="M2 4.500h5" stroke="#3a5a9a" stroke-width="1"/></svg>
<div class="a" style="left:34px;top:687px;width:79px;height:14px;background:#0078d7;"></div>
<svg class="a" style="left:20px;top:687.0px;width:16px;height:15px" viewBox="0 0 16 15"><path d="M11.60 4.80 L12.48 5.12 L12.18 6.15 L11.26 5.94 L10.81 6.44 L11.11 7.33 L10.11 7.74 L9.71 6.89 L9.03 6.85 L8.52 7.64 L7.59 7.11 L8.00 6.26 L7.61 5.71 L6.67 5.80 L6.50 4.75 L7.42 4.54 L7.61 3.89 L6.95 3.22 L7.67 2.42 L8.41 3.01 L9.03 2.75 L9.15 1.82 L10.22 1.89 L10.22 2.83 L10.81 3.16 L11.61 2.67 L12.23 3.55 L11.49 4.13Z" fill="#cfcfea" stroke="#a4a4d0" stroke-width="0.500"/><circle cx="9.500" cy="4.800" r="0.900" fill="#f4f4fa"/><path d="M8.00 9.50 L9.18 9.90 L8.85 11.17 L7.63 10.95 L7.12 11.62 L7.68 12.74 L6.55 13.41 L5.84 12.38 L5.00 12.50 L4.60 13.68 L3.33 13.35 L3.55 12.13 L2.88 11.62 L1.76 12.18 L1.09 11.05 L2.12 10.34 L2.00 9.50 L0.82 9.10 L1.15 7.83 L2.37 8.05 L2.88 7.38 L2.32 6.26 L3.45 5.59 L4.16 6.62 L5.00 6.50 L5.40 5.32 L6.67 5.65 L6.45 6.87 L7.12 7.38 L8.24 6.82 L8.91 7.95 L7.88 8.66Z" fill="#c2c2e4" stroke="#9a9acc" stroke-width="0.500"/><circle cx="5" cy="9.500" r="1.300" fill="#f0f0fa" stroke="#a0a0d0" stroke-width="0.400"/><path d="M6.500 9l2 3 3.500-5.500" fill="none" stroke="#e8241a" stroke-width="1.500"/></svg>
<div class="t" style="left:35px;top:687.00px;height:15px;line-height:15px;font-size:11px;color:#fff;letter-spacing:-0.424px;">SSG.nmos_mac</div>
<div class="a" style="left:16px;top:750.5px;width:5px;height:1px;border-top:1px dotted #bcbcbc;"></div>
<svg class="a" style="left:7px;top:746.0px;width:9px;height:9px" viewBox="0 0 9 9"><rect x="0.500" y="0.500" width="8" height="8" rx="1" fill="#fff" stroke="#9a9a9a" stroke-width="1"/><path d="M2 4.500h5" stroke="#3a5a9a" stroke-width="1"/><path d="M4.500 2v5" stroke="#3a5a9a" stroke-width="1"/></svg>
<svg class="a" style="left:20px;top:743.0px;width:16px;height:15px" viewBox="0 0 16 15"><path d="M11.60 4.80 L12.48 5.12 L12.18 6.15 L11.26 5.94 L10.81 6.44 L11.11 7.33 L10.11 7.74 L9.71 6.89 L9.03 6.85 L8.52 7.64 L7.59 7.11 L8.00 6.26 L7.61 5.71 L6.67 5.80 L6.50 4.75 L7.42 4.54 L7.61 3.89 L6.95 3.22 L7.67 2.42 L8.41 3.01 L9.03 2.75 L9.15 1.82 L10.22 1.89 L10.22 2.83 L10.81 3.16 L11.61 2.67 L12.23 3.55 L11.49 4.13Z" fill="#cfcfea" stroke="#a4a4d0" stroke-width="0.500"/><circle cx="9.500" cy="4.800" r="0.900" fill="#f4f4fa"/><path d="M8.00 9.50 L9.18 9.90 L8.85 11.17 L7.63 10.95 L7.12 11.62 L7.68 12.74 L6.55 13.41 L5.84 12.38 L5.00 12.50 L4.60 13.68 L3.33 13.35 L3.55 12.13 L2.88 11.62 L1.76 12.18 L1.09 11.05 L2.12 10.34 L2.00 9.50 L0.82 9.10 L1.15 7.83 L2.37 8.05 L2.88 7.38 L2.32 6.26 L3.45 5.59 L4.16 6.62 L5.00 6.50 L5.40 5.32 L6.67 5.65 L6.45 6.87 L7.12 7.38 L8.24 6.82 L8.91 7.95 L7.88 8.66Z" fill="#c2c2e4" stroke="#9a9acc" stroke-width="0.500"/><circle cx="5" cy="9.500" r="1.300" fill="#f0f0fa" stroke="#a0a0d0" stroke-width="0.400"/></svg>
<div class="t" style="left:35px;top:743.00px;height:15px;line-height:15px;font-size:11px;color:#000;letter-spacing:-0.372px;">FSG.nmos_mac</div>
<div class="a" style="left:16px;top:764.5px;width:5px;height:1px;border-top:1px dotted #bcbcbc;"></div>
<svg class="a" style="left:7px;top:760.0px;width:9px;height:9px" viewBox="0 0 9 9"><rect x="0.500" y="0.500" width="8" height="8" rx="1" fill="#fff" stroke="#9a9a9a" stroke-width="1"/><path d="M2 4.500h5" stroke="#3a5a9a" stroke-width="1"/><path d="M4.500 2v5" stroke="#3a5a9a" stroke-width="1"/></svg>
<svg class="a" style="left:20px;top:757.0px;width:16px;height:15px" viewBox="0 0 16 15"><path d="M11.60 4.80 L12.48 5.12 L12.18 6.15 L11.26 5.94 L10.81 6.44 L11.11 7.33 L10.11 7.74 L9.71 6.89 L9.03 6.85 L8.52 7.64 L7.59 7.11 L8.00 6.26 L7.61 5.71 L6.67 5.80 L6.50 4.75 L7.42 4.54 L7.61 3.89 L6.95 3.22 L7.67 2.42 L8.41 3.01 L9.03 2.75 L9.15 1.82 L10.22 1.89 L10.22 2.83 L10.81 3.16 L11.61 2.67 L12.23 3.55 L11.49 4.13Z" fill="#cfcfea" stroke="#a4a4d0" stroke-width="0.500"/><circle cx="9.500" cy="4.800" r="0.900" fill="#f4f4fa"/><path d="M8.00 9.50 L9.18 9.90 L8.85 11.17 L7.63 10.95 L7.12 11.62 L7.68 12.74 L6.55 13.41 L5.84 12.38 L5.00 12.50 L4.60 13.68 L3.33 13.35 L3.55 12.13 L2.88 11.62 L1.76 12.18 L1.09 11.05 L2.12 10.34 L2.00 9.50 L0.82 9.10 L1.15 7.83 L2.37 8.05 L2.88 7.38 L2.32 6.26 L3.45 5.59 L4.16 6.62 L5.00 6.50 L5.40 5.32 L6.67 5.65 L6.45 6.87 L7.12 7.38 L8.24 6.82 L8.91 7.95 L7.88 8.66Z" fill="#c2c2e4" stroke="#9a9acc" stroke-width="0.500"/><circle cx="5" cy="9.500" r="1.300" fill="#f0f0fa" stroke="#a0a0d0" stroke-width="0.400"/></svg>
<div class="t" style="left:35px;top:757.00px;height:15px;line-height:15px;font-size:11px;color:#000;letter-spacing:-0.372px;">SFG.nmos_mac</div>
<div class="a" style="left:16px;top:778.5px;width:5px;height:1px;border-top:1px dotted #bcbcbc;"></div>
<svg class="a" style="left:7px;top:774.0px;width:9px;height:9px" viewBox="0 0 9 9"><rect x="0.500" y="0.500" width="8" height="8" rx="1" fill="#fff" stroke="#9a9a9a" stroke-width="1"/><path d="M2 4.500h5" stroke="#3a5a9a" stroke-width="1"/><path d="M4.500 2v5" stroke="#3a5a9a" stroke-width="1"/></svg>
<svg class="a" style="left:20px;top:771.0px;width:16px;height:15px" viewBox="0 0 16 15"><path d="M11.60 4.80 L12.48 5.12 L12.18 6.15 L11.26 5.94 L10.81 6.44 L11.11 7.33 L10.11 7.74 L9.71 6.89 L9.03 6.85 L8.52 7.64 L7.59 7.11 L8.00 6.26 L7.61 5.71 L6.67 5.80 L6.50 4.75 L7.42 4.54 L7.61 3.89 L6.95 3.22 L7.67 2.42 L8.41 3.01 L9.03 2.75 L9.15 1.82 L10.22 1.89 L10.22 2.83 L10.81 3.16 L11.61 2.67 L12.23 3.55 L11.49 4.13Z" fill="#cfcfea" stroke="#a4a4d0" stroke-width="0.500"/><circle cx="9.500" cy="4.800" r="0.900" fill="#f4f4fa"/><path d="M8.00 9.50 L9.18 9.90 L8.85 11.17 L7.63 10.95 L7.12 11.62 L7.68 12.74 L6.55 13.41 L5.84 12.38 L5.00 12.50 L4.60 13.68 L3.33 13.35 L3.55 12.13 L2.88 11.62 L1.76 12.18 L1.09 11.05 L2.12 10.34 L2.00 9.50 L0.82 9.10 L1.15 7.83 L2.37 8.05 L2.88 7.38 L2.32 6.26 L3.45 5.59 L4.16 6.62 L5.00 6.50 L5.40 5.32 L6.67 5.65 L6.45 6.87 L7.12 7.38 L8.24 6.82 L8.91 7.95 L7.88 8.66Z" fill="#c2c2e4" stroke="#9a9acc" stroke-width="0.500"/><circle cx="5" cy="9.500" r="1.300" fill="#f0f0fa" stroke="#a0a0d0" stroke-width="0.400"/></svg>
<div class="t" style="left:35px;top:771.00px;height:15px;line-height:15px;font-size:11px;color:#000;letter-spacing:-0.321px;">TTG.nmos_mac</div>
<div class="a" style="left:16px;top:792.5px;width:5px;height:1px;border-top:1px dotted #bcbcbc;"></div>
<svg class="a" style="left:7px;top:788.0px;width:9px;height:9px" viewBox="0 0 9 9"><rect x="0.500" y="0.500" width="8" height="8" rx="1" fill="#fff" stroke="#9a9a9a" stroke-width="1"/><path d="M2 4.500h5" stroke="#3a5a9a" stroke-width="1"/><path d="M4.500 2v5" stroke="#3a5a9a" stroke-width="1"/></svg>
<svg class="a" style="left:20px;top:785.0px;width:16px;height:15px" viewBox="0 0 16 15"><path d="M11.60 4.80 L12.48 5.12 L12.18 6.15 L11.26 5.94 L10.81 6.44 L11.11 7.33 L10.11 7.74 L9.71 6.89 L9.03 6.85 L8.52 7.64 L7.59 7.11 L8.00 6.26 L7.61 5.71 L6.67 5.80 L6.50 4.75 L7.42 4.54 L7.61 3.89 L6.95 3.22 L7.67 2.42 L8.41 3.01 L9.03 2.75 L9.15 1.82 L10.22 1.89 L10.22 2.83 L10.81 3.16 L11.61 2.67 L12.23 3.55 L11.49 4.13Z" fill="#cfcfea" stroke="#a4a4d0" stroke-width="0.500"/><circle cx="9.500" cy="4.800" r="0.900" fill="#f4f4fa"/><path d="M8.00 9.50 L9.18 9.90 L8.85 11.17 L7.63 10.95 L7.12 11.62 L7.68 12.74 L6.55 13.41 L5.84 12.38 L5.00 12.50 L4.60 13.68 L3.33 13.35 L3.55 12.13 L2.88 11.62 L1.76 12.18 L1.09 11.05 L2.12 10.34 L2.00 9.50 L0.82 9.10 L1.15 7.83 L2.37 8.05 L2.88 7.38 L2.32 6.26 L3.45 5.59 L4.16 6.62 L5.00 6.50 L5.40 5.32 L6.67 5.65 L6.45 6.87 L7.12 7.38 L8.24 6.82 L8.91 7.95 L7.88 8.66Z" fill="#c2c2e4" stroke="#9a9acc" stroke-width="0.500"/><circle cx="5" cy="9.500" r="1.300" fill="#f0f0fa" stroke="#a0a0d0" stroke-width="0.400"/></svg>
<div class="t" style="left:35px;top:785.00px;height:15px;line-height:15px;font-size:11px;color:#000;letter-spacing:-0.404px;">FFG.pmos_mac</div>
<div class="a" style="left:16px;top:806.5px;width:5px;height:1px;border-top:1px dotted #bcbcbc;"></div>
<svg class="a" style="left:7px;top:802.0px;width:9px;height:9px" viewBox="0 0 9 9"><rect x="0.500" y="0.500" width="8" height="8" rx="1" fill="#fff" stroke="#9a9a9a" stroke-width="1"/><path d="M2 4.500h5" stroke="#3a5a9a" stroke-width="1"/><path d="M4.500 2v5" stroke="#3a5a9a" stroke-width="1"/></svg>
<svg class="a" style="left:20px;top:799.0px;width:16px;height:15px" viewBox="0 0 16 15"><path d="M11.60 4.80 L12.48 5.12 L12.18 6.15 L11.26 5.94 L10.81 6.44 L11.11 7.33 L10.11 7.74 L9.71 6.89 L9.03 6.85 L8.52 7.64 L7.59 7.11 L8.00 6.26 L7.61 5.71 L6.67 5.80 L6.50 4.75 L7.42 4.54 L7.61 3.89 L6.95 3.22 L7.67 2.42 L8.41 3.01 L9.03 2.75 L9.15 1.82 L10.22 1.89 L10.22 2.83 L10.81 3.16 L11.61 2.67 L12.23 3.55 L11.49 4.13Z" fill="#cfcfea" stroke="#a4a4d0" stroke-width="0.500"/><circle cx="9.500" cy="4.800" r="0.900" fill="#f4f4fa"/><path d="M8.00 9.50 L9.18 9.90 L8.85 11.17 L7.63 10.95 L7.12 11.62 L7.68 12.74 L6.55 13.41 L5.84 12.38 L5.00 12.50 L4.60 13.68 L3.33 13.35 L3.55 12.13 L2.88 11.62 L1.76 12.18 L1.09 11.05 L2.12 10.34 L2.00 9.50 L0.82 9.10 L1.15 7.83 L2.37 8.05 L2.88 7.38 L2.32 6.26 L3.45 5.59 L4.16 6.62 L5.00 6.50 L5.40 5.32 L6.67 5.65 L6.45 6.87 L7.12 7.38 L8.24 6.82 L8.91 7.95 L7.88 8.66Z" fill="#c2c2e4" stroke="#9a9acc" stroke-width="0.500"/><circle cx="5" cy="9.500" r="1.300" fill="#f0f0fa" stroke="#a0a0d0" stroke-width="0.400"/></svg>
<div class="t" style="left:35px;top:799.00px;height:15px;line-height:15px;font-size:11px;color:#000;letter-spacing:-0.424px;">SSG.pmos_mac</div>
<div class="a" style="left:16px;top:820.5px;width:5px;height:1px;border-top:1px dotted #bcbcbc;"></div>
<svg class="a" style="left:7px;top:816.0px;width:9px;height:9px" viewBox="0 0 9 9"><rect x="0.500" y="0.500" width="8" height="8" rx="1" fill="#fff" stroke="#9a9a9a" stroke-width="1"/><path d="M2 4.500h5" stroke="#3a5a9a" stroke-width="1"/><path d="M4.500 2v5" stroke="#3a5a9a" stroke-width="1"/></svg>
<svg class="a" style="left:20px;top:813.0px;width:16px;height:15px" viewBox="0 0 16 15"><path d="M11.60 4.80 L12.48 5.12 L12.18 6.15 L11.26 5.94 L10.81 6.44 L11.11 7.33 L10.11 7.74 L9.71 6.89 L9.03 6.85 L8.52 7.64 L7.59 7.11 L8.00 6.26 L7.61 5.71 L6.67 5.80 L6.50 4.75 L7.42 4.54 L7.61 3.89 L6.95 3.22 L7.67 2.42 L8.41 3.01 L9.03 2.75 L9.15 1.82 L10.22 1.89 L10.22 2.83 L10.81 3.16 L11.61 2.67 L12.23 3.55 L11.49 4.13Z" fill="#cfcfea" stroke="#a4a4d0" stroke-width="0.500"/><circle cx="9.500" cy="4.800" r="0.900" fill="#f4f4fa"/><path d="M8.00 9.50 L9.18 9.90 L8.85 11.17 L7.63 10.95 L7.12 11.62 L7.68 12.74 L6.55 13.41 L5.84 12.38 L5.00 12.50 L4.60 13.68 L3.33 13.35 L3.55 12.13 L2.88 11.62 L1.76 12.18 L1.09 11.05 L2.12 10.34 L2.00 9.50 L0.82 9.10 L1.15 7.83 L2.37 8.05 L2.88 7.38 L2.32 6.26 L3.45 5.59 L4.16 6.62 L5.00 6.50 L5.40 5.32 L6.67 5.65 L6.45 6.87 L7.12 7.38 L8.24 6.82 L8.91 7.95 L7.88 8.66Z" fill="#c2c2e4" stroke="#9a9acc" stroke-width="0.500"/><circle cx="5" cy="9.500" r="1.300" fill="#f0f0fa" stroke="#a0a0d0" stroke-width="0.400"/></svg>
<div class="t" style="left:35px;top:813.00px;height:15px;line-height:15px;font-size:11px;color:#000;letter-spacing:-0.372px;">FSG.pmos_mac</div>
<div class="a" style="left:16px;top:834.5px;width:5px;height:1px;border-top:1px dotted #bcbcbc;"></div>
<svg class="a" style="left:7px;top:830.0px;width:9px;height:9px" viewBox="0 0 9 9"><rect x="0.500" y="0.500" width="8" height="8" rx="1" fill="#fff" stroke="#9a9a9a" stroke-width="1"/><path d="M2 4.500h5" stroke="#3a5a9a" stroke-width="1"/><path d="M4.500 2v5" stroke="#3a5a9a" stroke-width="1"/></svg>
<svg class="a" style="left:20px;top:827.0px;width:16px;height:15px" viewBox="0 0 16 15"><path d="M11.60 4.80 L12.48 5.12 L12.18 6.15 L11.26 5.94 L10.81 6.44 L11.11 7.33 L10.11 7.74 L9.71 6.89 L9.03 6.85 L8.52 7.64 L7.59 7.11 L8.00 6.26 L7.61 5.71 L6.67 5.80 L6.50 4.75 L7.42 4.54 L7.61 3.89 L6.95 3.22 L7.67 2.42 L8.41 3.01 L9.03 2.75 L9.15 1.82 L10.22 1.89 L10.22 2.83 L10.81 3.16 L11.61 2.67 L12.23 3.55 L11.49 4.13Z" fill="#cfcfea" stroke="#a4a4d0" stroke-width="0.500"/><circle cx="9.500" cy="4.800" r="0.900" fill="#f4f4fa"/><path d="M8.00 9.50 L9.18 9.90 L8.85 11.17 L7.63 10.95 L7.12 11.62 L7.68 12.74 L6.55 13.41 L5.84 12.38 L5.00 12.50 L4.60 13.68 L3.33 13.35 L3.55 12.13 L2.88 11.62 L1.76 12.18 L1.09 11.05 L2.12 10.34 L2.00 9.50 L0.82 9.10 L1.15 7.83 L2.37 8.05 L2.88 7.38 L2.32 6.26 L3.45 5.59 L4.16 6.62 L5.00 6.50 L5.40 5.32 L6.67 5.65 L6.45 6.87 L7.12 7.38 L8.24 6.82 L8.91 7.95 L7.88 8.66Z" fill="#c2c2e4" stroke="#9a9acc" stroke-width="0.500"/><circle cx="5" cy="9.500" r="1.300" fill="#f0f0fa" stroke="#a0a0d0" stroke-width="0.400"/></svg>
<div class="t" style="left:35px;top:827.00px;height:15px;line-height:15px;font-size:11px;color:#000;letter-spacing:-0.372px;">SFG.pmos_mac</div>
<div class="a" style="left:16px;top:848.5px;width:5px;height:1px;border-top:1px dotted #bcbcbc;"></div>
<svg class="a" style="left:7px;top:844.0px;width:9px;height:9px" viewBox="0 0 9 9"><rect x="0.500" y="0.500" width="8" height="8" rx="1" fill="#fff" stroke="#9a9a9a" stroke-width="1"/><path d="M2 4.500h5" stroke="#3a5a9a" stroke-width="1"/><path d="M4.500 2v5" stroke="#3a5a9a" stroke-width="1"/></svg>
<svg class="a" style="left:20px;top:841.0px;width:16px;height:15px" viewBox="0 0 16 15"><path d="M11.60 4.80 L12.48 5.12 L12.18 6.15 L11.26 5.94 L10.81 6.44 L11.11 7.33 L10.11 7.74 L9.71 6.89 L9.03 6.85 L8.52 7.64 L7.59 7.11 L8.00 6.26 L7.61 5.71 L6.67 5.80 L6.50 4.75 L7.42 4.54 L7.61 3.89 L6.95 3.22 L7.67 2.42 L8.41 3.01 L9.03 2.75 L9.15 1.82 L10.22 1.89 L10.22 2.83 L10.81 3.16 L11.61 2.67 L12.23 3.55 L11.49 4.13Z" fill="#cfcfea" stroke="#a4a4d0" stroke-width="0.500"/><circle cx="9.500" cy="4.800" r="0.900" fill="#f4f4fa"/><path d="M8.00 9.50 L9.18 9.90 L8.85 11.17 L7.63 10.95 L7.12 11.62 L7.68 12.74 L6.55 13.41 L5.84 12.38 L5.00 12.50 L4.60 13.68 L3.33 13.35 L3.55 12.13 L2.88 11.62 L1.76 12.18 L1.09 11.05 L2.12 10.34 L2.00 9.50 L0.82 9.10 L1.15 7.83 L2.37 8.05 L2.88 7.38 L2.32 6.26 L3.45 5.59 L4.16 6.62 L5.00 6.50 L5.40 5.32 L6.67 5.65 L6.45 6.87 L7.12 7.38 L8.24 6.82 L8.91 7.95 L7.88 8.66Z" fill="#c2c2e4" stroke="#9a9acc" stroke-width="0.500"/><circle cx="5" cy="9.500" r="1.300" fill="#f0f0fa" stroke="#a0a0d0" stroke-width="0.400"/></svg>
<div class="t" style="left:35px;top:841.00px;height:15px;line-height:15px;font-size:11px;color:#000;letter-spacing:-0.237px;">TTG.pmos_mac</div>
<div class="a" style="left:27px;top:701px;width:1px;height:36px;border-left:1px dotted #bcbcbc;"></div>
<div class="a" style="left:27px;top:708.5px;width:9px;height:1px;border-top:1px dotted #bcbcbc;"></div>
<svg class="a" style="left:36.5px;top:702.0px;width:13.5px;height:13.5px" viewBox="0 0 18 18"><path d="M11.90 7.00 L13.57 7.62 L13.06 9.62 L11.29 9.36 L10.46 10.46 L11.21 12.09 L9.43 13.14 L8.37 11.71 L7.00 11.90 L6.38 13.57 L4.38 13.06 L4.64 11.29 L3.54 10.46 L1.91 11.21 L0.86 9.43 L2.29 8.37 L2.10 7.00 L0.43 6.38 L0.94 4.38 L2.71 4.64 L3.54 3.54 L2.79 1.91 L4.57 0.86 L5.63 2.29 L7.00 2.10 L7.62 0.43 L9.62 0.94 L9.36 2.71 L10.46 3.54 L12.09 2.79 L13.14 4.57 L11.71 5.63Z" fill="url(#ggear)" stroke="#8a8ac0" stroke-width="0.600" stroke-linejoin="round"/><circle cx="7" cy="7" r="2.300" fill="#f6f6fc" stroke="#8a8ac0" stroke-width="0.600"/><path d="M6.500 7l2.500 3 3.500-6" fill="none" stroke="#e8241a" stroke-width="1.500"/></svg>
<div class="t" style="left:51px;top:701.00px;height:15px;line-height:15px;font-size:11px;color:#000;letter-spacing:-0.236px;">param</div>
<div class="a" style="left:27px;top:722.5px;width:9px;height:1px;border-top:1px dotted #bcbcbc;"></div>
<svg class="a" style="left:36.5px;top:716.0px;width:13.5px;height:13.5px" viewBox="0 0 18 18"><path d="M11.90 7.00 L13.57 7.62 L13.06 9.62 L11.29 9.36 L10.46 10.46 L11.21 12.09 L9.43 13.14 L8.37 11.71 L7.00 11.90 L6.38 13.57 L4.38 13.06 L4.64 11.29 L3.54 10.46 L1.91 11.21 L0.86 9.43 L2.29 8.37 L2.10 7.00 L0.43 6.38 L0.94 4.38 L2.71 4.64 L3.54 3.54 L2.79 1.91 L4.57 0.86 L5.63 2.29 L7.00 2.10 L7.62 0.43 L9.62 0.94 L9.36 2.71 L10.46 3.54 L12.09 2.79 L13.14 4.57 L11.71 5.63Z" fill="url(#ggear)" stroke="#8a8ac0" stroke-width="0.600" stroke-linejoin="round"/><circle cx="7" cy="7" r="2.300" fill="#f6f6fc" stroke="#8a8ac0" stroke-width="0.600"/></svg>
<div class="t" style="left:51px;top:715.00px;height:15px;line-height:15px;font-size:11px;color:#000;letter-spacing:-0.306px;">nmos_mac@para</div>
<div class="a" style="left:27px;top:736.5px;width:9px;height:1px;border-top:1px dotted #bcbcbc;"></div>
<svg class="a" style="left:36.5px;top:730.0px;width:13.5px;height:13.5px" viewBox="0 0 18 18"><path d="M11.90 7.00 L13.57 7.62 L13.06 9.62 L11.29 9.36 L10.46 10.46 L11.21 12.09 L9.43 13.14 L8.37 11.71 L7.00 11.90 L6.38 13.57 L4.38 13.06 L4.64 11.29 L3.54 10.46 L1.91 11.21 L0.86 9.43 L2.29 8.37 L2.10 7.00 L0.43 6.38 L0.94 4.38 L2.71 4.64 L3.54 3.54 L2.79 1.91 L4.57 0.86 L5.63 2.29 L7.00 2.10 L7.62 0.43 L9.62 0.94 L9.36 2.71 L10.46 3.54 L12.09 2.79 L13.14 4.57 L11.71 5.63Z" fill="url(#ggear)" stroke="#8a8ac0" stroke-width="0.600" stroke-linejoin="round"/><circle cx="7" cy="7" r="2.300" fill="#f6f6fc" stroke="#8a8ac0" stroke-width="0.600"/></svg>
<div class="t" style="left:51px;top:729.00px;height:15px;line-height:15px;font-size:11px;color:#000;letter-spacing:-0.308px;">nmos_mac@nch</div>
<div class="a" style="left:134px;top:659px;width:1px;height:214px;background:#828790;"></div>
<div class="a" style="left:135px;top:659px;width:1px;height:214px;background:#f0f0f0;"></div>
<div class="a" style="left:5px;top:855.5px;width:129px;height:17px;background:#f0f0f0;"></div>
<div class="a" style="left:22px;top:856px;width:86px;height:16px;background:#cdcdcd;"></div>
<svg class="a" style="left:7px;top:858px;width:10px;height:12px" viewBox="0 0 10 12"><path d="M7 1.500L2.500 6l4.500 4.500" fill="none" stroke="#404040" stroke-width="1.400"/></svg>
<svg class="a" style="left:120px;top:858px;width:10px;height:12px" viewBox="0 0 10 12"><path d="M2.500 1.500L7 6l-4.500 4.500" fill="none" stroke="#404040" stroke-width="1.400"/></svg>
<div class="a" style="left:138.3px;top:637px;width:368.2px;height:236px;background:#f0f0f0;border:1px solid #a0a0a0;border-left:1.800px solid #6a6a6a;border-top:none;box-sizing:border-box;"></div>
<div class="t" style="left:144px;top:645.50px;height:15px;line-height:15px;font-size:11px;color:#000;letter-spacing:0.004px;">Search :</div>
<div class="a" style="left:191px;top:641px;width:158px;height:25px;background:#ffffff;border:1px solid #c8c8c8;border-top-color:#b0b0b0;box-sizing:border-box;"></div>
<div class="a" style="left:370px;top:642px;width:20px;height:20px;background:#f2f2f2;border:1px solid #cfcfcf;box-sizing:border-box;"></div>
<div class="a" style="left:394px;top:642px;width:20px;height:20px;background:#f2f2f2;border:1px solid #cfcfcf;box-sizing:border-box;"></div>
<div class="a" style="left:418px;top:642px;width:20px;height:20px;background:#f2f2f2;border:1px solid #cfcfcf;box-sizing:border-box;"></div>
<div class="a" style="left:457px;top:642px;width:20px;height:20px;background:#f2f2f2;border:1px solid #cfcfcf;box-sizing:border-box;"></div>
<div class="a" style="left:481px;top:642px;width:20px;height:20px;background:#f2f2f2;border:1px solid #cfcfcf;box-sizing:border-box;"></div>
<svg class="a" style="left:372px;top:644px;width:16px;height:16px" viewBox="0 0 16 16"><path d="M2 2.500L8 7.500l6-5M2 7.500L8 12.500l6-5" fill="none" stroke="#1a62d8" stroke-width="2.600"/></svg>
<svg class="a" style="left:396px;top:644px;width:16px;height:16px" viewBox="0 0 16 16"><rect x="5" y="1" width="6.500" height="6.500" rx="1" fill="#4a8ae8" stroke="#2a5ab8" stroke-width="0.600"/><rect x="1" y="8" width="6.500" height="6.500" rx="1" fill="#3ac83a" stroke="#1a8a1a" stroke-width="0.600"/><rect x="8.500" y="8" width="6.500" height="6.500" rx="1" fill="#e8384a" stroke="#b01a2a" stroke-width="0.600"/></svg>
<svg class="a" style="left:421px;top:645px;width:14px;height:14px" viewBox="0 0 14 14"><path d="M1 7l6-5.500v3.500h6v4h-6v3.500z" fill="#8a8a8a" stroke="#6a6a6a" stroke-width="0.600"/></svg>
<div class="t" style="left:444.5px;top:645.50px;height:15px;line-height:15px;font-size:11px;color:#2020e0;">0</div>
<svg class="a" style="left:460px;top:645px;width:14px;height:14px" viewBox="0 0 14 14"><path d="M13 7l-6-5.500v3.500h-6v4h6v3.500z" fill="#8a8a8a" stroke="#6a6a6a" stroke-width="0.600"/></svg>
<svg class="a" style="left:483px;top:644px;width:16px;height:16px" viewBox="0 0 16 16"><path d="M3 1.500l9 6.500-4 0.500 0.500 3.500-2.500-2-1.500 4-1.500-3.500z" fill="url(#ggrn)" stroke="#2aa82a" stroke-width="0.700"/><path transform="translate(8,8.5) scale(0.7)" d="M0 3h3v-3h3v3h3v3h-3v3h-3v-3h-3z" fill="url(#ggrn)" stroke="#1a8a1a" stroke-width="0.7" stroke-linejoin="round"/></svg>
<div class="a" style="left:141px;top:669px;width:346px;height:25px;background:#ffffff;"></div>
<div class="a" style="left:197px;top:669px;width:1px;height:25px;background:#e5e5e5;"></div>
<div class="a" style="left:254px;top:669px;width:1px;height:25px;background:#e5e5e5;"></div>
<div class="a" style="left:313px;top:669px;width:1px;height:25px;background:#e5e5e5;"></div>
<div class="a" style="left:371px;top:669px;width:1px;height:25px;background:#e5e5e5;"></div>
<div class="a" style="left:429px;top:669px;width:1px;height:25px;background:#e5e5e5;"></div>
<div class="a" style="left:487px;top:669px;width:1px;height:25px;background:#e5e5e5;"></div>
<div class="t" style="left:145px;top:674.50px;height:15px;line-height:15px;font-size:11px;color:#000;letter-spacing:-0.436px;">Check</div>
<div class="t" style="left:202px;top:674.50px;height:15px;line-height:15px;font-size:11px;color:#000;letter-spacing:-0.086px;">Name</div>
<div class="t" style="left:260px;top:674.50px;height:15px;line-height:15px;font-size:11px;color:#000;letter-spacing:-0.064px;">Value</div>
<div class="t" style="left:318px;top:674.50px;height:15px;line-height:15px;font-size:11px;color:#000;letter-spacing:-0.192px;">Lower</div>
<div class="t" style="left:376px;top:674.50px;height:15px;line-height:15px;font-size:11px;color:#000;letter-spacing:-0.392px;">Upper</div>
<div class="t" style="left:434px;top:674.50px;height:15px;line-height:15px;font-size:11px;color:#000;letter-spacing:-0.157px;">Step</div>
<div class="a" style="left:141px;top:693px;width:346px;height:179px;background:#ffffff;"></div>
<div class="a" style="left:163px;top:693px;width:13.5px;height:14px;background:#ffffff;border-left:1.500px solid #3a3a3a;border-right:1.500px solid #3a3a3a;box-sizing:border-box;"></div>
<div class="t" style="left:199px;top:692.80px;height:15px;line-height:15px;font-size:11px;color:#000;letter-spacing:-0.120px;">globalflag</div>
<div class="t" style="left:256px;top:692.80px;height:15px;line-height:15px;font-size:11px;color:#000;">1</div>
<div class="t" style="left:315px;top:692.80px;height:15px;line-height:15px;font-size:11px;color:#000;letter-spacing:0.003px;">0.5</div>
<div class="t" style="left:373px;top:692.80px;height:15px;line-height:15px;font-size:11px;color:#000;letter-spacing:0.003px;">1.5</div>
<div class="t" style="left:431px;top:692.80px;height:15px;line-height:15px;font-size:11px;color:#000;letter-spacing:0.003px;">0.1</div>
<div class="a" style="left:163px;top:707px;width:13.5px;height:14px;background:#ffffff;border-left:1.500px solid #3a3a3a;border-right:1.500px solid #3a3a3a;box-sizing:border-box;"></div>
<div class="t" style="left:199px;top:706.80px;height:15px;line-height:15px;font-size:11px;color:#000;letter-spacing:-0.011px;">mismatc...</div>
<div class="t" style="left:256px;top:706.80px;height:15px;line-height:15px;font-size:11px;color:#000;">0</div>
<div class="t" style="left:315px;top:706.80px;height:15px;line-height:15px;font-size:11px;color:#000;letter-spacing:0.109px;">-1</div>
<div class="t" style="left:373px;top:706.80px;height:15px;line-height:15px;font-size:11px;color:#000;">1</div>
<div class="t" style="left:431px;top:706.80px;height:15px;line-height:15px;font-size:11px;color:#000;letter-spacing:-0.259px;">1E-3</div>
<div class="a" style="left:163px;top:721px;width:13.5px;height:14px;background:#ffffff;border-left:1.500px solid #3a3a3a;border-right:1.500px solid #3a3a3a;box-sizing:border-box;"></div>
<svg class="a" style="left:163.5px;top:721.8px;width:13px;height:13px" viewBox="0 0 13 13"><path d="M2.500 6.500L5.200 9.200L10.500 3.200" fill="none" stroke="#222" stroke-width="1.400"/></svg>
<div class="t" style="left:199px;top:720.80px;height:15px;line-height:15px;font-size:11px;color:#000;letter-spacing:-0.049px;">dvth0_n</div>
<div class="t" style="left:256px;top:720.80px;height:15px;line-height:15px;font-size:11px;color:#000;letter-spacing:-0.066px;">0.09494</div>
<div class="t" style="left:315px;top:720.80px;height:15px;line-height:15px;font-size:11px;color:#000;letter-spacing:-0.066px;">0.04297</div>
<div class="t" style="left:373px;top:720.80px;height:15px;line-height:15px;font-size:11px;color:#000;letter-spacing:-0.066px;">0.12891</div>
<div class="t" style="left:431px;top:720.80px;height:15px;line-height:15px;font-size:11px;color:#000;letter-spacing:-0.259px;">1E-3</div>
<div class="a" style="left:163px;top:735px;width:13.5px;height:14px;background:#ffffff;border-left:1.500px solid #3a3a3a;border-right:1.500px solid #3a3a3a;box-sizing:border-box;"></div>
<div class="t" style="left:199px;top:734.80px;height:15px;line-height:15px;font-size:11px;color:#000;letter-spacing:-0.238px;">du0_n</div>
<div class="t" style="left:256px;top:734.80px;height:15px;line-height:15px;font-size:11px;color:#000;letter-spacing:-0.082px;">-1.7E-3</div>
<div class="t" style="left:315px;top:734.80px;height:15px;line-height:15px;font-size:11px;color:#000;letter-spacing:-0.086px;">-2.55E-3</div>
<div class="t" style="left:373px;top:734.80px;height:15px;line-height:15px;font-size:11px;color:#000;letter-spacing:-0.082px;">-8.5E-4</div>
<div class="t" style="left:431px;top:734.80px;height:15px;line-height:15px;font-size:11px;color:#000;letter-spacing:-0.259px;">1E-4</div>
<div class="a" style="left:163px;top:749px;width:13.5px;height:14px;background:#ffffff;border-left:1.500px solid #3a3a3a;border-right:1.500px solid #3a3a3a;box-sizing:border-box;"></div>
<div class="t" style="left:199px;top:748.80px;height:15px;line-height:15px;font-size:11px;color:#000;letter-spacing:0.010px;">dvsat_n</div>
<div class="t" style="left:256px;top:748.80px;height:15px;line-height:15px;font-size:11px;color:#000;letter-spacing:-0.143px;">-8.085E3</div>
<div class="t" style="left:315px;top:748.80px;height:15px;line-height:15px;font-size:11px;color:#000;letter-spacing:-0.138px;">-1.21275E4</div>
<div class="t" style="left:373px;top:748.80px;height:15px;line-height:15px;font-size:11px;color:#000;letter-spacing:-0.140px;">-4.0425E3</div>
<div class="t" style="left:431px;top:748.80px;height:15px;line-height:15px;font-size:11px;color:#000;letter-spacing:-0.118px;">100</div>
<div class="a" style="left:141px;top:763px;width:346px;height:14px;background:#0078d7;"></div>
<div class="a" style="left:163px;top:763px;width:13.5px;height:14px;background:#ffffff;border-left:1.500px solid #3a3a3a;border-right:1.500px solid #3a3a3a;box-sizing:border-box;"></div>
<svg class="a" style="left:163.5px;top:763.8px;width:13px;height:13px" viewBox="0 0 13 13"><path d="M2.500 6.500L5.200 9.200L10.500 3.200" fill="none" stroke="#222" stroke-width="1.400"/></svg>
<div class="t" style="left:199px;top:762.80px;height:15px;line-height:15px;font-size:11px;color:#fff;letter-spacing:-0.049px;">dvth0_p</div>
<div class="t" style="left:256px;top:762.80px;height:15px;line-height:15px;font-size:11px;color:#fff;letter-spacing:-0.016px;">-0.09977</div>
<div class="t" style="left:315px;top:762.80px;height:15px;line-height:15px;font-size:11px;color:#fff;letter-spacing:-0.027px;">-0.134655</div>
<div class="t" style="left:373px;top:762.80px;height:15px;line-height:15px;font-size:11px;color:#fff;letter-spacing:-0.027px;">-0.044885</div>
<div class="t" style="left:431px;top:762.80px;height:15px;line-height:15px;font-size:11px;color:#fff;letter-spacing:-0.259px;">1E-3</div>
<div class="a" style="left:163px;top:777px;width:13.5px;height:14px;background:#ffffff;border-left:1.500px solid #3a3a3a;border-right:1.500px solid #3a3a3a;box-sizing:border-box;"></div>
<div class="t" style="left:199px;top:776.80px;height:15px;line-height:15px;font-size:11px;color:#000;letter-spacing:-0.238px;">du0_p</div>
<div class="t" style="left:256px;top:776.80px;height:15px;line-height:15px;font-size:11px;color:#000;letter-spacing:-0.082px;">-8.4E-4</div>
<div class="t" style="left:315px;top:776.80px;height:15px;line-height:15px;font-size:11px;color:#000;letter-spacing:-0.086px;">-1.26E-3</div>
<div class="t" style="left:373px;top:776.80px;height:15px;line-height:15px;font-size:11px;color:#000;letter-spacing:-0.082px;">-4.2E-4</div>
<div class="t" style="left:431px;top:776.80px;height:15px;line-height:15px;font-size:11px;color:#000;letter-spacing:-0.259px;">1E-5</div>
<div class="a" style="left:163px;top:791px;width:13.5px;height:14px;background:#ffffff;border-left:1.500px solid #3a3a3a;border-right:1.500px solid #3a3a3a;box-sizing:border-box;"></div>
<div class="t" style="left:199px;top:790.80px;height:15px;line-height:15px;font-size:11px;color:#000;letter-spacing:0.010px;">dvsat_p</div>
<div class="t" style="left:256px;top:790.80px;height:15px;line-height:15px;font-size:11px;color:#000;letter-spacing:-0.143px;">-4.792E3</div>
<div class="t" style="left:315px;top:790.80px;height:15px;line-height:15px;font-size:11px;color:#000;letter-spacing:-0.143px;">-7.188E3</div>
<div class="t" style="left:373px;top:790.80px;height:15px;line-height:15px;font-size:11px;color:#000;letter-spacing:-0.143px;">-2.396E3</div>
<div class="t" style="left:431px;top:790.80px;height:15px;line-height:15px;font-size:11px;color:#000;letter-spacing:-0.118px;">100</div>
<div class="a" style="left:163px;top:805px;width:13.5px;height:14px;background:#ffffff;border-left:1.500px solid #3a3a3a;border-right:1.500px solid #3a3a3a;box-sizing:border-box;"></div>
<div class="t" style="left:199px;top:804.80px;height:15px;line-height:15px;font-size:11px;color:#000;letter-spacing:-0.062px;">vth0_mis...</div>
<div class="t" style="left:256px;top:804.80px;height:15px;line-height:15px;font-size:11px;color:#000;letter-spacing:0.003px;">0.1</div>
<div class="t" style="left:315px;top:804.80px;height:15px;line-height:15px;font-size:11px;color:#000;letter-spacing:-0.027px;">0.05</div>
<div class="t" style="left:373px;top:804.80px;height:15px;line-height:15px;font-size:11px;color:#000;letter-spacing:-0.027px;">0.15</div>
<div class="t" style="left:431px;top:804.80px;height:15px;line-height:15px;font-size:11px;color:#000;letter-spacing:-0.027px;">0.01</div>
<div class="a" style="left:163px;top:819px;width:13.5px;height:14px;background:#ffffff;border-left:1.500px solid #3a3a3a;border-right:1.500px solid #3a3a3a;box-sizing:border-box;"></div>
<div class="t" style="left:199px;top:818.80px;height:15px;line-height:15px;font-size:11px;color:#000;letter-spacing:-0.062px;">vth0_mis...</div>
<div class="t" style="left:256px;top:818.80px;height:15px;line-height:15px;font-size:11px;color:#000;letter-spacing:-0.073px;">0.073818</div>
<div class="t" style="left:315px;top:818.80px;height:15px;line-height:15px;font-size:11px;color:#000;letter-spacing:-0.073px;">0.036909</div>
<div class="t" style="left:373px;top:818.80px;height:15px;line-height:15px;font-size:11px;color:#000;letter-spacing:0.029px;">0.110727</div>
<div class="t" style="left:431px;top:818.80px;height:15px;line-height:15px;font-size:11px;color:#000;letter-spacing:-0.259px;">1E-3</div>
<div class="a" style="left:163px;top:833px;width:13.5px;height:14px;background:#ffffff;border-left:1.500px solid #3a3a3a;border-right:1.500px solid #3a3a3a;box-sizing:border-box;"></div>
<div class="t" style="left:199px;top:832.80px;height:15px;line-height:15px;font-size:11px;color:#000;letter-spacing:-0.075px;">u0_misn...</div>
<div class="t" style="left:256px;top:832.80px;height:15px;line-height:15px;font-size:11px;color:#000;letter-spacing:0.003px;">0.1</div>
<div class="t" style="left:315px;top:832.80px;height:15px;line-height:15px;font-size:11px;color:#000;letter-spacing:-0.027px;">0.05</div>
<div class="t" style="left:373px;top:832.80px;height:15px;line-height:15px;font-size:11px;color:#000;letter-spacing:-0.027px;">0.15</div>
<div class="t" style="left:431px;top:832.80px;height:15px;line-height:15px;font-size:11px;color:#000;letter-spacing:-0.027px;">0.01</div>
<div class="a" style="left:163px;top:847px;width:13.5px;height:14px;background:#ffffff;border-left:1.500px solid #3a3a3a;border-right:1.500px solid #3a3a3a;box-sizing:border-box;"></div>
<div class="t" style="left:199px;top:846.80px;height:15px;line-height:15px;font-size:11px;color:#000;letter-spacing:-0.075px;">u0_misn...</div>
<div class="t" style="left:256px;top:846.80px;height:15px;line-height:15px;font-size:11px;color:#000;letter-spacing:0.055px;">-4.02895...</div>
<div class="t" style="left:315px;top:846.80px;height:15px;line-height:15px;font-size:11px;color:#000;letter-spacing:0.055px;">-6.04343...</div>
<div class="t" style="left:373px;top:846.80px;height:15px;line-height:15px;font-size:11px;color:#000;letter-spacing:0.055px;">-2.01447...</div>
<div class="t" style="left:431px;top:846.80px;height:15px;line-height:15px;font-size:11px;color:#000;letter-spacing:-0.259px;">1E-4</div>
<div class="a" style="left:163px;top:861px;width:13.5px;height:14px;background:#ffffff;border-left:1.500px solid #3a3a3a;border-right:1.500px solid #3a3a3a;box-sizing:border-box;"></div>
<div class="t" style="left:199px;top:860.80px;height:15px;line-height:15px;font-size:11px;color:#000;letter-spacing:-0.006px;">vsat_mis...</div>
<div class="t" style="left:256px;top:860.80px;height:15px;line-height:15px;font-size:11px;color:#000;letter-spacing:0.003px;">0.1</div>
<div class="t" style="left:315px;top:860.80px;height:15px;line-height:15px;font-size:11px;color:#000;letter-spacing:-0.027px;">0.05</div>
<div class="t" style="left:373px;top:860.80px;height:15px;line-height:15px;font-size:11px;color:#000;letter-spacing:-0.027px;">0.15</div>
<div class="t" style="left:431px;top:860.80px;height:15px;line-height:15px;font-size:11px;color:#000;letter-spacing:-0.027px;">0.01</div>
<div class="a" style="left:141px;top:706.5px;width:346px;height:1.1px;background:#8a8a8a;"></div>
<div class="a" style="left:141px;top:720.5px;width:346px;height:1.1px;background:#8a8a8a;"></div>
<div class="a" style="left:141px;top:734.5px;width:346px;height:1.1px;background:#8a8a8a;"></div>
<div class="a" style="left:141px;top:748.5px;width:346px;height:1.1px;background:#8a8a8a;"></div>
<div class="a" style="left:141px;top:762.5px;width:346px;height:1.1px;background:#8a8a8a;"></div>
<div class="a" style="left:141px;top:776.5px;width:346px;height:1.1px;background:#8a8a8a;"></div>
<div class="a" style="left:141px;top:790.5px;width:346px;height:1.1px;background:#8a8a8a;"></div>
<div class="a" style="left:141px;top:804.5px;width:346px;height:1.1px;background:#8a8a8a;"></div>
<div class="a" style="left:141px;top:818.5px;width:346px;height:1.1px;background:#8a8a8a;"></div>
<div class="a" style="left:141px;top:832.5px;width:346px;height:1.1px;background:#8a8a8a;"></div>
<div class="a" style="left:141px;top:846.5px;width:346px;height:1.1px;background:#8a8a8a;"></div>
<div class="a" style="left:141px;top:860.5px;width:346px;height:1.1px;background:#8a8a8a;"></div>
<div class="a" style="left:197px;top:693px;width:1px;height:179px;background:#8a8a8a;"></div>
<div class="a" style="left:254px;top:693px;width:1px;height:179px;background:#8a8a8a;"></div>
<div class="a" style="left:313px;top:693px;width:1px;height:179px;background:#8a8a8a;"></div>
<div class="a" style="left:371px;top:693px;width:1px;height:179px;background:#8a8a8a;"></div>
<div class="a" style="left:429px;top:693px;width:1px;height:179px;background:#8a8a8a;"></div>
<div class="a" style="left:487px;top:693px;width:1px;height:179px;background:#8a8a8a;"></div>
<div class="a" style="left:140.5px;top:872px;width:366px;height:1px;background:#a0a0a0;"></div>
<div class="a" style="left:139px;top:873px;width:368px;height:0.2px;background:#f0f0f0;"></div>
<div class="a" style="left:489px;top:693px;width:16px;height:179px;background:#f0f0f0;"></div><div class="a" style="left:489.5px;top:713px;width:15px;height:67.5px;background:#cdcdcd;"></div><svg class="a" style="left:489px;top:697px;width:16px;height:10px" viewBox="0 0 16 10"><path d="M4.0 7.500L8.0 3.500L12.0 7.500" fill="none" stroke="#505050" stroke-width="1.300"/></svg><svg class="a" style="left:489px;top:859px;width:16px;height:10px" viewBox="0 0 16 10"><path d="M4.0 2.500L8.0 6.500L12.0 2.500" fill="none" stroke="#505050" stroke-width="1.300"/></svg>
<div class="a" style="left:510.4px;top:640px;width:18.5px;height:19.5px;background:#f2f2f2;border:1px solid #cfcfcf;box-sizing:border-box;"></div>
<div class="a" style="left:534px;top:640px;width:18.5px;height:19.5px;background:#f2f2f2;border:1px solid #cfcfcf;box-sizing:border-box;"></div>
<div class="a" style="left:510.4px;top:662.5px;width:18.5px;height:19.5px;background:#f2f2f2;border:1px solid #cfcfcf;box-sizing:border-box;"></div>
<div class="a" style="left:534px;top:662.5px;width:18.5px;height:19.5px;background:#f2f2f2;border:1px solid #cfcfcf;box-sizing:border-box;"></div>
<div class="a" style="left:510.4px;top:685px;width:18.5px;height:19.5px;background:#f2f2f2;border:1px solid #cfcfcf;box-sizing:border-box;"></div>
<div class="a" style="left:534px;top:685px;width:18.5px;height:19.5px;background:#f2f2f2;border:1px solid #cfcfcf;box-sizing:border-box;"></div>
<div class="a" style="left:510.4px;top:707.5px;width:18.5px;height:19.5px;background:#f2f2f2;border:1px solid #cfcfcf;box-sizing:border-box;"></div>
<div class="a" style="left:534px;top:707.5px;width:18.5px;height:19.5px;background:#f2f2f2;border:1px solid #cfcfcf;box-sizing:border-box;"></div>
<div class="a" style="left:510.4px;top:730px;width:18.5px;height:19.5px;background:#f2f2f2;border:1px solid #cfcfcf;box-sizing:border-box;"></div>
<div class="a" style="left:534px;top:730px;width:18.5px;height:19.5px;background:#f2f2f2;border:1px solid #cfcfcf;box-sizing:border-box;"></div>
<div class="a" style="left:510.4px;top:752px;width:18.5px;height:19.5px;background:#f2f2f2;border:1px solid #cfcfcf;box-sizing:border-box;"></div>
<svg class="a" style="left:512px;top:642px;width:16px;height:16px" viewBox="0 0 16 16"><path d="M10.500 13.500v-7c0-1.500-3-1.500-3 0l0 1.500 2.500-0.500-5 6-3.500-7 2.800 1v-1.500c0.500-5.500 9.700-5.500 9.700 0.500v7z" fill="#2a86ea" stroke="#1a56c0" stroke-width="0.700" stroke-linejoin="round"/><rect x="12.500" y="12.500" width="2" height="2" fill="#111"/></svg>
<svg class="a" style="left:513px;top:665px;width:15px;height:15px" viewBox="0 0 15 15"><path transform="translate(1,1.5) scale(1.5)" d="M1.5 0L4 2.5L6.5 0L8 1.5L5.5 4L8 6.5L6.5 8L4 5.5L1.5 8L0 6.5L2.5 4L0 1.5z" fill="url(#gred)" stroke="#e0401a" stroke-width="0.5" stroke-linejoin="round"/></svg>
<svg class="a" style="left:512px;top:687px;width:16px;height:16px" viewBox="0 0 16 16"><path d="M1.500 10l5-3 8 3-5 3.500z" fill="#f4d040" stroke="#c8962a" stroke-width="0.700"/><path d="M5.500 9l4-6 2 1.500-3.500 6z" fill="#6ac84a" stroke="#3a8a2a" stroke-width="0.600"/><circle cx="11" cy="3" r="1.300" fill="#e8443a"/></svg>
<svg class="a" style="left:512.5px;top:710px;width:16px;height:16px" viewBox="0 0 18 18"><path d="M11.90 7.00 L13.57 7.62 L13.06 9.62 L11.29 9.36 L10.46 10.46 L11.21 12.09 L9.43 13.14 L8.37 11.71 L7.00 11.90 L6.38 13.57 L4.38 13.06 L4.64 11.29 L3.54 10.46 L1.91 11.21 L0.86 9.43 L2.29 8.37 L2.10 7.00 L0.43 6.38 L0.94 4.38 L2.71 4.64 L3.54 3.54 L2.79 1.91 L4.57 0.86 L5.63 2.29 L7.00 2.10 L7.62 0.43 L9.62 0.94 L9.36 2.71 L10.46 3.54 L12.09 2.79 L13.14 4.57 L11.71 5.63Z" fill="url(#ggear)" stroke="#8a8ac0" stroke-width="0.600" stroke-linejoin="round"/><circle cx="7" cy="7" r="2.300" fill="#f6f6fc" stroke="#8a8ac0" stroke-width="0.600"/><text x="1" y="6" font-size="7" font-weight="bold" fill="#1a4ad8" font-family="Liberation Sans,sans-serif">5</text></svg>
<svg class="a" style="left:512.5px;top:732.5px;width:16px;height:16px" viewBox="0 0 18 18"><path d="M11.90 7.00 L13.57 7.62 L13.06 9.62 L11.29 9.36 L10.46 10.46 L11.21 12.09 L9.43 13.14 L8.37 11.71 L7.00 11.90 L6.38 13.57 L4.38 13.06 L4.64 11.29 L3.54 10.46 L1.91 11.21 L0.86 9.43 L2.29 8.37 L2.10 7.00 L0.43 6.38 L0.94 4.38 L2.71 4.64 L3.54 3.54 L2.79 1.91 L4.57 0.86 L5.63 2.29 L7.00 2.10 L7.62 0.43 L9.62 0.94 L9.36 2.71 L10.46 3.54 L12.09 2.79 L13.14 4.57 L11.71 5.63Z" fill="url(#ggear)" stroke="#8a8ac0" stroke-width="0.600" stroke-linejoin="round"/><circle cx="7" cy="7" r="2.300" fill="#f6f6fc" stroke="#8a8ac0" stroke-width="0.600"/><path d="M7 8l5 3-3 1z" fill="#f0c030" stroke="#c89020" stroke-width="0.500"/></svg>
<svg class="a" style="left:512px;top:754px;width:16px;height:16px" viewBox="0 0 16 16"><circle cx="6.500" cy="6.500" r="5" fill="#bcd8f4" stroke="#6a9ad8" stroke-width="1.200"/><circle cx="6.500" cy="6.500" r="2.500" fill="#e8f2fc"/><path d="M10 10l4.500 4.500" stroke="#e8741a" stroke-width="2.500" stroke-linecap="round"/></svg>
<svg class="a" style="left:536px;top:642px;width:16px;height:16px" viewBox="0 0 16 16"><path d="M3 13.500v-7c0-6 9.200-6 9.700-0.500v1.500l2.800-1-3.500 7-5-6 2.500 0.500v-1.500c0-1.500-3-1.500-3 0v7z" fill="#a4a4a4" stroke="#808080" stroke-width="0.700" stroke-linejoin="round"/><rect x="12.500" y="12.800" width="1.800" height="1.800" fill="#666"/></svg>
<svg class="a" style="left:536px;top:665px;width:16px;height:16px" viewBox="0 0 16 16"><path d="M3 1.500l11 6.500-11 6.500z" fill="url(#ggrn)" stroke="#1f9a1f" stroke-width="0.800"/></svg>
<svg class="a" style="left:536px;top:687px;width:16px;height:16px" viewBox="0 0 16 16"><rect x="1" y="1" width="13.500" height="13.500" fill="#f4f6fc" stroke="#333" stroke-width="1" stroke-dasharray="1.500 1"/><path d="M4 4h5M4 7h4M4 10h3" stroke="#5a7ad8" stroke-width="0.900"/><path d="M6 11l6-8 1.500 1-6 8z" fill="#3ab83a" stroke="#1a7a1a" stroke-width="0.500"/><path d="M10 2l3-1" stroke="#e8241a" stroke-width="1.200"/></svg>
<svg class="a" style="left:536px;top:710px;width:16px;height:16px" viewBox="0 0 16 16"><path d="M2 5h8v-2.500l4.500 4-4.500 4v-2.500h-8z" fill="#222"/><path d="M14 11h-8v2.500l-4.500-4" fill="#222"/><circle cx="5" cy="10.500" r="2.500" fill="#c0d4ec" stroke="#5a7ab0" stroke-width="0.600"/><circle cx="10.500" cy="5" r="2.200" fill="#c0d4ec" stroke="#5a7ab0" stroke-width="0.600"/></svg>
<svg class="a" style="left:536px;top:732px;width:16px;height:16px" viewBox="0 0 16 16"><rect x="2.500" y="1.500" width="11" height="13" fill="#dce8f8" stroke="#7a9ad0" stroke-width="0.800"/><path d="M8.500 3v10M11 3v10M5 5h7M5 8h7M5 11h7" stroke="#a8c0e4" stroke-width="0.600"/><path d="M3.500 14v-6l2-3 1.500 3v6z" fill="#333"/><rect x="4" y="9" width="2" height="2" fill="#f0c030"/></svg>
<div class="a" style="left:558.5px;top:637px;width:982.5px;height:236px;background:#f0f0f0;border:1px solid #8e94a0;border-left:2px solid #6a6a6a;border-top:none;box-sizing:border-box;"></div>
<div class="a" style="left:561px;top:644px;width:89px;height:51px;background:#f0f0f0;border:1px solid #d2d2d2;box-sizing:border-box;"></div><svg class="a" style="left:563px;top:648px;width:10px;height:10px" viewBox="0 0 10 10"><circle cx="4" cy="4" r="3.300" fill="#d8ecfc" stroke="#6a9ac8" stroke-width="0.800"/><path d="M6.500 6.500l2.500 2.500" stroke="#c8a060" stroke-width="1.400"/><path d="M2 4h4M4 2v4" stroke="#1f9a1f" stroke-width="1.400"/></svg><svg class="a" style="left:574px;top:648px;width:10px;height:10px" viewBox="0 0 10 10"><circle cx="4" cy="4" r="3.300" fill="#d8ecfc" stroke="#6a9ac8" stroke-width="0.800"/><path d="M6.500 6.500l2.500 2.500" stroke="#c8a060" stroke-width="1.400"/><path d="M2 4h4" stroke="#d8241a" stroke-width="1.400"/></svg><div class="t" style="left:588px;top:646.50px;height:15px;line-height:15px;font-size:11px;color:#000;letter-spacing:-0.306px;">dvth0_n</div><svg class="a" style="left:640px;top:648px;width:9px;height:11px" viewBox="0 0 9 11"><path d="M1.500 5V3.500c0-3 4.500-3 4.500-0.500" fill="none" stroke="#c8a81a" stroke-width="1.200"/><rect x="1.500" y="4.500" width="7" height="6" rx="1" fill="#f0d020" stroke="#b8961a" stroke-width="0.700"/><rect x="4.300" y="6.500" width="1.400" height="2.500" fill="#5a4a0a"/></svg><div class="a" style="left:575px;top:661px;width:62px;height:15px;background:#ffffff;"></div><div class="a" style="left:563px;top:661px;width:12px;height:15px;background:#f0f0f0;border-right:1px solid #696969;border-bottom:1px solid #696969;border-left:1px solid #fff;border-top:1px solid #fff;box-sizing:border-box;"></div><div class="a" style="left:637px;top:661px;width:12px;height:15px;background:#f0f0f0;border-right:1px solid #696969;border-bottom:1px solid #696969;border-left:1px solid #fff;border-top:1px solid #fff;box-sizing:border-box;"></div><svg class="a" style="left:566px;top:665px;width:6px;height:8px" viewBox="0 0 6 8"><path d="M4.500 0.500v7L1 4z" fill="#222"/></svg><svg class="a" style="left:640px;top:665px;width:6px;height:8px" viewBox="0 0 6 8"><path d="M1.500 0.500v7L5 4z" fill="#222"/></svg><div class="t" style="left:592px;top:661.50px;height:15px;line-height:15px;font-size:11px;color:#000;letter-spacing:-0.206px;">9.494E-2</div><div class="a" style="left:566px;top:682.5px;width:79px;height:2px;background:#e3e3e3;border-radius:1px;"></div><div class="a" style="left:610.5px;top:677px;width:4.5px;height:14px;background:#0078d7;"></div>
<div class="a" style="left:651px;top:644px;width:89px;height:51px;background:#f0f0f0;border:1px solid #d2d2d2;box-sizing:border-box;"></div><svg class="a" style="left:653px;top:648px;width:10px;height:10px" viewBox="0 0 10 10"><circle cx="4" cy="4" r="3.300" fill="#d8ecfc" stroke="#6a9ac8" stroke-width="0.800"/><path d="M6.500 6.500l2.500 2.500" stroke="#c8a060" stroke-width="1.400"/><path d="M2 4h4M4 2v4" stroke="#1f9a1f" stroke-width="1.400"/></svg><svg class="a" style="left:664px;top:648px;width:10px;height:10px" viewBox="0 0 10 10"><circle cx="4" cy="4" r="3.300" fill="#d8ecfc" stroke="#6a9ac8" stroke-width="0.800"/><path d="M6.500 6.500l2.500 2.500" stroke="#c8a060" stroke-width="1.400"/><path d="M2 4h4" stroke="#d8241a" stroke-width="1.400"/></svg><div class="t" style="left:678px;top:646.50px;height:15px;line-height:15px;font-size:11px;color:#000;letter-spacing:-0.306px;">dvth0_p</div><svg class="a" style="left:730px;top:648px;width:9px;height:11px" viewBox="0 0 9 11"><path d="M1.500 5V3.500c0-3 4.500-3 4.500-0.500" fill="none" stroke="#c8a81a" stroke-width="1.200"/><rect x="1.500" y="4.500" width="7" height="6" rx="1" fill="#f0d020" stroke="#b8961a" stroke-width="0.700"/><rect x="4.300" y="6.500" width="1.400" height="2.500" fill="#5a4a0a"/></svg><div class="a" style="left:665px;top:661px;width:62px;height:15px;background:#ffffff;"></div><div class="a" style="left:653px;top:661px;width:12px;height:15px;background:#f0f0f0;border-right:1px solid #696969;border-bottom:1px solid #696969;border-left:1px solid #fff;border-top:1px solid #fff;box-sizing:border-box;"></div><div class="a" style="left:727px;top:661px;width:12px;height:15px;background:#f0f0f0;border-right:1px solid #696969;border-bottom:1px solid #696969;border-left:1px solid #fff;border-top:1px solid #fff;box-sizing:border-box;"></div><svg class="a" style="left:656px;top:665px;width:6px;height:8px" viewBox="0 0 6 8"><path d="M4.500 0.500v7L1 4z" fill="#222"/></svg><svg class="a" style="left:730px;top:665px;width:6px;height:8px" viewBox="0 0 6 8"><path d="M1.500 0.500v7L5 4z" fill="#222"/></svg><div class="t" style="left:678px;top:661.50px;height:15px;line-height:15px;font-size:11px;color:#000;letter-spacing:-0.146px;">-9.977E-2</div><div class="a" style="left:656px;top:682.5px;width:79px;height:2px;background:#e3e3e3;border-radius:1px;"></div><div class="a" style="left:685px;top:677px;width:4.5px;height:14px;background:#0078d7;"></div>
<div class="a" style="left:1542px;top:637px;width:52px;height:18px;background:#f0f0f0;"></div>
<div class="a" style="left:1541.5px;top:638px;width:25px;height:17.5px;background:#f2f2f2;border:1px solid #cfcfcf;box-sizing:border-box;"></div>
<div class="a" style="left:1568px;top:638px;width:25px;height:17.5px;background:#f2f2f2;border:1px solid #cfcfcf;box-sizing:border-box;"></div>
<div class="a" style="left:1541px;top:655.5px;width:53.5px;height:199.5px;background:#ffffff;border:1px solid #9a9aa6;border-left:1.500px solid #8a8e9c;box-sizing:border-box;"></div>
<div class="a" style="left:1541.5px;top:855.5px;width:25px;height:16.5px;background:#f2f2f2;border:1px solid #cfcfcf;box-sizing:border-box;"></div>
<div class="a" style="left:1568px;top:855.5px;width:25px;height:16.5px;background:#f2f2f2;border:1px solid #cfcfcf;box-sizing:border-box;"></div>
<svg class="a" style="left:1548.5px;top:640.5px;width:12px;height:12px" viewBox="0 0 12 12"><path d="M6 0.800L11 6H8v5H4V6H1z" fill="#4ad83a" stroke="#1f9a1f" stroke-width="0.800"/></svg>
<svg class="a" style="left:1574.5px;top:640.5px;width:12px;height:12px" viewBox="0 0 12 12"><path d="M6 11.200L11 6H8V1H4v5H1z" fill="#4ad83a" stroke="#1f9a1f" stroke-width="0.800"/></svg>
<svg class="a" style="left:1547.5px;top:857px;width:14px;height:14px" viewBox="0 0 14 14"><path transform="translate(1,1) scale(1.2)" d="M0 3h3v-3h3v3h3v3h-3v3h-3v-3h-3z" fill="url(#ggrn)" stroke="#1a8a1a" stroke-width="0.7" stroke-linejoin="round"/></svg>
<svg class="a" style="left:1573.5px;top:857px;width:14px;height:14px" viewBox="0 0 14 14"><path transform="translate(1,1) scale(1.4)" d="M1.5 0L4 2.5L6.5 0L8 1.5L5.5 4L8 6.5L6.5 8L4 5.5L1.5 8L0 6.5L2.5 4L0 1.5z" fill="url(#gred)" stroke="#e0401a" stroke-width="0.5" stroke-linejoin="round"/></svg>
<div class="a" style="left:1595px;top:633px;width:2px;height:267px;background:#f4f4f4;"></div>
<div class="a" style="left:0px;top:873px;width:1597px;height:27px;background:#f0f0f0;"></div>
<div class="a" style="left:1.5px;top:873.7px;width:1595.5px;height:4.6px;background:#ffffff;"></div>
<div class="a" style="left:0px;top:873px;width:1.5px;height:27px;background:#5a5a5a;"></div>
<div class="a" style="left:1.5px;top:875.5px;width:66px;height:22px;background:#ffffff;"></div>
<div class="a" style="left:67.5px;top:879px;width:49px;height:17.5px;background:#f0f0f0;border:1px solid #dcdcdc;box-sizing:border-box;"></div>
<div class="t" style="left:7px;top:881.00px;height:15px;line-height:15px;font-size:11px;color:#000;letter-spacing:-0.186px;">Parameters</div>
<div class="t" style="left:72px;top:880.00px;height:15px;line-height:15px;font-size:11px;color:#000;letter-spacing:-0.519px;">Message</div>
<div class="a" style="left:0px;top:898px;width:1600px;height:2px;background:#ffffff;"></div>
</body></html>
